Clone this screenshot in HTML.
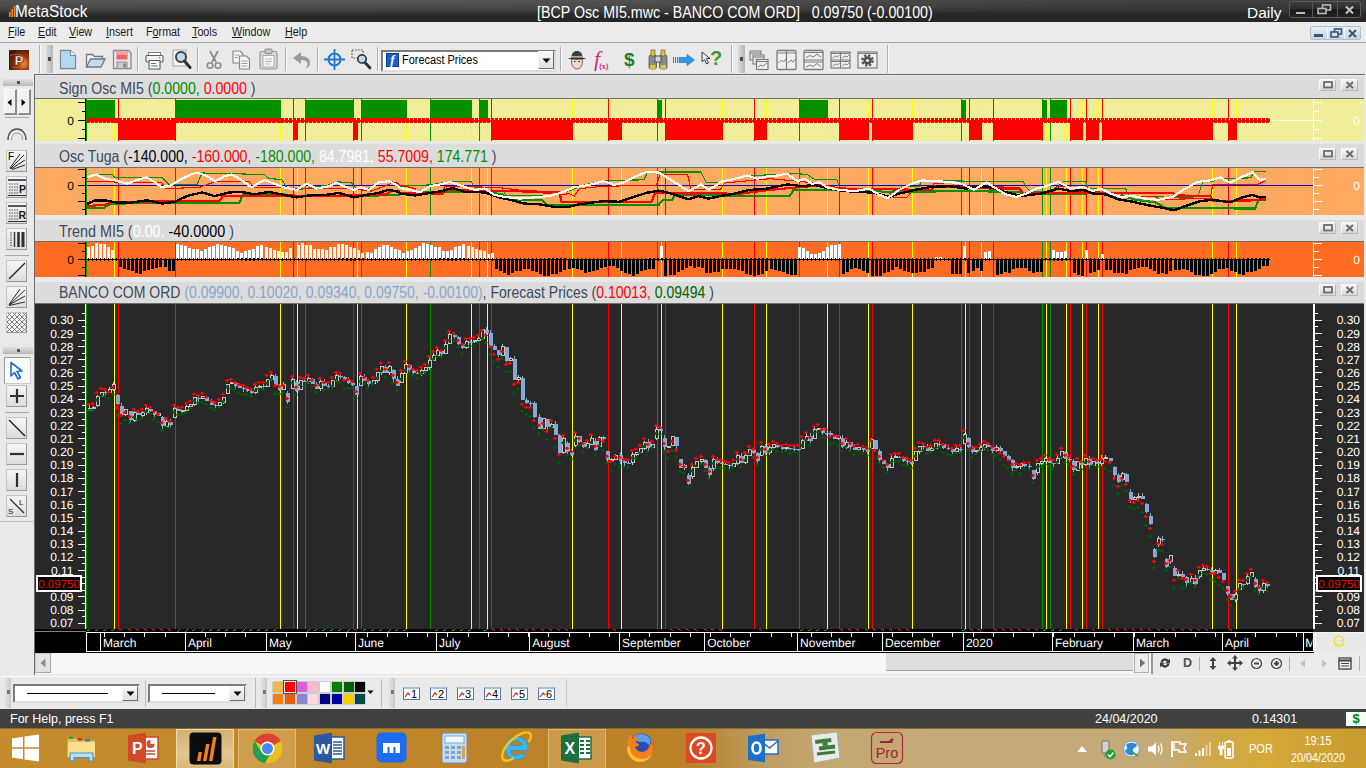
<!DOCTYPE html>
<html><head><meta charset="utf-8"><title>MetaStock</title>
<style>
*{box-sizing:border-box;margin:0;padding:0}
html,body{width:1366px;height:768px;overflow:hidden;background:#e9e9e9;font-family:"Liberation Sans",sans-serif;}
.abs{position:absolute}
#title{left:0;top:0;width:1366px;height:22px;background:radial-gradient(ellipse 900px 16px at 300px 0,#5a5a5a,rgba(90,90,90,0) 100%),linear-gradient(#404040 0%,#343434 50%,#2a2a2a 60%,#262626 100%);color:#fff;font-size:15.5px;line-height:24px;white-space:pre}
#menu{left:0;top:22px;width:1366px;height:21px;background:#ececec;font-size:12.5px;color:#1a1a1a;line-height:20px}
#menu span{transform:scaleX(.86);transform-origin:0 0}
#menu span{position:absolute;top:0}
#menu u{text-decoration:underline;text-underline-offset:1px}
#tb{left:0;top:43px;width:1366px;height:32px;background:#e9e9e9}
#left{left:0;top:75px;width:34px;height:601px;background:#e9e9e9}
.ptitle{font-size:16.5px;line-height:22px;color:#3c4a5e;white-space:pre;transform-origin:0 0}
.pbtn{width:17px;height:12px;background:linear-gradient(#f4f4f4,#d8d8d8);border:1px solid #b8b8b8;border-top-color:#fafafa;border-left-color:#fafafa}
#status{left:0;top:709px;width:1366px;height:19px;background:#404040;color:#fff;font-size:12.5px;line-height:21px}
#task{left:0;top:728px;width:1366px;height:40px;border-top:1px solid #86702c;background:linear-gradient(90deg,#c48c2c 0%,#be8428 30%,#bc8026 50%,#b98838 52%,#bf9c60 55.500%,#c3a670 60%,#c4aa78 68%,#c4aa78 85%,#cfa848 89%,#d4a838 93%,#c89a30 100%)}
.tbsep{width:1px;height:24px;background:#b4b4b4;top:4px}
.lbtn{left:6px;width:21px;height:21px;background:linear-gradient(#f6f6f6,#dcdcdc);border:1px solid #c4c4c4;border-bottom-color:#9a9a9a;border-right-color:#9a9a9a}
</style></head><body>
<!-- TITLE BAR -->
<div id="title" class="abs">
<svg class="abs" style="left:9px;top:5px" width="8" height="12"><rect x="0" y="7" width="1.6" height="5" fill="#f08a20"/><rect x="2.4" y="4" width="1.6" height="8" fill="#f08a20"/><rect x="4.8" y="1" width="1.6" height="11" fill="#f08a20"/></svg>
<span class="abs" style="left:15px;top:0px;font-size:17px;transform:scaleX(.9);transform-origin:0 0">MetaStock</span>
<span class="abs" style="left:537px;top:1px;font-size:16px;transform:scaleX(.889);transform-origin:0 0">[BCP Osc MI5.mwc - BANCO COM ORD]   0.09750 (-0.00100)</span>
<span class="abs" style="left:1247px;top:1px;font-size:15.5px">Daily</span>
<div class="abs" style="left:1289px;top:1px;width:72px;height:17px;border:1px solid #5c5c5c;border-radius:3px;background:linear-gradient(#3c3c3c,#2c2c2c 50%,#1a1a1a 50%,#222)"></div>
<div class="abs" style="left:1312px;top:2px;width:1px;height:15px;background:#555"></div>
<div class="abs" style="left:1337px;top:2px;width:1px;height:15px;background:#555"></div>
<div class="abs" style="left:1296px;top:12px;width:9px;height:2px;background:#bcbcbc"></div>
<svg class="abs" style="left:1317px;top:4px" width="15" height="11"><rect x="5.5" y="1" width="8" height="5" fill="none" stroke="#b8b8b8" stroke-width="1.6"/><rect x="1" y="4.5" width="8" height="5" fill="#2a2a2a" stroke="#b8b8b8" stroke-width="1.6"/></svg>
<svg class="abs" style="left:1344px;top:5px" width="11" height="10"><path d="M2 1.5L9 8.5M9 1.5L2 8.5" stroke="#c4c4c4" stroke-width="2"/></svg>
</div>
<!-- MENU -->
<div id="menu" class="abs">
<span style="left:8px"><u>F</u>ile</span><span style="left:38px"><u>E</u>dit</span><span style="left:69px"><u>V</u>iew</span><span style="left:106px"><u>I</u>nsert</span><span style="left:146px">F<u>o</u>rmat</span><span style="left:192px"><u>T</u>ools</span><span style="left:232px"><u>W</u>indow</span><span style="left:285px"><u>H</u>elp</span>
<div class="abs" style="left:1310px;top:4px;width:51px;height:14px;border:1px solid #a8c0d8;border-radius:2px;background:linear-gradient(#e4eef8,#c4d6e8)"></div>
<div class="abs" style="left:1327px;top:5px;width:1px;height:12px;background:#f4f8fc"></div>
<div class="abs" style="left:1344px;top:5px;width:1px;height:12px;background:#f4f8fc"></div>
<div class="abs" style="left:1314px;top:12px;width:9px;height:3px;background:#3c5870"></div>
<svg class="abs" style="left:1330px;top:6px" width="13" height="10"><rect x="4.5" y="1" width="7" height="5" fill="none" stroke="#3c5870" stroke-width="1.6"/><rect x="1" y="4" width="7" height="5" fill="#d4e0f0" stroke="#3c5870" stroke-width="1.6"/></svg>
<svg class="abs" style="left:1347px;top:7px" width="11" height="9"><path d="M2 1L9 8M9 1L2 8" stroke="#3c5870" stroke-width="2"/></svg>
</div>
<div class="abs" style="left:0;top:42px;width:1366px;height:1px;background:#a8a8a8"></div><div class="abs" style="left:0;top:43px;width:1366px;height:1px;background:#fafafa"></div>
<!-- TOOLBAR -->
<div id="tb" class="abs">
<svg class="abs" style="left:9px;top:7px" width="20" height="20" viewBox="0 0 20 20"><defs><radialGradient id="pg" cx="75%" cy="70%" r="80%"><stop offset="0" stop-color="#e88a28"/><stop offset=".35" stop-color="#a84010"/><stop offset="1" stop-color="#4a1808"/></radialGradient></defs><rect width="20" height="20" fill="url(#pg)"/><path d="M1 6c5-3 12-2 15 3s0 9-5 9" fill="none" stroke="#e8a060" stroke-width=".7" opacity=".7"/><path d="M3 17c6 2 13-2 14-8" fill="none" stroke="#f0b070" stroke-width=".6" opacity=".6"/><text x="10" y="15" font-size="13" font-weight="bold" text-anchor="middle" fill="#fff" stroke="#3a1a10" stroke-width=".4" font-family="Liberation Sans">P</text></svg>
<div class="abs" style="left:39px;top:2px;width:1px;height:28px;background:#b0b0b0"></div><div class="abs" style="left:40px;top:2px;width:1px;height:28px;background:#fbfbfb"></div>
<div class="abs" style="left:46px;top:2px;width:7px;height:28px;background:linear-gradient(90deg,#dcdcdc,#b4b4b4);border-radius:1px"></div><div class="abs" style="left:48px;top:14px;width:3px;height:4px;background:#4a4a4a"></div>
<svg class="abs" style="left:59px;top:6px" width="18" height="21" viewBox="0 0 18 21"><path d="M1.5 1.5h10l5 5v13h-15z" fill="#bfe0f4" stroke="#808890" stroke-width="1.3"/><path d="M11.5 1.5v5h5" fill="#fff" stroke="#808890" stroke-width="1.2"/><path d="M3 3h8v4h4v11H3z" fill="#a8d4f0" opacity=".7"/></svg>
<svg class="abs" style="left:85px;top:8px" width="21" height="18" viewBox="0 0 21 18"><path d="M1.5 16V3.5h6l2 2h8v3" fill="#f4f4f4" stroke="#707880" stroke-width="1.3"/><path d="M1.5 16l4-8h14.5l-4 8z" fill="#c4dcf0" stroke="#707880" stroke-width="1.3"/></svg>
<svg class="abs" style="left:112px;top:6px" width="20" height="21" viewBox="0 0 20 21"><path d="M1.5 1.5h15l2.5 2.5v15.5h-17.5z" fill="#e8e8ec" stroke="#8a8a94" stroke-width="1.3"/><rect x="4.5" y="2" width="11" height="8.5" fill="#f06068"/><rect x="4.5" y="2" width="11" height="4" fill="#f8a0a4"/><rect x="5" y="13" width="10" height="6.5" fill="#c8c8d0" stroke="#8a8a94"/><rect x="11.5" y="14.5" width="2" height="4" fill="#70707a"/></svg>
<div class="abs" style="left:137px;top:4px;width:1px;height:24px;background:#b0b0b0"></div><div class="abs" style="left:138px;top:4px;width:1px;height:24px;background:#fbfbfb"></div>
<svg class="abs" style="left:145px;top:8px" width="19" height="19" viewBox="0 0 19 19"><rect x="3.5" y="1.5" width="12" height="4" fill="#fff" stroke="#808080" stroke-width="1"/><rect x="1" y="4.500" width="17" height="6.500" rx="1" fill="#f4f4f4" stroke="#606060" stroke-width="1.1"/><rect x="14" y="6" width="1.500" height="1.500" fill="#50b050"/><rect x="4" y="9.500" width="11" height="8.500" fill="#f8fff8" stroke="#606060" stroke-width="1.100"/><path d="M6 12.500h5M6 15h7" stroke="#508050" stroke-width="1"/></svg>
<svg class="abs" style="left:172px;top:6px" width="20" height="21" viewBox="0 0 20 21"><rect x="1" y="1" width="13" height="16" fill="#f4f4f4" stroke="#a8a8a8"/><circle cx="9" cy="8" r="5" fill="#b8daf4" stroke="#404040" stroke-width="2"/><path d="M12.5 12l5.5 6.5" stroke="#303030" stroke-width="3" stroke-linecap="round"/></svg>
<div class="abs" style="left:197px;top:4px;width:1px;height:24px;background:#b0b0b0"></div><div class="abs" style="left:198px;top:4px;width:1px;height:24px;background:#fbfbfb"></div>
<svg class="abs" style="left:206px;top:7px" width="16" height="20" viewBox="0 0 16 20"><path d="M4 1l6 11M12 1L6 12" stroke="#8c8c8c" stroke-width="1.8"/><circle cx="4" cy="15.5" r="2.8" fill="none" stroke="#8c8c8c" stroke-width="1.6"/><circle cx="12" cy="15.5" r="2.8" fill="none" stroke="#8c8c8c" stroke-width="1.6"/></svg>
<svg class="abs" style="left:232px;top:7px" width="19" height="20" viewBox="0 0 19 20"><path d="M1 1h7l3 3v9H1z" fill="#f2f2f2" stroke="#8a8a8a" stroke-width="1.2"/><path d="M7.5 6h7l3 3v10h-10z" fill="#f6f6f6" stroke="#8a8a8a" stroke-width="1.2"/><path d="M9.5 11h6M9.5 13.500h6M9.500 16h6M3 5h4M3 7.500h3" stroke="#a0a0a0"/></svg>
<svg class="abs" style="left:259px;top:5px" width="19" height="22" viewBox="0 0 19 22"><rect x="1" y="3.500" width="17" height="17.500" rx="1.500" fill="#dadada" stroke="#9a9a9a" stroke-width="1.2"/><rect x="6" y="1" width="7" height="4.500" rx="1" fill="#c8c8c8" stroke="#8a8a8a"/><rect x="4" y="7.500" width="11" height="11.500" fill="#f8f8f8" stroke="#aaa"/><path d="M6 11h7M6 13.500h7M6 16h5" stroke="#b4b4b4"/></svg>
<div class="abs" style="left:285px;top:4px;width:1px;height:24px;background:#b0b0b0"></div><div class="abs" style="left:286px;top:4px;width:1px;height:24px;background:#fbfbfb"></div>
<svg class="abs" style="left:292px;top:8px" width="19" height="18" viewBox="0 0 19 18"><path d="M1 7l8-6v4c6 0 9 3 9 7 0 3-2 5-5 5.500 2-1.500 2.500-3 2.500-4.500 0-2.500-2.500-4-6.500-4v4z" fill="#9c9c9c"/></svg>
<div class="abs" style="left:317px;top:4px;width:1px;height:24px;background:#b0b0b0"></div><div class="abs" style="left:318px;top:4px;width:1px;height:24px;background:#fbfbfb"></div>
<svg class="abs" style="left:324px;top:6px" width="21" height="21" viewBox="0 0 21 21"><circle cx="10.500" cy="10.500" r="6" fill="none" stroke="#1c78d0" stroke-width="2"/><path d="M10.500 0v21M0 10.500h21" stroke="#1c78d0" stroke-width="1.800"/></svg>
<svg class="abs" style="left:351px;top:6px" width="21" height="21" viewBox="0 0 21 21"><rect x="1" y="1" width="11" height="8" fill="none" stroke="#505050" stroke-width="1.2" stroke-dasharray="1.500 1.500"/><circle cx="11" cy="10" r="4.200" fill="#b8daf4" stroke="#404040" stroke-width="1.800"/><path d="M14 13.500l5 5.500" stroke="#303030" stroke-width="2.800" stroke-linecap="round"/></svg>
<div class="abs" style="left:377px;top:4px;width:1px;height:24px;background:#b0b0b0"></div><div class="abs" style="left:378px;top:4px;width:1px;height:24px;background:#fbfbfb"></div>
<div class="abs" style="left:381px;top:6.5px;width:175px;height:22px;background:#fff;border:2px solid #7c7c7c;border-right-color:#dcdcdc;border-bottom-color:#dcdcdc"></div>
<div class="abs" style="left:386px;top:10px;width:13px;height:14px;background:#1860c8;border:1px solid #0c3c90;color:#fff;font-family:'Liberation Serif',serif;font-style:italic;font-weight:bold;font-size:13px;line-height:12px;text-align:center">f</div>
<div class="abs" style="left:402px;top:10px;font-size:12px;color:#000;transform:scaleX(.91);transform-origin:0 0;white-space:pre">Forecast Prices</div>
<div class="abs" style="left:538px;top:8px;width:16px;height:18px;background:linear-gradient(#f8f8f8,#e0e0e0);border:1px solid #f8f8f8;border-right-color:#707070;border-bottom-color:#707070"></div>
<svg class="abs" style="left:542px;top:15px" width="9" height="6" viewBox="0 0 9 6"><path d="M0.500 0.500h8l-4 4.500z" fill="#000"/></svg>
<div class="abs" style="left:560px;top:4px;width:1px;height:24px;background:#b0b0b0"></div><div class="abs" style="left:561px;top:4px;width:1px;height:24px;background:#fbfbfb"></div>
<svg class="abs" style="left:567px;top:6px" width="20" height="22" viewBox="0 0 20 22"><ellipse cx="10" cy="13" rx="5.500" ry="7" fill="#f0d8c8" stroke="#806860"/><path d="M1 9.500c3-1.500 15-1.500 18 0-2 1.500-16 1.500-18 0z" fill="#303030"/><path d="M4.500 9c0-5 2-7 5.500-7s5.500 2 5.500 7z" fill="#404040"/><rect x="4.500" y="7" width="11" height="1.600" fill="#b0b0b0"/><circle cx="7.800" cy="12.500" r=".8" fill="#202020"/><circle cx="12.200" cy="12.500" r=".8" fill="#202020"/></svg>
<div class="abs" style="left:594px;top:0px;width:22px;height:30px;color:#d02878;font-family:'Liberation Serif',serif;font-style:italic;font-size:22px;line-height:32px">f<span style="font-size:8px;font-style:normal;position:relative;top:3px;left:-1px;font-weight:bold">(x)</span></div>
<div class="abs" style="left:624px;top:3px;color:#1c8030;font-size:19px;line-height:28px;font-weight:bold">$</div>
<svg class="abs" style="left:648px;top:6px" width="20" height="21" viewBox="0 0 20 21"><rect x="1" y="6" width="7.500" height="14" rx="2" fill="#8c8c8c" stroke="#505050" stroke-width=".8"/><rect x="11.500" y="6" width="7.500" height="14" rx="2" fill="#8c8c8c" stroke="#505050" stroke-width=".8"/><rect x="3" y="1" width="4" height="6" fill="#e0c040" stroke="#605020" stroke-width=".6"/><rect x="13" y="1" width="4" height="6" fill="#e0c040" stroke="#605020" stroke-width=".6"/><rect x="7" y="7" width="6" height="6" fill="#d4d4d4" stroke="#505050"/><rect x="2" y="16" width="5.500" height="4" fill="#e0c040"/><rect x="12.500" y="16" width="5.500" height="4" fill="#e0c040"/></svg>
<svg class="abs" style="left:673px;top:11px" width="22" height="12" viewBox="0 0 22 12"><path d="M0.500 3v6M2.500 3v6M4.500 3v6" stroke="#1c88e0" stroke-width="1"/><path d="M6 3.500h8V0.500l7.500 5.500-7.500 5.500V8.500h-8z" fill="#2c98f0" stroke="#1070c8" stroke-width=".6"/></svg>
<svg class="abs" style="left:701px;top:8px" width="11" height="15" viewBox="0 0 11 15"><path d="M1 1v10l2.500-2.500 2 4.500 2-1-2-4.500h3.500z" fill="#e8e8e8" stroke="#404040" stroke-width="1"/></svg>
<div class="abs" style="left:710px;top:2px;color:#3c9c2c;font-weight:bold;font-size:20px;line-height:26px">?</div>
<div class="abs" style="left:731px;top:2px;width:1px;height:28px;background:#b0b0b0"></div><div class="abs" style="left:732px;top:2px;width:1px;height:28px;background:#fbfbfb"></div>
<div class="abs" style="left:738px;top:2px;width:7px;height:28px;background:linear-gradient(90deg,#dcdcdc,#b4b4b4);border-radius:1px"></div><div class="abs" style="left:740px;top:14px;width:3px;height:4px;background:#4a4a4a"></div>
<svg class="abs" style="left:749px;top:7px" width="20" height="21" viewBox="0 0 20 21"><rect x="1" y="1" width="11" height="9" fill="#e4e4e4" stroke="#7c7c7c"/><rect x="4" y="5" width="11" height="9" fill="#e4e4e4" stroke="#7c7c7c"/><rect x="7.500" y="9.500" width="11.500" height="10" fill="#efefef" stroke="#7c7c7c" stroke-width="1.200"/><path d="M9 17l3-2 2 1 4-3" stroke="#7c7c7c" fill="none"/><path d="M1 3h11M4 7h11M7.500 11.500h11.500" stroke="#7c7c7c"/></svg>
<svg class="abs" style="left:776px;top:6px" width="21" height="22" viewBox="0 0 21 22"><rect x="1" y="1.500" width="19" height="19" rx="1" fill="#efefef" stroke="#7c7c7c" stroke-width="1.300"/><path d="M10.500 1.500v19M1 4h19" stroke="#7c7c7c" stroke-width="1.200"/><path d="M2.500 14l3-3 2 2 2.500-3M12 14l3-3 2 2 2.500-3" stroke="#7c7c7c" fill="none"/></svg>
<svg class="abs" style="left:803px;top:6px" width="21" height="22" viewBox="0 0 21 22"><rect x="1" y="1.500" width="19" height="19" rx="1" fill="#efefef" stroke="#7c7c7c" stroke-width="1.300"/><path d="M1 11h19M1 3.500h19M1 13h19" stroke="#7c7c7c" stroke-width="1.100"/><path d="M3 8.500l4-2 3 1.500 4-3 4 3M3 18l4-2 3 1.500 4-3 4 3" stroke="#7c7c7c" fill="none"/></svg>
<svg class="abs" style="left:830px;top:8px" width="21" height="18" viewBox="0 0 21 18"><rect x="1" y="1" width="19" height="16" fill="#efefef" stroke="#7c7c7c" stroke-width="1.200"/><path d="M10.500 1v16M1 9h19M1 2.500h19M1 10.500h19" stroke="#7c7c7c" stroke-width="1.100"/><path d="M2.500 7l3-2 2 1 2-2M12 7l3-2 2 1 2-2M2.500 15l3-2 2 1 2-2M12 15l3-2 2 1 2-2" stroke="#7c7c7c" fill="none" stroke-width=".9"/></svg>
<svg class="abs" style="left:857px;top:8px" width="21" height="18" viewBox="0 0 21 18"><rect x="1" y="1" width="19" height="16" fill="#efefef" stroke="#7c7c7c" stroke-width="1.200"/><path d="M1 2.500h19" stroke="#7c7c7c"/><circle cx="10.500" cy="9.500" r="5" fill="none" stroke="#505050" stroke-width="2.600" stroke-dasharray="2.200 1.727"/><circle cx="10.500" cy="9.500" r="4" fill="#505050"/><circle cx="10.500" cy="9.500" r="1.600" fill="#efefef"/></svg>
<div class="abs" style="left:887px;top:2px;width:1px;height:28px;background:#b0b0b0"></div><div class="abs" style="left:888px;top:2px;width:1px;height:28px;background:#fbfbfb"></div>
</div>
<!-- LEFT TOOLBAR -->
<div id="left" class="abs">
<div class="abs" style="left:3px;top:4px;width:30px;height:7px;background:linear-gradient(#e0e0e0,#b8b8b8)"></div><div class="abs" style="left:17px;top:6px;width:3px;height:3px;background:#555"></div>
<div class="abs" style="left:4px;top:14px;width:13px;height:26px;background:#f2f2f2;border:1px solid #fdfdfd;border-right:2px solid #8c8c8c;border-bottom:2px solid #8c8c8c"></div>
<div class="abs" style="left:18px;top:14px;width:13px;height:26px;background:#f2f2f2;border:1px solid #fdfdfd;border-right:2px solid #8c8c8c;border-bottom:2px solid #8c8c8c"></div>
<svg class="abs" style="left:7px;top:24px" width="5" height="7" viewBox="0 0 5 7"><path d="M4.500 0L0.500 3.500L4.500 7z" fill="#000"/></svg>
<svg class="abs" style="left:21px;top:24px" width="5" height="7" viewBox="0 0 5 7"><path d="M0.500 0L4.500 3.500L0.500 7z" fill="#000"/></svg>
<div class="abs" style="left:5px;top:42px;width:24px;height:1px;background:#a8a8a8"></div>
<svg class="abs" style="left:6px;top:50px" width="22" height="16" viewBox="0 0 22 16"><path d="M2 15c0-7 4-11 9-11s9 4 9 11" fill="none" stroke="#505050" stroke-width="1.400"/><path d="M5.500 15c0-4.500 2.500-7 5.500-7s5.500 2.500 5.500 7" fill="none" stroke="#a0a0a0" stroke-width="1.200"/></svg>
<div class="abs lbtn" style="top:75px;height:22px;"></div><svg class="abs" style="left:7px;top:76px" width="20" height="20" viewBox="0 0 20 20"><text x="1" y="9" font-size="10" font-family="Liberation Sans" fill="#000">F</text><path d="M3 18L17 4M4 18l14-9M5 18.500l13-4.500M3 17L13 3" stroke="#303030" stroke-width="1"/></svg>
<div class="abs lbtn" style="top:101px;height:22px;"></div><svg class="abs" style="left:7px;top:102px" width="20" height="20" viewBox="0 0 20 20"><path d="M1 3h18" stroke="#303030" stroke-width="1.600"/><path d="M2 7h9M2 10h9M2 13h9M2 16h9" stroke="#505050" stroke-width="1.200" stroke-dasharray="1.500 1"/><text x="12" y="16" font-size="10.500" font-weight="bold" font-family="Liberation Sans" fill="#202020">P</text><path d="M1 18.500h18" stroke="#303030"/></svg>
<div class="abs lbtn" style="top:127px;height:22px;"></div><svg class="abs" style="left:7px;top:128px" width="20" height="20" viewBox="0 0 20 20"><path d="M1 3h18" stroke="#303030" stroke-width="1.600"/><path d="M2 7h9M2 10h9M2 13h9M2 16h9" stroke="#505050" stroke-width="1.200" stroke-dasharray="1.500 1"/><text x="11.500" y="16" font-size="10.500" font-weight="bold" font-family="Liberation Sans" fill="#202020">R</text><path d="M1 18.500h18" stroke="#303030"/></svg>
<div class="abs lbtn" style="top:153px;height:22px;"></div><svg class="abs" style="left:7px;top:154px" width="20" height="20" viewBox="0 0 20 20"><path d="M4 3v15" stroke="#404040" stroke-width="1" stroke-dasharray="1.500 1"/><path d="M7.500 3v15" stroke="#404040" stroke-width="1.500"/><path d="M11.500 3v15" stroke="#303030" stroke-width="2.500"/><path d="M16 3v15" stroke="#303030" stroke-width="3"/></svg>
<div class="abs" style="left:5px;top:180px;width:24px;height:1px;background:#a8a8a8"></div>
<div class="abs lbtn" style="top:185px;height:22px;"></div><svg class="abs" style="left:7px;top:186px" width="20" height="20" viewBox="0 0 20 20"><path d="M2 18L18 2" stroke="#202020" stroke-width="1.300"/></svg>
<div class="abs lbtn" style="top:211px;height:22px;"></div><svg class="abs" style="left:7px;top:212px" width="20" height="20" viewBox="0 0 20 20"><path d="M2 18L18 3M2 18l16-9M2 18.500l16-3.500M2 17.500L13 2" stroke="#303030" stroke-width="1"/></svg>
<div class="abs lbtn" style="top:237px;height:21px;background:#f4f4f4"></div>
<svg class="abs" style="left:7px;top:238px" width="20" height="19" viewBox="0 0 20 19"><path d="M0 4L4 0M0 9L9 0M0 14L14 0M0 19L19 0M5 19L20 4M10 19L20 9M15 19L20 14M16 0L20 4M11 0L20 9M6 0L20 14M1 0L20 19M0 4L15 19M0 9L10 19M0 14L5 19" stroke="#606060" stroke-width=".8" fill="none"/></svg>
<div class="abs" style="left:3px;top:272px;width:30px;height:7px;background:linear-gradient(#e0e0e0,#b8b8b8)"></div><div class="abs" style="left:17px;top:274px;width:3px;height:3px;background:#555"></div>
<div class="abs" style="left:4px;top:282px;width:27px;height:27px;background:#fafafa;border:1px solid #c8c8c8;border-top-color:#9a9a9a;border-left-color:#9a9a9a"></div>
<svg class="abs" style="left:9px;top:286px" width="16" height="19" viewBox="0 0 16 19"><path d="M2 1.500l11 8.500-5 .5 3.500 6-2.500 1.500-3.500-6.500-3.500 3.500z" fill="#fff" stroke="#1c70d8" stroke-width="1.600" stroke-linejoin="round"/></svg>
<div class="abs lbtn" style="top:310px;height:22px;"></div><svg class="abs" style="left:7px;top:311px" width="20" height="20" viewBox="0 0 20 20"><path d="M10 3v14M3 10h14" stroke="#303030" stroke-width="2.200"/></svg>
<div class="abs" style="left:5px;top:337px;width:24px;height:1px;background:#a8a8a8"></div>
<div class="abs lbtn" style="top:342px;height:22px;"></div><svg class="abs" style="left:7px;top:343px" width="20" height="20" viewBox="0 0 20 20"><path d="M2 2l16 16" stroke="#202020" stroke-width="1.500"/></svg>
<div class="abs lbtn" style="top:368px;height:22px;"></div><svg class="abs" style="left:7px;top:369px" width="20" height="20" viewBox="0 0 20 20"><path d="M3 10h14" stroke="#303030" stroke-width="2.200"/></svg>
<div class="abs lbtn" style="top:394px;height:22px;"></div><svg class="abs" style="left:7px;top:395px" width="20" height="20" viewBox="0 0 20 20"><path d="M10 3v14" stroke="#303030" stroke-width="2.200"/></svg>
<div class="abs lbtn" style="top:420px;height:22px;"></div><svg class="abs" style="left:7px;top:421px" width="20" height="20" viewBox="0 0 20 20"><path d="M3 3l14 14" stroke="#303030" stroke-width="1.300"/><text x="1" y="18" font-size="8" font-family="Liberation Sans" fill="#202020">S</text><text x="12" y="9" font-size="8" font-family="Liberation Sans" fill="#202020">L</text></svg>
<div class="abs" style="left:0px;top:446px;width:34px;height:1px;background:#c0c0c0"></div>
</div>
<svg width="1366" height="768" viewBox="0 0 1366 768" style="position:absolute;left:0;top:0" font-family="Liberation Sans, sans-serif" shape-rendering="crispEdges" text-rendering="geometricPrecision"><defs><clipPath id="cpm"><rect x="1300" y="632" width="12.5" height="22"/></clipPath></defs><rect x="34" y="75" width="1331" height="600" fill="#e9e9e9"/>
<rect x="34" y="74" width="1331" height="1.2" fill="#6a6a6a"/>
<rect x="34" y="74" width="1.2" height="601" fill="#6a6a6a"/>
<rect x="35" y="76" width="1329" height="22" fill="#dcdcdc"/>
<rect x="35" y="97.8" width="1329" height="1.2" fill="#6e6e6e"/>
<rect x="35" y="99" width="1329" height="42" fill="#f0ee98"/>
<rect x="35" y="144" width="1329" height="23" fill="#dcdcdc"/>
<rect x="35" y="166.8" width="1329" height="1.2" fill="#6e6e6e"/>
<rect x="35" y="168" width="1329" height="47" fill="#ffaa60"/>
<rect x="35" y="220" width="1329" height="21" fill="#dcdcdc"/>
<rect x="35" y="240.8" width="1329" height="1.2" fill="#6e6e6e"/>
<rect x="35" y="242" width="1329" height="35" fill="#ff6c22"/>
<rect x="35" y="282" width="1329" height="21" fill="#dcdcdc"/>
<rect x="35" y="302.8" width="1329" height="1.2" fill="#6e6e6e"/>
<rect x="35" y="304" width="1329" height="325" fill="#282828"/>
<rect x="114" y="99" width="1" height="42" fill="#ffff00"/>
<rect x="280" y="99" width="1" height="42" fill="#ffff00"/>
<rect x="297" y="99" width="1" height="42" fill="#ffff00"/>
<rect x="357" y="99" width="1" height="42" fill="#ffff00"/>
<rect x="406" y="99" width="1" height="42" fill="#ffff00"/>
<rect x="471" y="99" width="1" height="42" fill="#ffff00"/>
<rect x="487" y="99" width="1" height="42" fill="#ffff00"/>
<rect x="572" y="99" width="1" height="42" fill="#ffff00"/>
<rect x="621" y="99" width="1" height="42" fill="#ffff00"/>
<rect x="661" y="99" width="1" height="42" fill="#ffff00"/>
<rect x="722" y="99" width="1" height="42" fill="#ffff00"/>
<rect x="766" y="99" width="1" height="42" fill="#ffff00"/>
<rect x="827" y="99" width="1" height="42" fill="#ffff00"/>
<rect x="868" y="99" width="1" height="42" fill="#ffff00"/>
<rect x="912" y="99" width="1" height="42" fill="#ffff00"/>
<rect x="965" y="99" width="1" height="42" fill="#ffff00"/>
<rect x="981" y="99" width="1" height="42" fill="#ffff00"/>
<rect x="1046" y="99" width="1" height="42" fill="#ffff00"/>
<rect x="1066" y="99" width="1" height="42" fill="#ffff00"/>
<rect x="1082" y="99" width="1" height="42" fill="#ffff00"/>
<rect x="1098" y="99" width="1" height="42" fill="#ffff00"/>
<rect x="1212" y="99" width="1" height="42" fill="#ffff00"/>
<rect x="1236" y="99" width="1" height="42" fill="#ffff00"/>
<rect x="175" y="99" width="1" height="42" fill="#009000"/>
<rect x="305" y="99" width="1" height="42" fill="#009000"/>
<rect x="361" y="99" width="1" height="42" fill="#009000"/>
<rect x="430" y="99" width="1" height="42" fill="#009000"/>
<rect x="479" y="99" width="1" height="42" fill="#009000"/>
<rect x="657" y="99" width="1" height="42" fill="#009000"/>
<rect x="799" y="99" width="1" height="42" fill="#009000"/>
<rect x="961" y="99" width="1" height="42" fill="#009000"/>
<rect x="1042" y="99" width="1" height="42" fill="#009000"/>
<rect x="1050" y="99" width="1" height="42" fill="#009000"/>
<rect x="118" y="99" width="1" height="42" fill="#ff0000"/>
<rect x="293" y="99" width="1" height="42" fill="#ff0000"/>
<rect x="353" y="99" width="1" height="42" fill="#ff0000"/>
<rect x="491" y="99" width="1" height="42" fill="#ff0000"/>
<rect x="608" y="99" width="1" height="42" fill="#ff0000"/>
<rect x="665" y="99" width="1" height="42" fill="#ff0000"/>
<rect x="754" y="99" width="1" height="42" fill="#ff0000"/>
<rect x="839" y="99" width="1" height="42" fill="#ff0000"/>
<rect x="872" y="99" width="1" height="42" fill="#ff0000"/>
<rect x="969" y="99" width="1" height="42" fill="#ff0000"/>
<rect x="993" y="99" width="1" height="42" fill="#ff0000"/>
<rect x="1070" y="99" width="1" height="42" fill="#ff0000"/>
<rect x="1086" y="99" width="1" height="42" fill="#ff0000"/>
<rect x="1102" y="99" width="1" height="42" fill="#ff0000"/>
<rect x="1228" y="99" width="1" height="42" fill="#ff0000"/>
<rect x="86" y="100" width="29" height="18" fill="#009000"/>
<rect x="118" y="122" width="58" height="17.7" fill="#ff0000"/>
<rect x="175" y="100" width="106" height="18" fill="#009000"/>
<rect x="293" y="122" width="5" height="17.7" fill="#ff0000"/>
<rect x="305" y="100" width="49" height="18" fill="#009000"/>
<rect x="353" y="122" width="5" height="17.7" fill="#ff0000"/>
<rect x="361" y="100" width="46" height="18" fill="#009000"/>
<rect x="430" y="100" width="42" height="18" fill="#009000"/>
<rect x="479" y="100" width="9" height="18" fill="#009000"/>
<rect x="491" y="122" width="82" height="17.7" fill="#ff0000"/>
<rect x="608" y="122" width="14" height="17.7" fill="#ff0000"/>
<rect x="657" y="100" width="5" height="18" fill="#009000"/>
<rect x="665" y="122" width="58" height="17.7" fill="#ff0000"/>
<rect x="754" y="122" width="13" height="17.7" fill="#ff0000"/>
<rect x="799" y="100" width="29" height="18" fill="#009000"/>
<rect x="839" y="122" width="30" height="17.7" fill="#ff0000"/>
<rect x="872" y="122" width="41" height="17.7" fill="#ff0000"/>
<rect x="961" y="100" width="5" height="18" fill="#009000"/>
<rect x="969" y="122" width="13" height="17.7" fill="#ff0000"/>
<rect x="993" y="122" width="50" height="17.7" fill="#ff0000"/>
<rect x="1042" y="100" width="5" height="18" fill="#009000"/>
<rect x="1050" y="100" width="17" height="18" fill="#009000"/>
<rect x="1070" y="122" width="13" height="17.7" fill="#ff0000"/>
<rect x="1086" y="122" width="13" height="17.7" fill="#ff0000"/>
<rect x="1102" y="122" width="111" height="17.7" fill="#ff0000"/>
<rect x="1228" y="122" width="9" height="17.7" fill="#ff0000"/>
<rect x="86" y="118" width="1183" height="5" fill="#ff0000"/>
<path d="M90 122h1v1.5h-1zM94 122h1v1.5h-1zM98 122h1v1.5h-1zM102 122h1v1.5h-1zM106 122h1v1.5h-1zM110 122h1v1.5h-1zM122 118h1v1.5h-1zM126 118h1v1.5h-1zM130 118h1v1.5h-1zM134 118h1v1.5h-1zM138 118h1v1.5h-1zM142 118h1v1.5h-1zM146 118h1v1.5h-1zM150 118h1v1.5h-1zM154 118h1v1.5h-1zM158 118h1v1.5h-1zM162 118h1v1.5h-1zM166 118h1v1.5h-1zM170 118h1v1.5h-1zM179 122h1v1.5h-1zM183 122h1v1.5h-1zM187 122h1v1.5h-1zM191 122h1v1.5h-1zM195 122h1v1.5h-1zM199 122h1v1.5h-1zM203 122h1v1.5h-1zM207 122h1v1.5h-1zM211 122h1v1.5h-1zM215 122h1v1.5h-1zM219 122h1v1.5h-1zM223 122h1v1.5h-1zM227 122h1v1.5h-1zM231 122h1v1.5h-1zM235 122h1v1.5h-1zM239 122h1v1.5h-1zM243 122h1v1.5h-1zM247 122h1v1.5h-1zM251 122h1v1.5h-1zM255 122h1v1.5h-1zM259 122h1v1.5h-1zM263 122h1v1.5h-1zM267 122h1v1.5h-1zM271 122h1v1.5h-1zM276 122h1v1.5h-1zM284 118h1v1.5h-1zM284 122h1v1.5h-1zM288 118h1v1.5h-1zM288 122h1v1.5h-1zM292 118h1v1.5h-1zM292 122h1v1.5h-1zM296 118h1v1.5h-1zM300 118h1v1.5h-1zM300 122h1v1.5h-1zM304 118h1v1.5h-1zM304 122h1v1.5h-1zM308 122h1v1.5h-1zM312 122h1v1.5h-1zM316 122h1v1.5h-1zM320 122h1v1.5h-1zM324 122h1v1.5h-1zM328 122h1v1.5h-1zM332 122h1v1.5h-1zM336 122h1v1.5h-1zM340 122h1v1.5h-1zM344 122h1v1.5h-1zM348 122h1v1.5h-1zM352 122h1v1.5h-1zM356 118h1v1.5h-1zM360 118h1v1.5h-1zM360 122h1v1.5h-1zM364 122h1v1.5h-1zM368 122h1v1.5h-1zM373 122h1v1.5h-1zM377 122h1v1.5h-1zM381 122h1v1.5h-1zM385 122h1v1.5h-1zM389 122h1v1.5h-1zM393 122h1v1.5h-1zM397 122h1v1.5h-1zM401 122h1v1.5h-1zM405 122h1v1.5h-1zM409 118h1v1.5h-1zM409 122h1v1.5h-1zM413 118h1v1.5h-1zM413 122h1v1.5h-1zM417 118h1v1.5h-1zM417 122h1v1.5h-1zM421 118h1v1.5h-1zM421 122h1v1.5h-1zM425 118h1v1.5h-1zM425 122h1v1.5h-1zM429 118h1v1.5h-1zM429 122h1v1.5h-1zM433 122h1v1.5h-1zM437 122h1v1.5h-1zM441 122h1v1.5h-1zM445 122h1v1.5h-1zM449 122h1v1.5h-1zM453 122h1v1.5h-1zM457 122h1v1.5h-1zM461 122h1v1.5h-1zM465 122h1v1.5h-1zM469 122h1v1.5h-1zM474 118h1v1.5h-1zM474 122h1v1.5h-1zM478 118h1v1.5h-1zM478 122h1v1.5h-1zM482 122h1v1.5h-1zM486 122h1v1.5h-1zM490 118h1v1.5h-1zM490 122h1v1.5h-1zM494 118h1v1.5h-1zM498 118h1v1.5h-1zM502 118h1v1.5h-1zM506 118h1v1.5h-1zM510 118h1v1.5h-1zM514 118h1v1.5h-1zM518 118h1v1.5h-1zM522 118h1v1.5h-1zM526 118h1v1.5h-1zM530 118h1v1.5h-1zM534 118h1v1.5h-1zM538 118h1v1.5h-1zM542 118h1v1.5h-1zM546 118h1v1.5h-1zM550 118h1v1.5h-1zM554 118h1v1.5h-1zM558 118h1v1.5h-1zM562 118h1v1.5h-1zM566 118h1v1.5h-1zM570 118h1v1.5h-1zM575 118h1v1.5h-1zM575 122h1v1.5h-1zM579 118h1v1.5h-1zM579 122h1v1.5h-1zM583 118h1v1.5h-1zM583 122h1v1.5h-1zM587 118h1v1.5h-1zM587 122h1v1.5h-1zM591 118h1v1.5h-1zM591 122h1v1.5h-1zM595 118h1v1.5h-1zM595 122h1v1.5h-1zM599 118h1v1.5h-1zM599 122h1v1.5h-1zM603 118h1v1.5h-1zM603 122h1v1.5h-1zM607 118h1v1.5h-1zM607 122h1v1.5h-1zM611 118h1v1.5h-1zM615 118h1v1.5h-1zM619 118h1v1.5h-1zM623 118h1v1.5h-1zM623 122h1v1.5h-1zM627 118h1v1.5h-1zM627 122h1v1.5h-1zM631 118h1v1.5h-1zM631 122h1v1.5h-1zM635 118h1v1.5h-1zM635 122h1v1.5h-1zM639 118h1v1.5h-1zM639 122h1v1.5h-1zM643 118h1v1.5h-1zM643 122h1v1.5h-1zM647 118h1v1.5h-1zM647 122h1v1.5h-1zM651 118h1v1.5h-1zM651 122h1v1.5h-1zM655 118h1v1.5h-1zM655 122h1v1.5h-1zM659 122h1v1.5h-1zM663 118h1v1.5h-1zM663 122h1v1.5h-1zM667 118h1v1.5h-1zM671 118h1v1.5h-1zM675 118h1v1.5h-1zM680 118h1v1.5h-1zM684 118h1v1.5h-1zM688 118h1v1.5h-1zM692 118h1v1.5h-1zM696 118h1v1.5h-1zM700 118h1v1.5h-1zM704 118h1v1.5h-1zM708 118h1v1.5h-1zM712 118h1v1.5h-1zM716 118h1v1.5h-1zM720 118h1v1.5h-1zM724 118h1v1.5h-1zM724 122h1v1.5h-1zM728 118h1v1.5h-1zM728 122h1v1.5h-1zM732 118h1v1.5h-1zM732 122h1v1.5h-1zM736 118h1v1.5h-1zM736 122h1v1.5h-1zM740 118h1v1.5h-1zM740 122h1v1.5h-1zM744 118h1v1.5h-1zM744 122h1v1.5h-1zM748 118h1v1.5h-1zM748 122h1v1.5h-1zM752 118h1v1.5h-1zM752 122h1v1.5h-1zM756 118h1v1.5h-1zM760 118h1v1.5h-1zM764 118h1v1.5h-1zM768 118h1v1.5h-1zM768 122h1v1.5h-1zM772 118h1v1.5h-1zM772 122h1v1.5h-1zM776 118h1v1.5h-1zM776 122h1v1.5h-1zM781 118h1v1.5h-1zM781 122h1v1.5h-1zM785 118h1v1.5h-1zM785 122h1v1.5h-1zM789 118h1v1.5h-1zM789 122h1v1.5h-1zM793 118h1v1.5h-1zM793 122h1v1.5h-1zM797 118h1v1.5h-1zM797 122h1v1.5h-1zM801 122h1v1.5h-1zM805 122h1v1.5h-1zM809 122h1v1.5h-1zM813 122h1v1.5h-1zM817 122h1v1.5h-1zM821 122h1v1.5h-1zM825 122h1v1.5h-1zM829 118h1v1.5h-1zM829 122h1v1.5h-1zM833 118h1v1.5h-1zM833 122h1v1.5h-1zM837 118h1v1.5h-1zM837 122h1v1.5h-1zM841 118h1v1.5h-1zM845 118h1v1.5h-1zM849 118h1v1.5h-1zM853 118h1v1.5h-1zM857 118h1v1.5h-1zM861 118h1v1.5h-1zM865 118h1v1.5h-1zM869 118h1v1.5h-1zM869 122h1v1.5h-1zM873 118h1v1.5h-1zM877 118h1v1.5h-1zM882 118h1v1.5h-1zM886 118h1v1.5h-1zM890 118h1v1.5h-1zM894 118h1v1.5h-1zM898 118h1v1.5h-1zM902 118h1v1.5h-1zM906 118h1v1.5h-1zM910 118h1v1.5h-1zM914 118h1v1.5h-1zM914 122h1v1.5h-1zM918 118h1v1.5h-1zM918 122h1v1.5h-1zM922 118h1v1.5h-1zM922 122h1v1.5h-1zM926 118h1v1.5h-1zM926 122h1v1.5h-1zM930 118h1v1.5h-1zM930 122h1v1.5h-1zM934 118h1v1.5h-1zM934 122h1v1.5h-1zM938 118h1v1.5h-1zM938 122h1v1.5h-1zM942 118h1v1.5h-1zM942 122h1v1.5h-1zM946 118h1v1.5h-1zM946 122h1v1.5h-1zM950 118h1v1.5h-1zM950 122h1v1.5h-1zM954 118h1v1.5h-1zM954 122h1v1.5h-1zM958 118h1v1.5h-1zM958 122h1v1.5h-1zM962 122h1v1.5h-1zM966 118h1v1.5h-1zM966 122h1v1.5h-1zM970 118h1v1.5h-1zM974 118h1v1.5h-1zM978 118h1v1.5h-1zM983 118h1v1.5h-1zM983 122h1v1.5h-1zM987 118h1v1.5h-1zM987 122h1v1.5h-1zM991 118h1v1.5h-1zM991 122h1v1.5h-1zM995 118h1v1.5h-1zM999 118h1v1.5h-1zM1003 118h1v1.5h-1zM1007 118h1v1.5h-1zM1011 118h1v1.5h-1zM1015 118h1v1.5h-1zM1019 118h1v1.5h-1zM1023 118h1v1.5h-1zM1027 118h1v1.5h-1zM1031 118h1v1.5h-1zM1035 118h1v1.5h-1zM1039 118h1v1.5h-1zM1043 122h1v1.5h-1zM1047 118h1v1.5h-1zM1047 122h1v1.5h-1zM1051 122h1v1.5h-1zM1055 122h1v1.5h-1zM1059 122h1v1.5h-1zM1063 122h1v1.5h-1zM1067 118h1v1.5h-1zM1067 122h1v1.5h-1zM1071 118h1v1.5h-1zM1075 118h1v1.5h-1zM1079 118h1v1.5h-1zM1084 118h1v1.5h-1zM1084 122h1v1.5h-1zM1088 118h1v1.5h-1zM1092 118h1v1.5h-1zM1096 118h1v1.5h-1zM1100 118h1v1.5h-1zM1100 122h1v1.5h-1zM1104 118h1v1.5h-1zM1108 118h1v1.5h-1zM1112 118h1v1.5h-1zM1116 118h1v1.5h-1zM1120 118h1v1.5h-1zM1124 118h1v1.5h-1zM1128 118h1v1.5h-1zM1132 118h1v1.5h-1zM1136 118h1v1.5h-1zM1140 118h1v1.5h-1zM1144 118h1v1.5h-1zM1148 118h1v1.5h-1zM1152 118h1v1.5h-1zM1156 118h1v1.5h-1zM1160 118h1v1.5h-1zM1164 118h1v1.5h-1zM1168 118h1v1.5h-1zM1172 118h1v1.5h-1zM1176 118h1v1.5h-1zM1180 118h1v1.5h-1zM1185 118h1v1.5h-1zM1189 118h1v1.5h-1zM1193 118h1v1.5h-1zM1197 118h1v1.5h-1zM1201 118h1v1.5h-1zM1205 118h1v1.5h-1zM1209 118h1v1.5h-1zM1213 118h1v1.5h-1zM1213 122h1v1.5h-1zM1217 118h1v1.5h-1zM1217 122h1v1.5h-1zM1221 118h1v1.5h-1zM1221 122h1v1.5h-1zM1225 118h1v1.5h-1zM1225 122h1v1.5h-1zM1229 118h1v1.5h-1zM1233 118h1v1.5h-1zM1237 118h1v1.5h-1zM1237 122h1v1.5h-1zM1241 118h1v1.5h-1zM1241 122h1v1.5h-1zM1245 118h1v1.5h-1zM1245 122h1v1.5h-1zM1249 118h1v1.5h-1zM1249 122h1v1.5h-1zM1253 118h1v1.5h-1zM1253 122h1v1.5h-1zM1257 118h1v1.5h-1zM1257 122h1v1.5h-1zM1261 118h1v1.5h-1zM1261 122h1v1.5h-1zM1265 118h1v1.5h-1zM1265 122h1v1.5h-1z" fill="#f0ee98"/>
<circle cx="1268" cy="120.7" r="2" fill="#ff0000"/>
<line x1="1270" y1="120.5" x2="1313" y2="120.5" stroke="#ffffff" stroke-width="1"/>
<rect x="84.5" y="99" width="1.5" height="42" fill="#000000"/>
<rect x="86" y="99" width="1" height="42" fill="#009000"/>
<rect x="78" y="102" width="7" height="1" fill="#000000"/>
<rect x="1314" y="102" width="8" height="1" fill="#ffffff"/>
<rect x="81.5" y="111" width="3.5" height="1" fill="#000000"/>
<rect x="1314" y="111" width="4.5" height="1" fill="#ffffff"/>
<rect x="78" y="120" width="7" height="1" fill="#000000"/>
<rect x="1314" y="120" width="8" height="1" fill="#ffffff"/>
<rect x="81.5" y="129" width="3.5" height="1" fill="#000000"/>
<rect x="1314" y="129" width="4.5" height="1" fill="#ffffff"/>
<rect x="78" y="138" width="7" height="1" fill="#000000"/>
<rect x="1314" y="138" width="8" height="1" fill="#ffffff"/>
<rect x="1313" y="99" width="1.3" height="42" fill="#ffffff"/>
<text x="74" y="125" fill="#000000" font-size="12" text-anchor="end">0</text>
<text x="1360" y="125" fill="#ffffff" font-size="12" text-anchor="end">0</text>
<rect x="114" y="168" width="1" height="47" fill="#ffff00"/>
<rect x="280" y="168" width="1" height="47" fill="#ffff00"/>
<rect x="297" y="168" width="1" height="47" fill="#ffff00"/>
<rect x="357" y="168" width="1" height="47" fill="#ffff00"/>
<rect x="406" y="168" width="1" height="47" fill="#ffff00"/>
<rect x="471" y="168" width="1" height="47" fill="#ffff00"/>
<rect x="487" y="168" width="1" height="47" fill="#ffff00"/>
<rect x="572" y="168" width="1" height="47" fill="#ffff00"/>
<rect x="621" y="168" width="1" height="47" fill="#ffff00"/>
<rect x="661" y="168" width="1" height="47" fill="#ffff00"/>
<rect x="722" y="168" width="1" height="47" fill="#ffff00"/>
<rect x="766" y="168" width="1" height="47" fill="#ffff00"/>
<rect x="827" y="168" width="1" height="47" fill="#ffff00"/>
<rect x="868" y="168" width="1" height="47" fill="#ffff00"/>
<rect x="912" y="168" width="1" height="47" fill="#ffff00"/>
<rect x="965" y="168" width="1" height="47" fill="#ffff00"/>
<rect x="981" y="168" width="1" height="47" fill="#ffff00"/>
<rect x="1046" y="168" width="1" height="47" fill="#ffff00"/>
<rect x="1066" y="168" width="1" height="47" fill="#ffff00"/>
<rect x="1082" y="168" width="1" height="47" fill="#ffff00"/>
<rect x="1098" y="168" width="1" height="47" fill="#ffff00"/>
<rect x="1212" y="168" width="1" height="47" fill="#ffff00"/>
<rect x="1236" y="168" width="1" height="47" fill="#ffff00"/>
<rect x="175" y="168" width="1" height="47" fill="#009000"/>
<rect x="305" y="168" width="1" height="47" fill="#009000"/>
<rect x="361" y="168" width="1" height="47" fill="#009000"/>
<rect x="430" y="168" width="1" height="47" fill="#009000"/>
<rect x="479" y="168" width="1" height="47" fill="#009000"/>
<rect x="657" y="168" width="1" height="47" fill="#009000"/>
<rect x="799" y="168" width="1" height="47" fill="#009000"/>
<rect x="961" y="168" width="1" height="47" fill="#009000"/>
<rect x="1042" y="168" width="1" height="47" fill="#009000"/>
<rect x="1050" y="168" width="1" height="47" fill="#009000"/>
<rect x="118" y="168" width="1" height="47" fill="#ff0000"/>
<rect x="293" y="168" width="1" height="47" fill="#ff0000"/>
<rect x="353" y="168" width="1" height="47" fill="#ff0000"/>
<rect x="491" y="168" width="1" height="47" fill="#ff0000"/>
<rect x="608" y="168" width="1" height="47" fill="#ff0000"/>
<rect x="665" y="168" width="1" height="47" fill="#ff0000"/>
<rect x="754" y="168" width="1" height="47" fill="#ff0000"/>
<rect x="839" y="168" width="1" height="47" fill="#ff0000"/>
<rect x="872" y="168" width="1" height="47" fill="#ff0000"/>
<rect x="969" y="168" width="1" height="47" fill="#ff0000"/>
<rect x="993" y="168" width="1" height="47" fill="#ff0000"/>
<rect x="1070" y="168" width="1" height="47" fill="#ff0000"/>
<rect x="1086" y="168" width="1" height="47" fill="#ff0000"/>
<rect x="1102" y="168" width="1" height="47" fill="#ff0000"/>
<rect x="1228" y="168" width="1" height="47" fill="#ff0000"/>
<line x1="86" y1="185.5" x2="1313" y2="185.5" stroke="#0000d0" stroke-width="1.2"/>
<polyline points="86.2,178.7 96.2,174.5 112.4,174.5 114.8,177.4 162.1,177.4 169.6,184.9 197,184.9 202,173 264.2,174.5 269.1,178.7 281.6,179.4 286.6,187.4 296.5,189.9 328.9,184.9 336.3,181.9 351.3,182.4 356.3,188.6 368.7,188.6 373.7,184.9 383.6,181.2 396.1,182.4 399.8,186.2 429.9,184.9 452.3,181.2 470.9,181.2 474.7,187.9 502,187.9 505.8,195.4 549.3,196.1 571.7,189.9 584.2,184.9 606.6,180.4 643.9,179.9 647.6,172 701.1,172 706.1,182.4 719.8,182.9 734.9,178.7 752.4,175.5 797.2,173.7 807.1,174.5 814.6,179.4 837,179.9 839.5,187.4 859.4,189.9 889.2,191.9 904.2,186.9 919.1,186.9 921.6,180.4 971.4,181.2 976.3,181.9 1023.6,181.9 1026,186.9 1031,191.9 1050.9,191.9 1063.3,181.9 1085.7,181.9 1088.2,188.6 1125.6,188.6 1129.3,196.9 1160.4,196.1 1165.4,197.4 1197.7,196.9 1202.7,181.9 1212.7,181.9 1216.4,178.7 1251.2,177.9 1253.7,171.2 1266.2,171.2" fill="none" stroke="#009000" stroke-width="1.1" stroke-linejoin="round"/>
<polyline points="86.2,181.2 112.4,181.2 117.3,182.9 162.1,182.9 165.9,188.6 199.5,187.4 214.4,181.9 249.2,181.9 254.2,187.4 284.1,187.4 291.5,188.6 351.3,188.6 371.2,191.1 391.1,183.7 396.1,181.9 399.8,184.9 414.9,188.6 418.7,193.6 442.3,192.9 444.8,186.2 497.1,187.4 559.3,194.9 569.2,193.6 574.2,196.1 579.2,188.6 604.1,186.2 656.3,185.4 660.1,174.5 687.5,174.5 691.2,189.9 719.8,189.9 725,182.9 769.8,178.7 797.2,181.2 814.6,182.9 837,187.4 869.3,189.9 889.2,192.9 894.2,197.4 906.7,197.4 911.6,191.9 931.5,191.9 934,183.7 951.5,182.4 956.4,187.9 1018.7,189.9 1024.9,193.6 1026,192.4 1053.4,191.9 1055.9,186.9 1065.8,186.9 1068.3,191.1 1098.2,191.1 1103.2,193.6 1120.6,193.6 1125.6,196.9 1155.4,196.9 1161.6,199.3 1210.2,198.6 1212.7,184.4 1257.5,184.4 1266.2,180.4" fill="none" stroke="#ff0000" stroke-width="1.1" stroke-linejoin="round"/>
<polyline points="86.2,207.8 103.6,207.8 111.1,203.6 174.6,202.8 239.3,202.8 243,194.4 284.1,194.4 291.5,196.1 353.8,196.1 398.6,194.9 400,194.4 429.9,191.9 487.1,191.9 502,194.4 507,197.4 517,199.8 541.9,199.8 546.8,204.8 658.8,204.8 662.6,200.3 672.5,199.8 675,194.4 719.8,195.4 789.7,196.1 793.4,189.9 869.3,189.9 884.3,191.9 968.9,191.1 1018.7,191.9 1026,194.4 1085.7,193.6 1088.2,191.9 1125.6,196.9 1135.5,199.8 1155.4,202.3 1165.4,207.8 1255,208.6 1258.7,199.8 1266.2,199.8" fill="none" stroke="#009000" stroke-width="2.2" stroke-linejoin="round"/>
<polyline points="86.2,206.1 104.9,204.8 112.4,201.8 219.4,201.1 223.1,196.1 291.5,195.4 304,196.1 353.8,195.4 386.1,194.4 391.1,191.1 398.6,191.1 400,192.9 442.3,193.6 446,189.9 499.6,191.1 559.3,191.9 561.8,202.3 651.4,202.3 655.1,192.9 671.3,192.9 688.7,193.6 719.8,192.9 734.9,194.4 769.8,189.9 819.6,185.4 829.5,188.6 931.5,189.9 934,186.2 1018.7,187.9 1023.6,193.6 1026,193.6 1054.6,192.9 1100.7,192.9 1172.8,192.9 1175.3,195.4 1210.2,196.1 1212.7,201.1 1257.5,200.3 1266.2,198.6" fill="none" stroke="#ff0000" stroke-width="2.2" stroke-linejoin="round"/>
<polyline points="86.2,204.3 94.9,200.3 104.9,200.3 114.8,202.3 129.8,202.8 147.2,200.3 162.1,203.6 174.6,201.8 187,196.1 202,192.4 214.4,196.1 229.3,192.4 241.8,191.9 254.2,194.4 269.1,191.9 281.6,194.4 296.5,197.4 309,195.4 326.4,194.9 338.8,192.9 353.8,197.4 366.2,194.9 378.7,192.9 388.6,189.9 398.6,191.9 400,193.6 414.9,195.4 429.9,192.9 442.3,191.1 452.3,187.9 464.7,191.9 484.6,192.4 499.6,197.4 512,200.3 524.4,203.6 539.4,204.3 556.8,207.3 569.2,206.8 579.2,204.3 594.1,202.3 604.1,201.1 619,201.8 633.9,196.9 646.4,192.9 658.8,190.6 668.8,192.9 678.7,196.1 688.7,199.3 698.7,196.1 708.6,198.6 719.8,196.1 734.9,193.6 749.9,189.9 767.3,188.6 787.2,184.4 802.1,186.2 814.6,184.9 827,187.9 844.4,191.1 861.9,191.9 874.3,192.9 889.2,196.9 899.2,193.6 914.1,189.9 931.5,186.9 949,186.2 966.4,188.6 981.3,186.2 993.8,187.9 1006.2,192.4 1018.7,195.4 1026,195.4 1040.9,193.6 1058.4,188.6 1070.8,191.1 1083.2,189.9 1093.2,193.6 1105.6,194.4 1118.1,199.3 1133,201.8 1148,205.3 1162.9,207.8 1174.1,210.3 1185.3,206.1 1200.2,201.1 1212.7,199.8 1230.1,202.3 1242.5,197.4 1252.5,194.9 1259.9,197.4 1266.2,196.9" fill="none" stroke="#000000" stroke-width="2.4" stroke-linejoin="round"/>
<polyline points="86.2,177.4 96.2,174.5 104.9,178.7 114.8,180.4 127.3,183.7 137.2,179.9 146,177.4 154.7,181.9 160.9,186.9 169.6,186.2 179.6,179.9 189.5,175 197,172.5 206.9,176.2 215.6,181.2 224.4,176.2 231.8,174.5 239.3,178.7 251.7,187.4 264.2,179.9 274.1,183.7 284.1,187.4 296.5,189.9 306.5,183.7 316.4,188.6 328.9,186.2 336.3,182.4 343.8,186.2 353.8,189.9 361.2,187.4 368.7,189.9 378.7,182.4 388.6,181.2 398.6,186.2 400,187.9 410,189.9 419.9,192.4 429.9,186.2 439.8,184.4 449.8,181.9 462.2,186.2 474.7,189.9 484.6,188.6 494.6,194.9 504.5,196.9 519.5,198.6 534.4,197.4 549.3,196.1 561.8,192.4 574.2,187.4 589.1,184.9 604.1,181.2 614,184.9 624,182.4 636.4,176.2 646.4,172 658.8,172.5 668.8,178.7 678.7,184.9 688.7,191.1 701.1,184.4 708.6,189.9 718.6,183.7 720,181.9 732.4,179.4 747.4,175.5 757.3,178.7 767.3,176.2 777.2,175.5 787.2,173.7 797.2,181.2 804.6,178.7 812.1,183.7 819.6,182.4 827,187.4 839.5,189.9 854.4,191.1 869.3,188.6 879.3,194.9 888,197.9 899.2,189.9 911.6,183.7 921.6,180.4 934,181.2 949,181.9 961.4,183.7 973.9,189.9 986.3,182.4 996.3,188.6 1006.2,194.4 1016.2,196.9 1026.1,193.6 1036,188.6 1045.9,186.2 1058.4,181.9 1070.8,188.6 1083.2,186.9 1093.2,191.1 1100.7,188.6 1110.6,193.6 1120.6,196.9 1133,196.1 1145.5,198.6 1157.9,199.8 1172.8,196.9 1185.3,188.6 1197.7,181.9 1210.2,180.4 1220.1,177.4 1230.1,182.9 1240,177.9 1252.5,172 1259.9,179.9 1266.2,178.7" fill="none" stroke="#ffffff" stroke-width="2.2" stroke-linejoin="round"/>
<rect x="84.5" y="168" width="1.5" height="47" fill="#000000"/>
<rect x="86" y="168" width="1" height="47" fill="#009000"/>
<rect x="78" y="169" width="7" height="1" fill="#000000"/>
<rect x="1314" y="169" width="8" height="1" fill="#ffffff"/>
<rect x="81.5" y="177" width="3.5" height="1" fill="#000000"/>
<rect x="1314" y="177" width="4.5" height="1" fill="#ffffff"/>
<rect x="78" y="185" width="7" height="1" fill="#000000"/>
<rect x="1314" y="185" width="8" height="1" fill="#ffffff"/>
<rect x="81.5" y="193" width="3.5" height="1" fill="#000000"/>
<rect x="1314" y="193" width="4.5" height="1" fill="#ffffff"/>
<rect x="78" y="201" width="7" height="1" fill="#000000"/>
<rect x="1314" y="201" width="8" height="1" fill="#ffffff"/>
<rect x="81.5" y="209" width="3.5" height="1" fill="#000000"/>
<rect x="1314" y="209" width="4.5" height="1" fill="#ffffff"/>
<rect x="1313" y="168" width="1.3" height="47" fill="#ffffff"/>
<text x="74" y="190" fill="#000000" font-size="12" text-anchor="end">0</text>
<text x="1360" y="190" fill="#ffffff" font-size="12" text-anchor="end">0</text>
<rect x="114" y="242" width="1" height="35" fill="#ffff00"/>
<rect x="280" y="242" width="1" height="35" fill="#ffff00"/>
<rect x="297" y="242" width="1" height="35" fill="#ffff00"/>
<rect x="357" y="242" width="1" height="35" fill="#ffff00"/>
<rect x="406" y="242" width="1" height="35" fill="#ffff00"/>
<rect x="471" y="242" width="1" height="35" fill="#ffff00"/>
<rect x="487" y="242" width="1" height="35" fill="#ffff00"/>
<rect x="572" y="242" width="1" height="35" fill="#ffff00"/>
<rect x="621" y="242" width="1" height="35" fill="#ffff00"/>
<rect x="661" y="242" width="1" height="35" fill="#ffff00"/>
<rect x="722" y="242" width="1" height="35" fill="#ffff00"/>
<rect x="766" y="242" width="1" height="35" fill="#ffff00"/>
<rect x="827" y="242" width="1" height="35" fill="#ffff00"/>
<rect x="868" y="242" width="1" height="35" fill="#ffff00"/>
<rect x="912" y="242" width="1" height="35" fill="#ffff00"/>
<rect x="965" y="242" width="1" height="35" fill="#ffff00"/>
<rect x="981" y="242" width="1" height="35" fill="#ffff00"/>
<rect x="1046" y="242" width="1" height="35" fill="#ffff00"/>
<rect x="1066" y="242" width="1" height="35" fill="#ffff00"/>
<rect x="1082" y="242" width="1" height="35" fill="#ffff00"/>
<rect x="1098" y="242" width="1" height="35" fill="#ffff00"/>
<rect x="1212" y="242" width="1" height="35" fill="#ffff00"/>
<rect x="1236" y="242" width="1" height="35" fill="#ffff00"/>
<rect x="175" y="242" width="1" height="35" fill="#009000"/>
<rect x="305" y="242" width="1" height="35" fill="#009000"/>
<rect x="361" y="242" width="1" height="35" fill="#009000"/>
<rect x="430" y="242" width="1" height="35" fill="#009000"/>
<rect x="479" y="242" width="1" height="35" fill="#009000"/>
<rect x="657" y="242" width="1" height="35" fill="#009000"/>
<rect x="799" y="242" width="1" height="35" fill="#009000"/>
<rect x="961" y="242" width="1" height="35" fill="#009000"/>
<rect x="1042" y="242" width="1" height="35" fill="#009000"/>
<rect x="1050" y="242" width="1" height="35" fill="#009000"/>
<rect x="118" y="242" width="1" height="35" fill="#ff0000"/>
<rect x="293" y="242" width="1" height="35" fill="#ff0000"/>
<rect x="353" y="242" width="1" height="35" fill="#ff0000"/>
<rect x="491" y="242" width="1" height="35" fill="#ff0000"/>
<rect x="608" y="242" width="1" height="35" fill="#ff0000"/>
<rect x="665" y="242" width="1" height="35" fill="#ff0000"/>
<rect x="754" y="242" width="1" height="35" fill="#ff0000"/>
<rect x="839" y="242" width="1" height="35" fill="#ff0000"/>
<rect x="872" y="242" width="1" height="35" fill="#ff0000"/>
<rect x="969" y="242" width="1" height="35" fill="#ff0000"/>
<rect x="993" y="242" width="1" height="35" fill="#ff0000"/>
<rect x="1070" y="242" width="1" height="35" fill="#ff0000"/>
<rect x="1086" y="242" width="1" height="35" fill="#ff0000"/>
<rect x="1102" y="242" width="1" height="35" fill="#ff0000"/>
<rect x="1228" y="242" width="1" height="35" fill="#ff0000"/>
<path d="M86.7 259.5v-12.2h3v12.2zM90.7 259.5v-13.9h3v13.9zM94.8 259.5v-16.5h3v16.5zM98.8 259.5v-15.1h3v15.1zM102.9 259.5v-15.2h3v15.2zM106.9 259.5v-12.5h3v12.5zM110.9 259.5v-9.3h3v9.3zM175.6 259.5v-15.3h3v15.3zM179.6 259.5v-14.4h3v14.4zM183.7 259.5v-13.4h3v13.4zM187.7 259.5v-11.8h3v11.8zM191.7 259.5v-10.5h3v10.5zM195.8 259.5v-10.6h3v10.6zM199.8 259.5v-8.4h3v8.4zM203.9 259.5v-10.5h3v10.5zM207.9 259.5v-12.6h3v12.6zM211.9 259.5v-13.8h3v13.8zM216 259.5v-15.9h3v15.9zM220 259.5v-14.8h3v14.8zM224.1 259.5v-13.8h3v13.8zM228.1 259.5v-12.2h3v12.2zM232.1 259.5v-11.1h3v11.1zM236.2 259.5v-8.3h3v8.3zM240.2 259.5v-7h3v7zM244.3 259.5v-8.1h3v8.1zM248.3 259.5v-9.2h3v9.2zM252.3 259.5v-10.6h3v10.6zM256.4 259.5v-13.7h3v13.7zM260.4 259.5v-14.1h3v14.1zM264.5 259.5v-12.2h3v12.2zM268.5 259.5v-11.6h3v11.6zM272.5 259.5v-9.5h3v9.5zM276.6 259.5v-8.9h3v8.9zM280.6 259.5v-7.9h3v7.9zM284.7 259.5v-7.4h3v7.4zM288.7 259.5v-11.4h3v11.4zM296.8 259.5v-14.4h3v14.4zM300.8 259.5v-16.5h3v16.5zM304.9 259.5v-14.7h3v14.7zM308.9 259.5v-14.3h3v14.3zM312.9 259.5v-11h3v11zM317 259.5v-11h3v11zM321 259.5v-10.3h3v10.3zM325.1 259.5v-9.9h3v9.9zM329.1 259.5v-12.1h3v12.1zM333.1 259.5v-12.3h3v12.3zM337.2 259.5v-15.1h3v15.1zM341.2 259.5v-15.5h3v15.5zM345.3 259.5v-14.9h3v14.9zM349.3 259.5v-12.8h3v12.8zM353.3 259.5v-11.6h3v11.6zM357.4 259.5v-9.6h3v9.6zM361.4 259.5v-6.8h3v6.8zM365.5 259.5v-7.4h3v7.4zM369.5 259.5v-6.8h3v6.8zM373.5 259.5v-10.7h3v10.7zM377.6 259.5v-12.6h3v12.6zM381.6 259.5v-15h3v15zM385.7 259.5v-14.7h3v14.7zM389.7 259.5v-12.1h3v12.1zM393.7 259.5v-10.6h3v10.6zM397.8 259.5v-9.8h3v9.8zM401.8 259.5v-6.9h3v6.9zM405.9 259.5v-8.5h3v8.5zM409.9 259.5v-9.1h3v9.1zM413.9 259.5v-11.2h3v11.2zM418 259.5v-13.3h3v13.3zM422 259.5v-16.5h3v16.5zM426.1 259.5v-15.3h3v15.3zM430.1 259.5v-14.5h3v14.5zM434.1 259.5v-12.9h3v12.9zM438.2 259.5v-12.1h3v12.1zM442.2 259.5v-8.1h3v8.1zM446.3 259.5v-8.7h3v8.7zM450.3 259.5v-9.7h3v9.7zM454.3 259.5v-12.3h3v12.3zM458.4 259.5v-13.9h3v13.9zM462.4 259.5v-15.1h3v15.1zM466.5 259.5v-13.4h3v13.4zM470.5 259.5v-12.6h3v12.6zM474.5 259.5v-10.3h3v10.3zM478.6 259.5v-9.7h3v9.7zM482.6 259.5v-8.3h3v8.3zM486.7 259.5v-6h3v6zM490.7 259.5v-6.6h3v6.6zM660.4 259.5v-14h3v14zM797.7 259.5v-12.4h3v12.4zM801.8 259.5v-11.2h3v11.2zM805.8 259.5v-8.4h3v8.4zM809.9 259.5v-6h3v6zM813.9 259.5v-6h3v6zM817.9 259.5v-6.7h3v6.7zM822 259.5v-8.5h3v8.5zM826 259.5v-12.2h3v12.2zM830.1 259.5v-14.9h3v14.9zM834.1 259.5v-14.2h3v14.2zM838.1 259.5v-15.3h3v15.3zM935.1 259.5v-2.5h3v2.5zM939.1 259.5v-2.1h3v2.1zM963.4 259.5v-13.2h3v13.2zM983.6 259.5v-7.5h3v7.5zM987.6 259.5v-8.1h3v8.1zM1052.3 259.5v-9.2h3v9.2zM1056.3 259.5v-7.1h3v7.1zM1060.3 259.5v-7.6h3v7.6zM1064.4 259.5v-8.2h3v8.2zM1084.6 259.5v-9.9h3v9.9zM1100.7 259.5v-5.6h3v5.6z" fill="#ffffff"/>
<path d="M119 259.5v7.6h3v-7.6zM123.1 259.5v9.5h3v-9.5zM127.1 259.5v10h3v-10zM131.1 259.5v11.7h3v-11.7zM135.2 259.5v13.7h3v-13.7zM139.2 259.5v14.8h3v-14.8zM143.3 259.5v11.7h3v-11.7zM147.3 259.5v10h3v-10zM151.3 259.5v9.1h3v-9.1zM155.4 259.5v8.6h3v-8.6zM159.4 259.5v7.4h3v-7.4zM163.5 259.5v7.9h3v-7.9zM167.5 259.5v11.6h3v-11.6zM171.5 259.5v11.3h3v-11.3zM494.7 259.5v9.1h3v-9.1zM498.8 259.5v11.4h3v-11.4zM502.8 259.5v13.9h3v-13.9zM506.9 259.5v15h3v-15zM510.9 259.5v13.6h3v-13.6zM514.9 259.5v11.5h3v-11.5zM519 259.5v11h3v-11zM523 259.5v9.5h3v-9.5zM527.1 259.5v9.7h3v-9.7zM531.1 259.5v11.7h3v-11.7zM535.1 259.5v12.7h3v-12.7zM539.2 259.5v14.3h3v-14.3zM543.2 259.5v16.1h3v-16.1zM547.3 259.5v16.5h3v-16.5zM551.3 259.5v14.2h3v-14.2zM555.3 259.5v14.8h3v-14.8zM559.4 259.5v12.1h3v-12.1zM563.4 259.5v10.4h3v-10.4zM567.5 259.5v9.1h3v-9.1zM571.5 259.5v8.2h3v-8.2zM575.5 259.5v9.5h3v-9.5zM579.6 259.5v10.4h3v-10.4zM583.6 259.5v13.4h3v-13.4zM587.7 259.5v12.4h3v-12.4zM591.7 259.5v11.9h3v-11.9zM595.7 259.5v10.8h3v-10.8zM599.8 259.5v8.8h3v-8.8zM603.8 259.5v7.7h3v-7.7zM607.9 259.5v6.5h3v-6.5zM611.9 259.5v6.7h3v-6.7zM615.9 259.5v8.8h3v-8.8zM620 259.5v11h3v-11zM624 259.5v13.9h3v-13.9zM628.1 259.5v14.2h3v-14.2zM632.1 259.5v16.5h3v-16.5zM636.1 259.5v14.7h3v-14.7zM640.2 259.5v11.6h3v-11.6zM644.2 259.5v10.2h3v-10.2zM648.3 259.5v9.5h3v-9.5zM652.3 259.5v9.7h3v-9.7zM664.4 259.5v16.1h3v-16.1zM668.5 259.5v15.4h3v-15.4zM672.5 259.5v15.1h3v-15.1zM676.5 259.5v12.4h3v-12.4zM680.6 259.5v10.1h3v-10.1zM684.6 259.5v8.6h3v-8.6zM688.7 259.5v6.9h3v-6.9zM692.7 259.5v8.4h3v-8.4zM696.7 259.5v7.5h3v-7.5zM700.8 259.5v8.9h3v-8.9zM704.8 259.5v13.5h3v-13.5zM708.9 259.5v13.6h3v-13.6zM712.9 259.5v12.7h3v-12.7zM716.9 259.5v12.9h3v-12.9zM721 259.5v9.7h3v-9.7zM725 259.5v9.5h3v-9.5zM729.1 259.5v9.8h3v-9.8zM733.1 259.5v9.7h3v-9.7zM737.1 259.5v10.6h3v-10.6zM741.2 259.5v11.5h3v-11.5zM745.2 259.5v14h3v-14zM749.3 259.5v15h3v-15zM753.3 259.5v16.5h3v-16.5zM757.3 259.5v15.5h3v-15.5zM761.4 259.5v14.4h3v-14.4zM765.4 259.5v11h3v-11zM769.5 259.5v9.1h3v-9.1zM773.5 259.5v10.3h3v-10.3zM777.5 259.5v11.4h3v-11.4zM781.6 259.5v12.5h3v-12.5zM785.6 259.5v14.1h3v-14.1zM789.7 259.5v15.3h3v-15.3zM793.7 259.5v15.1h3v-15.1zM842.2 259.5v14.1h3v-14.1zM846.2 259.5v12.3h3v-12.3zM850.3 259.5v9.3h3v-9.3zM854.3 259.5v8.5h3v-8.5zM858.3 259.5v9.4h3v-9.4zM862.4 259.5v11.1h3v-11.1zM866.4 259.5v13.2h3v-13.2zM870.5 259.5v16.1h3v-16.1zM874.5 259.5v16.5h3v-16.5zM878.5 259.5v16.5h3v-16.5zM882.6 259.5v13.9h3v-13.9zM886.6 259.5v12.2h3v-12.2zM890.7 259.5v10.6h3v-10.6zM894.7 259.5v7.4h3v-7.4zM898.7 259.5v9.2h3v-9.2zM902.8 259.5v11.1h3v-11.1zM906.8 259.5v12.4h3v-12.4zM910.9 259.5v13.8h3v-13.8zM914.9 259.5v13.7h3v-13.7zM918.9 259.5v12.4h3v-12.4zM923 259.5v12.6h3v-12.6zM927 259.5v9.3h3v-9.3zM931.1 259.5v8.9h3v-8.9zM951.3 259.5v14.5h3v-14.5zM955.3 259.5v14.3h3v-14.3zM959.3 259.5v14.3h3v-14.3zM967.4 259.5v13.7h3v-13.7zM971.5 259.5v11.8h3v-11.8zM975.5 259.5v8.9h3v-8.9zM979.5 259.5v11h3v-11zM995.7 259.5v15.9h3v-15.9zM999.7 259.5v14.4h3v-14.4zM1003.8 259.5v12.6h3v-12.6zM1007.8 259.5v13.1h3v-13.1zM1011.9 259.5v9.9h3v-9.9zM1015.9 259.5v8h3v-8zM1019.9 259.5v8.8h3v-8.8zM1024 259.5v8.3h3v-8.3zM1028 259.5v11.3h3v-11.3zM1032.1 259.5v13h3v-13zM1036.1 259.5v12.6h3v-12.6zM1040.1 259.5v12.9h3v-12.9zM1072.5 259.5v13.6h3v-13.6zM1076.5 259.5v15.6h3v-15.6zM1080.5 259.5v16.5h3v-16.5zM1088.6 259.5v13.5h3v-13.5zM1092.7 259.5v12.9h3v-12.9zM1096.7 259.5v10.1h3v-10.1zM1104.8 259.5v10.3h3v-10.3zM1108.8 259.5v10.3h3v-10.3zM1112.9 259.5v13.2h3v-13.2zM1116.9 259.5v13.7h3v-13.7zM1120.9 259.5v13.4h3v-13.4zM1125 259.5v14.6h3v-14.6zM1129 259.5v10.8h3v-10.8zM1133.1 259.5v9.4h3v-9.4zM1137.1 259.5v8.3h3v-8.3zM1141.1 259.5v7.2h3v-7.2zM1145.2 259.5v7.2h3v-7.2zM1149.2 259.5v9.4h3v-9.4zM1153.3 259.5v11.6h3v-11.6zM1157.3 259.5v14.1h3v-14.1zM1161.3 259.5v13.1h3v-13.1zM1165.4 259.5v14h3v-14zM1169.4 259.5v11.9h3v-11.9zM1173.5 259.5v10.2h3v-10.2zM1177.5 259.5v10.3h3v-10.3zM1181.5 259.5v9.1h3v-9.1zM1185.6 259.5v10h3v-10zM1189.6 259.5v12.4h3v-12.4zM1193.7 259.5v15h3v-15zM1197.7 259.5v15.5h3v-15.5zM1201.7 259.5v16.5h3v-16.5zM1205.8 259.5v16h3v-16zM1209.8 259.5v14.4h3v-14.4zM1213.9 259.5v12.7h3v-12.7zM1217.9 259.5v9.9h3v-9.9zM1221.9 259.5v9h3v-9zM1226 259.5v8.9h3v-8.9zM1230 259.5v11.3h3v-11.3zM1234.1 259.5v12.3h3v-12.3zM1238.1 259.5v14.3h3v-14.3zM1242.1 259.5v15.2h3v-15.2zM1246.2 259.5v12.8h3v-12.8zM1250.2 259.5v12.2h3v-12.2zM1254.3 259.5v11.2h3v-11.2zM1258.3 259.5v9.1h3v-9.1zM1262.3 259.5v6.5h3v-6.5zM1266.4 259.5v6.5h3v-6.5z" fill="#000000"/>
<path d="M86.8 259.5l1.6 -1.6l1.6 1.6l-1.6 1.6zM90.8 259.5l1.6 -1.6l1.6 1.6l-1.6 1.6zM94.9 259.5l1.6 -1.6l1.6 1.6l-1.6 1.6zM98.9 259.5l1.6 -1.6l1.6 1.6l-1.6 1.6zM103 259.5l1.6 -1.6l1.6 1.6l-1.6 1.6zM107 259.5l1.6 -1.6l1.6 1.6l-1.6 1.6zM111 259.5l1.6 -1.6l1.6 1.6l-1.6 1.6zM115.1 259.5l1.6 -1.6l1.6 1.6l-1.6 1.6zM119.1 259.5l1.6 -1.6l1.6 1.6l-1.6 1.6zM123.2 259.5l1.6 -1.6l1.6 1.6l-1.6 1.6zM127.2 259.5l1.6 -1.6l1.6 1.6l-1.6 1.6zM131.2 259.5l1.6 -1.6l1.6 1.6l-1.6 1.6zM135.3 259.5l1.6 -1.6l1.6 1.6l-1.6 1.6zM139.3 259.5l1.6 -1.6l1.6 1.6l-1.6 1.6zM143.4 259.5l1.6 -1.6l1.6 1.6l-1.6 1.6zM147.4 259.5l1.6 -1.6l1.6 1.6l-1.6 1.6zM151.4 259.5l1.6 -1.6l1.6 1.6l-1.6 1.6zM155.5 259.5l1.6 -1.6l1.6 1.6l-1.6 1.6zM159.5 259.5l1.6 -1.6l1.6 1.6l-1.6 1.6zM163.6 259.5l1.6 -1.6l1.6 1.6l-1.6 1.6zM167.6 259.5l1.6 -1.6l1.6 1.6l-1.6 1.6zM171.6 259.5l1.6 -1.6l1.6 1.6l-1.6 1.6zM175.7 259.5l1.6 -1.6l1.6 1.6l-1.6 1.6zM179.7 259.5l1.6 -1.6l1.6 1.6l-1.6 1.6zM183.8 259.5l1.6 -1.6l1.6 1.6l-1.6 1.6zM187.8 259.5l1.6 -1.6l1.6 1.6l-1.6 1.6zM191.8 259.5l1.6 -1.6l1.6 1.6l-1.6 1.6zM195.9 259.5l1.6 -1.6l1.6 1.6l-1.6 1.6zM199.9 259.5l1.6 -1.6l1.6 1.6l-1.6 1.6zM204 259.5l1.6 -1.6l1.6 1.6l-1.6 1.6zM208 259.5l1.6 -1.6l1.6 1.6l-1.6 1.6zM212 259.5l1.6 -1.6l1.6 1.6l-1.6 1.6zM216.1 259.5l1.6 -1.6l1.6 1.6l-1.6 1.6zM220.1 259.5l1.6 -1.6l1.6 1.6l-1.6 1.6zM224.2 259.5l1.6 -1.6l1.6 1.6l-1.6 1.6zM228.2 259.5l1.6 -1.6l1.6 1.6l-1.6 1.6zM232.2 259.5l1.6 -1.6l1.6 1.6l-1.6 1.6zM236.3 259.5l1.6 -1.6l1.6 1.6l-1.6 1.6zM240.3 259.5l1.6 -1.6l1.6 1.6l-1.6 1.6zM244.4 259.5l1.6 -1.6l1.6 1.6l-1.6 1.6zM248.4 259.5l1.6 -1.6l1.6 1.6l-1.6 1.6zM252.4 259.5l1.6 -1.6l1.6 1.6l-1.6 1.6zM256.5 259.5l1.6 -1.6l1.6 1.6l-1.6 1.6zM260.5 259.5l1.6 -1.6l1.6 1.6l-1.6 1.6zM264.6 259.5l1.6 -1.6l1.6 1.6l-1.6 1.6zM268.6 259.5l1.6 -1.6l1.6 1.6l-1.6 1.6zM272.6 259.5l1.6 -1.6l1.6 1.6l-1.6 1.6zM276.7 259.5l1.6 -1.6l1.6 1.6l-1.6 1.6zM280.7 259.5l1.6 -1.6l1.6 1.6l-1.6 1.6zM284.8 259.5l1.6 -1.6l1.6 1.6l-1.6 1.6zM288.8 259.5l1.6 -1.6l1.6 1.6l-1.6 1.6zM292.8 259.5l1.6 -1.6l1.6 1.6l-1.6 1.6zM296.9 259.5l1.6 -1.6l1.6 1.6l-1.6 1.6zM300.9 259.5l1.6 -1.6l1.6 1.6l-1.6 1.6zM305 259.5l1.6 -1.6l1.6 1.6l-1.6 1.6zM309 259.5l1.6 -1.6l1.6 1.6l-1.6 1.6zM313 259.5l1.6 -1.6l1.6 1.6l-1.6 1.6zM317.1 259.5l1.6 -1.6l1.6 1.6l-1.6 1.6zM321.1 259.5l1.6 -1.6l1.6 1.6l-1.6 1.6zM325.2 259.5l1.6 -1.6l1.6 1.6l-1.6 1.6zM329.2 259.5l1.6 -1.6l1.6 1.6l-1.6 1.6zM333.2 259.5l1.6 -1.6l1.6 1.6l-1.6 1.6zM337.3 259.5l1.6 -1.6l1.6 1.6l-1.6 1.6zM341.3 259.5l1.6 -1.6l1.6 1.6l-1.6 1.6zM345.4 259.5l1.6 -1.6l1.6 1.6l-1.6 1.6zM349.4 259.5l1.6 -1.6l1.6 1.6l-1.6 1.6zM353.4 259.5l1.6 -1.6l1.6 1.6l-1.6 1.6zM357.5 259.5l1.6 -1.6l1.6 1.6l-1.6 1.6zM361.5 259.5l1.6 -1.6l1.6 1.6l-1.6 1.6zM365.6 259.5l1.6 -1.6l1.6 1.6l-1.6 1.6zM369.6 259.5l1.6 -1.6l1.6 1.6l-1.6 1.6zM373.6 259.5l1.6 -1.6l1.6 1.6l-1.6 1.6zM377.7 259.5l1.6 -1.6l1.6 1.6l-1.6 1.6zM381.7 259.5l1.6 -1.6l1.6 1.6l-1.6 1.6zM385.8 259.5l1.6 -1.6l1.6 1.6l-1.6 1.6zM389.8 259.5l1.6 -1.6l1.6 1.6l-1.6 1.6zM393.8 259.5l1.6 -1.6l1.6 1.6l-1.6 1.6zM397.9 259.5l1.6 -1.6l1.6 1.6l-1.6 1.6zM401.9 259.5l1.6 -1.6l1.6 1.6l-1.6 1.6zM406 259.5l1.6 -1.6l1.6 1.6l-1.6 1.6zM410 259.5l1.6 -1.6l1.6 1.6l-1.6 1.6zM414 259.5l1.6 -1.6l1.6 1.6l-1.6 1.6zM418.1 259.5l1.6 -1.6l1.6 1.6l-1.6 1.6zM422.1 259.5l1.6 -1.6l1.6 1.6l-1.6 1.6zM426.2 259.5l1.6 -1.6l1.6 1.6l-1.6 1.6zM430.2 259.5l1.6 -1.6l1.6 1.6l-1.6 1.6zM434.2 259.5l1.6 -1.6l1.6 1.6l-1.6 1.6zM438.3 259.5l1.6 -1.6l1.6 1.6l-1.6 1.6zM442.3 259.5l1.6 -1.6l1.6 1.6l-1.6 1.6zM446.4 259.5l1.6 -1.6l1.6 1.6l-1.6 1.6zM450.4 259.5l1.6 -1.6l1.6 1.6l-1.6 1.6zM454.4 259.5l1.6 -1.6l1.6 1.6l-1.6 1.6zM458.5 259.5l1.6 -1.6l1.6 1.6l-1.6 1.6zM462.5 259.5l1.6 -1.6l1.6 1.6l-1.6 1.6zM466.6 259.5l1.6 -1.6l1.6 1.6l-1.6 1.6zM470.6 259.5l1.6 -1.6l1.6 1.6l-1.6 1.6zM474.6 259.5l1.6 -1.6l1.6 1.6l-1.6 1.6zM478.7 259.5l1.6 -1.6l1.6 1.6l-1.6 1.6zM482.7 259.5l1.6 -1.6l1.6 1.6l-1.6 1.6zM486.8 259.5l1.6 -1.6l1.6 1.6l-1.6 1.6zM490.8 259.5l1.6 -1.6l1.6 1.6l-1.6 1.6zM494.8 259.5l1.6 -1.6l1.6 1.6l-1.6 1.6zM498.9 259.5l1.6 -1.6l1.6 1.6l-1.6 1.6zM502.9 259.5l1.6 -1.6l1.6 1.6l-1.6 1.6zM507 259.5l1.6 -1.6l1.6 1.6l-1.6 1.6zM511 259.5l1.6 -1.6l1.6 1.6l-1.6 1.6zM515 259.5l1.6 -1.6l1.6 1.6l-1.6 1.6zM519.1 259.5l1.6 -1.6l1.6 1.6l-1.6 1.6zM523.1 259.5l1.6 -1.6l1.6 1.6l-1.6 1.6zM527.2 259.5l1.6 -1.6l1.6 1.6l-1.6 1.6zM531.2 259.5l1.6 -1.6l1.6 1.6l-1.6 1.6zM535.2 259.5l1.6 -1.6l1.6 1.6l-1.6 1.6zM539.3 259.5l1.6 -1.6l1.6 1.6l-1.6 1.6zM543.3 259.5l1.6 -1.6l1.6 1.6l-1.6 1.6zM547.4 259.5l1.6 -1.6l1.6 1.6l-1.6 1.6zM551.4 259.5l1.6 -1.6l1.6 1.6l-1.6 1.6zM555.4 259.5l1.6 -1.6l1.6 1.6l-1.6 1.6zM559.5 259.5l1.6 -1.6l1.6 1.6l-1.6 1.6zM563.5 259.5l1.6 -1.6l1.6 1.6l-1.6 1.6zM567.6 259.5l1.6 -1.6l1.6 1.6l-1.6 1.6zM571.6 259.5l1.6 -1.6l1.6 1.6l-1.6 1.6zM575.6 259.5l1.6 -1.6l1.6 1.6l-1.6 1.6zM579.7 259.5l1.6 -1.6l1.6 1.6l-1.6 1.6zM583.7 259.5l1.6 -1.6l1.6 1.6l-1.6 1.6zM587.8 259.5l1.6 -1.6l1.6 1.6l-1.6 1.6zM591.8 259.5l1.6 -1.6l1.6 1.6l-1.6 1.6zM595.8 259.5l1.6 -1.6l1.6 1.6l-1.6 1.6zM599.9 259.5l1.6 -1.6l1.6 1.6l-1.6 1.6zM603.9 259.5l1.6 -1.6l1.6 1.6l-1.6 1.6zM608 259.5l1.6 -1.6l1.6 1.6l-1.6 1.6zM612 259.5l1.6 -1.6l1.6 1.6l-1.6 1.6zM616 259.5l1.6 -1.6l1.6 1.6l-1.6 1.6zM620.1 259.5l1.6 -1.6l1.6 1.6l-1.6 1.6zM624.1 259.5l1.6 -1.6l1.6 1.6l-1.6 1.6zM628.2 259.5l1.6 -1.6l1.6 1.6l-1.6 1.6zM632.2 259.5l1.6 -1.6l1.6 1.6l-1.6 1.6zM636.2 259.5l1.6 -1.6l1.6 1.6l-1.6 1.6zM640.3 259.5l1.6 -1.6l1.6 1.6l-1.6 1.6zM644.3 259.5l1.6 -1.6l1.6 1.6l-1.6 1.6zM648.4 259.5l1.6 -1.6l1.6 1.6l-1.6 1.6zM652.4 259.5l1.6 -1.6l1.6 1.6l-1.6 1.6zM656.4 259.5l1.6 -1.6l1.6 1.6l-1.6 1.6zM660.5 259.5l1.6 -1.6l1.6 1.6l-1.6 1.6zM664.5 259.5l1.6 -1.6l1.6 1.6l-1.6 1.6zM668.6 259.5l1.6 -1.6l1.6 1.6l-1.6 1.6zM672.6 259.5l1.6 -1.6l1.6 1.6l-1.6 1.6zM676.6 259.5l1.6 -1.6l1.6 1.6l-1.6 1.6zM680.7 259.5l1.6 -1.6l1.6 1.6l-1.6 1.6zM684.7 259.5l1.6 -1.6l1.6 1.6l-1.6 1.6zM688.8 259.5l1.6 -1.6l1.6 1.6l-1.6 1.6zM692.8 259.5l1.6 -1.6l1.6 1.6l-1.6 1.6zM696.8 259.5l1.6 -1.6l1.6 1.6l-1.6 1.6zM700.9 259.5l1.6 -1.6l1.6 1.6l-1.6 1.6zM704.9 259.5l1.6 -1.6l1.6 1.6l-1.6 1.6zM709 259.5l1.6 -1.6l1.6 1.6l-1.6 1.6zM713 259.5l1.6 -1.6l1.6 1.6l-1.6 1.6zM717 259.5l1.6 -1.6l1.6 1.6l-1.6 1.6zM721.1 259.5l1.6 -1.6l1.6 1.6l-1.6 1.6zM725.1 259.5l1.6 -1.6l1.6 1.6l-1.6 1.6zM729.2 259.5l1.6 -1.6l1.6 1.6l-1.6 1.6zM733.2 259.5l1.6 -1.6l1.6 1.6l-1.6 1.6zM737.2 259.5l1.6 -1.6l1.6 1.6l-1.6 1.6zM741.3 259.5l1.6 -1.6l1.6 1.6l-1.6 1.6zM745.3 259.5l1.6 -1.6l1.6 1.6l-1.6 1.6zM749.4 259.5l1.6 -1.6l1.6 1.6l-1.6 1.6zM753.4 259.5l1.6 -1.6l1.6 1.6l-1.6 1.6zM757.4 259.5l1.6 -1.6l1.6 1.6l-1.6 1.6zM761.5 259.5l1.6 -1.6l1.6 1.6l-1.6 1.6zM765.5 259.5l1.6 -1.6l1.6 1.6l-1.6 1.6zM769.6 259.5l1.6 -1.6l1.6 1.6l-1.6 1.6zM773.6 259.5l1.6 -1.6l1.6 1.6l-1.6 1.6zM777.6 259.5l1.6 -1.6l1.6 1.6l-1.6 1.6zM781.7 259.5l1.6 -1.6l1.6 1.6l-1.6 1.6zM785.7 259.5l1.6 -1.6l1.6 1.6l-1.6 1.6zM789.8 259.5l1.6 -1.6l1.6 1.6l-1.6 1.6zM793.8 259.5l1.6 -1.6l1.6 1.6l-1.6 1.6zM797.8 259.5l1.6 -1.6l1.6 1.6l-1.6 1.6zM801.9 259.5l1.6 -1.6l1.6 1.6l-1.6 1.6zM805.9 259.5l1.6 -1.6l1.6 1.6l-1.6 1.6zM810 259.5l1.6 -1.6l1.6 1.6l-1.6 1.6zM814 259.5l1.6 -1.6l1.6 1.6l-1.6 1.6zM818 259.5l1.6 -1.6l1.6 1.6l-1.6 1.6zM822.1 259.5l1.6 -1.6l1.6 1.6l-1.6 1.6zM826.1 259.5l1.6 -1.6l1.6 1.6l-1.6 1.6zM830.2 259.5l1.6 -1.6l1.6 1.6l-1.6 1.6zM834.2 259.5l1.6 -1.6l1.6 1.6l-1.6 1.6zM838.2 259.5l1.6 -1.6l1.6 1.6l-1.6 1.6zM842.3 259.5l1.6 -1.6l1.6 1.6l-1.6 1.6zM846.3 259.5l1.6 -1.6l1.6 1.6l-1.6 1.6zM850.4 259.5l1.6 -1.6l1.6 1.6l-1.6 1.6zM854.4 259.5l1.6 -1.6l1.6 1.6l-1.6 1.6zM858.4 259.5l1.6 -1.6l1.6 1.6l-1.6 1.6zM862.5 259.5l1.6 -1.6l1.6 1.6l-1.6 1.6zM866.5 259.5l1.6 -1.6l1.6 1.6l-1.6 1.6zM870.6 259.5l1.6 -1.6l1.6 1.6l-1.6 1.6zM874.6 259.5l1.6 -1.6l1.6 1.6l-1.6 1.6zM878.6 259.5l1.6 -1.6l1.6 1.6l-1.6 1.6zM882.7 259.5l1.6 -1.6l1.6 1.6l-1.6 1.6zM886.7 259.5l1.6 -1.6l1.6 1.6l-1.6 1.6zM890.8 259.5l1.6 -1.6l1.6 1.6l-1.6 1.6zM894.8 259.5l1.6 -1.6l1.6 1.6l-1.6 1.6zM898.8 259.5l1.6 -1.6l1.6 1.6l-1.6 1.6zM902.9 259.5l1.6 -1.6l1.6 1.6l-1.6 1.6zM906.9 259.5l1.6 -1.6l1.6 1.6l-1.6 1.6zM911 259.5l1.6 -1.6l1.6 1.6l-1.6 1.6zM915 259.5l1.6 -1.6l1.6 1.6l-1.6 1.6zM919 259.5l1.6 -1.6l1.6 1.6l-1.6 1.6zM923.1 259.5l1.6 -1.6l1.6 1.6l-1.6 1.6zM927.1 259.5l1.6 -1.6l1.6 1.6l-1.6 1.6zM931.2 259.5l1.6 -1.6l1.6 1.6l-1.6 1.6zM935.2 259.5l1.6 -1.6l1.6 1.6l-1.6 1.6zM939.2 259.5l1.6 -1.6l1.6 1.6l-1.6 1.6zM943.3 259.5l1.6 -1.6l1.6 1.6l-1.6 1.6zM947.3 259.5l1.6 -1.6l1.6 1.6l-1.6 1.6zM951.4 259.5l1.6 -1.6l1.6 1.6l-1.6 1.6zM955.4 259.5l1.6 -1.6l1.6 1.6l-1.6 1.6zM959.4 259.5l1.6 -1.6l1.6 1.6l-1.6 1.6zM963.5 259.5l1.6 -1.6l1.6 1.6l-1.6 1.6zM967.5 259.5l1.6 -1.6l1.6 1.6l-1.6 1.6zM971.6 259.5l1.6 -1.6l1.6 1.6l-1.6 1.6zM975.6 259.5l1.6 -1.6l1.6 1.6l-1.6 1.6zM979.6 259.5l1.6 -1.6l1.6 1.6l-1.6 1.6zM983.7 259.5l1.6 -1.6l1.6 1.6l-1.6 1.6zM987.7 259.5l1.6 -1.6l1.6 1.6l-1.6 1.6zM991.8 259.5l1.6 -1.6l1.6 1.6l-1.6 1.6zM995.8 259.5l1.6 -1.6l1.6 1.6l-1.6 1.6zM999.8 259.5l1.6 -1.6l1.6 1.6l-1.6 1.6zM1003.9 259.5l1.6 -1.6l1.6 1.6l-1.6 1.6zM1007.9 259.5l1.6 -1.6l1.6 1.6l-1.6 1.6zM1012 259.5l1.6 -1.6l1.6 1.6l-1.6 1.6zM1016 259.5l1.6 -1.6l1.6 1.6l-1.6 1.6zM1020 259.5l1.6 -1.6l1.6 1.6l-1.6 1.6zM1024.1 259.5l1.6 -1.6l1.6 1.6l-1.6 1.6zM1028.1 259.5l1.6 -1.6l1.6 1.6l-1.6 1.6zM1032.2 259.5l1.6 -1.6l1.6 1.6l-1.6 1.6zM1036.2 259.5l1.6 -1.6l1.6 1.6l-1.6 1.6zM1040.2 259.5l1.6 -1.6l1.6 1.6l-1.6 1.6zM1044.3 259.5l1.6 -1.6l1.6 1.6l-1.6 1.6zM1048.3 259.5l1.6 -1.6l1.6 1.6l-1.6 1.6zM1052.4 259.5l1.6 -1.6l1.6 1.6l-1.6 1.6zM1056.4 259.5l1.6 -1.6l1.6 1.6l-1.6 1.6zM1060.4 259.5l1.6 -1.6l1.6 1.6l-1.6 1.6zM1064.5 259.5l1.6 -1.6l1.6 1.6l-1.6 1.6zM1068.5 259.5l1.6 -1.6l1.6 1.6l-1.6 1.6zM1072.6 259.5l1.6 -1.6l1.6 1.6l-1.6 1.6zM1076.6 259.5l1.6 -1.6l1.6 1.6l-1.6 1.6zM1080.6 259.5l1.6 -1.6l1.6 1.6l-1.6 1.6zM1084.7 259.5l1.6 -1.6l1.6 1.6l-1.6 1.6zM1088.7 259.5l1.6 -1.6l1.6 1.6l-1.6 1.6zM1092.8 259.5l1.6 -1.6l1.6 1.6l-1.6 1.6zM1096.8 259.5l1.6 -1.6l1.6 1.6l-1.6 1.6zM1100.8 259.5l1.6 -1.6l1.6 1.6l-1.6 1.6zM1104.9 259.5l1.6 -1.6l1.6 1.6l-1.6 1.6zM1108.9 259.5l1.6 -1.6l1.6 1.6l-1.6 1.6zM1113 259.5l1.6 -1.6l1.6 1.6l-1.6 1.6zM1117 259.5l1.6 -1.6l1.6 1.6l-1.6 1.6zM1121 259.5l1.6 -1.6l1.6 1.6l-1.6 1.6zM1125.1 259.5l1.6 -1.6l1.6 1.6l-1.6 1.6zM1129.1 259.5l1.6 -1.6l1.6 1.6l-1.6 1.6zM1133.2 259.5l1.6 -1.6l1.6 1.6l-1.6 1.6zM1137.2 259.5l1.6 -1.6l1.6 1.6l-1.6 1.6zM1141.2 259.5l1.6 -1.6l1.6 1.6l-1.6 1.6zM1145.3 259.5l1.6 -1.6l1.6 1.6l-1.6 1.6zM1149.3 259.5l1.6 -1.6l1.6 1.6l-1.6 1.6zM1153.4 259.5l1.6 -1.6l1.6 1.6l-1.6 1.6zM1157.4 259.5l1.6 -1.6l1.6 1.6l-1.6 1.6zM1161.4 259.5l1.6 -1.6l1.6 1.6l-1.6 1.6zM1165.5 259.5l1.6 -1.6l1.6 1.6l-1.6 1.6zM1169.5 259.5l1.6 -1.6l1.6 1.6l-1.6 1.6zM1173.6 259.5l1.6 -1.6l1.6 1.6l-1.6 1.6zM1177.6 259.5l1.6 -1.6l1.6 1.6l-1.6 1.6zM1181.6 259.5l1.6 -1.6l1.6 1.6l-1.6 1.6zM1185.7 259.5l1.6 -1.6l1.6 1.6l-1.6 1.6zM1189.7 259.5l1.6 -1.6l1.6 1.6l-1.6 1.6zM1193.8 259.5l1.6 -1.6l1.6 1.6l-1.6 1.6zM1197.8 259.5l1.6 -1.6l1.6 1.6l-1.6 1.6zM1201.8 259.5l1.6 -1.6l1.6 1.6l-1.6 1.6zM1205.9 259.5l1.6 -1.6l1.6 1.6l-1.6 1.6zM1209.9 259.5l1.6 -1.6l1.6 1.6l-1.6 1.6zM1214 259.5l1.6 -1.6l1.6 1.6l-1.6 1.6zM1218 259.5l1.6 -1.6l1.6 1.6l-1.6 1.6zM1222 259.5l1.6 -1.6l1.6 1.6l-1.6 1.6zM1226.1 259.5l1.6 -1.6l1.6 1.6l-1.6 1.6zM1230.1 259.5l1.6 -1.6l1.6 1.6l-1.6 1.6zM1234.2 259.5l1.6 -1.6l1.6 1.6l-1.6 1.6zM1238.2 259.5l1.6 -1.6l1.6 1.6l-1.6 1.6zM1242.2 259.5l1.6 -1.6l1.6 1.6l-1.6 1.6zM1246.3 259.5l1.6 -1.6l1.6 1.6l-1.6 1.6zM1250.3 259.5l1.6 -1.6l1.6 1.6l-1.6 1.6zM1254.4 259.5l1.6 -1.6l1.6 1.6l-1.6 1.6zM1258.4 259.5l1.6 -1.6l1.6 1.6l-1.6 1.6zM1262.4 259.5l1.6 -1.6l1.6 1.6l-1.6 1.6zM1266.5 259.5l1.6 -1.6l1.6 1.6l-1.6 1.6z" fill="#000000"/>
<rect x="86" y="259.1" width="1183" height="0.8" fill="#000000"/>
<rect x="84.5" y="242" width="1.5" height="35" fill="#000000"/>
<rect x="86" y="242" width="1" height="35" fill="#009000"/>
<rect x="78" y="243" width="7" height="1" fill="#000000"/>
<rect x="1314" y="243" width="8" height="1" fill="#ffffff"/>
<rect x="81.5" y="251" width="3.5" height="1" fill="#000000"/>
<rect x="1314" y="251" width="4.5" height="1" fill="#ffffff"/>
<rect x="78" y="259" width="7" height="1" fill="#000000"/>
<rect x="1314" y="259" width="8" height="1" fill="#ffffff"/>
<rect x="81.5" y="267" width="3.5" height="1" fill="#000000"/>
<rect x="1314" y="267" width="4.5" height="1" fill="#ffffff"/>
<rect x="78" y="275" width="7" height="1" fill="#000000"/>
<rect x="1314" y="275" width="8" height="1" fill="#ffffff"/>
<rect x="1313" y="242" width="1.3" height="35" fill="#ffffff"/>
<text x="74" y="264" fill="#000000" font-size="12" text-anchor="end">0</text>
<text x="1360" y="264" fill="#ffffff" font-size="12" text-anchor="end">0</text>
<rect x="114" y="304" width="1" height="325" fill="#ffff00"/>
<rect x="280" y="304" width="1" height="325" fill="#ffff00"/>
<rect x="297" y="304" width="1" height="325" fill="#ffff00"/>
<rect x="357" y="304" width="1" height="325" fill="#ffff00"/>
<rect x="406" y="304" width="1" height="325" fill="#ffff00"/>
<rect x="471" y="304" width="1" height="325" fill="#ffff00"/>
<rect x="487" y="304" width="1" height="325" fill="#ffff00"/>
<rect x="572" y="304" width="1" height="325" fill="#ffff00"/>
<rect x="621" y="304" width="1" height="325" fill="#ffff00"/>
<rect x="661" y="304" width="1" height="325" fill="#ffff00"/>
<rect x="722" y="304" width="1" height="325" fill="#ffff00"/>
<rect x="766" y="304" width="1" height="325" fill="#ffff00"/>
<rect x="827" y="304" width="1" height="325" fill="#ffff00"/>
<rect x="868" y="304" width="1" height="325" fill="#ffff00"/>
<rect x="912" y="304" width="1" height="325" fill="#ffff00"/>
<rect x="965" y="304" width="1" height="325" fill="#ffff00"/>
<rect x="981" y="304" width="1" height="325" fill="#ffff00"/>
<rect x="1046" y="304" width="1" height="325" fill="#ffff00"/>
<rect x="1066" y="304" width="1" height="325" fill="#ffff00"/>
<rect x="1082" y="304" width="1" height="325" fill="#ffff00"/>
<rect x="1098" y="304" width="1" height="325" fill="#ffff00"/>
<rect x="1212" y="304" width="1" height="325" fill="#ffff00"/>
<rect x="1236" y="304" width="1" height="325" fill="#ffff00"/>
<rect x="175" y="304" width="1" height="325" fill="#009000"/>
<rect x="305" y="304" width="1" height="325" fill="#009000"/>
<rect x="361" y="304" width="1" height="325" fill="#009000"/>
<rect x="430" y="304" width="1" height="325" fill="#009000"/>
<rect x="479" y="304" width="1" height="325" fill="#009000"/>
<rect x="657" y="304" width="1" height="325" fill="#009000"/>
<rect x="799" y="304" width="1" height="325" fill="#009000"/>
<rect x="961" y="304" width="1" height="325" fill="#009000"/>
<rect x="1042" y="304" width="1" height="325" fill="#009000"/>
<rect x="1050" y="304" width="1" height="325" fill="#009000"/>
<rect x="118" y="304" width="1" height="325" fill="#ff0000"/>
<rect x="293" y="304" width="1" height="325" fill="#ff0000"/>
<rect x="353" y="304" width="1" height="325" fill="#ff0000"/>
<rect x="491" y="304" width="1" height="325" fill="#ff0000"/>
<rect x="608" y="304" width="1" height="325" fill="#ff0000"/>
<rect x="665" y="304" width="1" height="325" fill="#ff0000"/>
<rect x="754" y="304" width="1" height="325" fill="#ff0000"/>
<rect x="839" y="304" width="1" height="325" fill="#ff0000"/>
<rect x="872" y="304" width="1" height="325" fill="#ff0000"/>
<rect x="969" y="304" width="1" height="325" fill="#ff0000"/>
<rect x="993" y="304" width="1" height="325" fill="#ff0000"/>
<rect x="1070" y="304" width="1" height="325" fill="#ff0000"/>
<rect x="1086" y="304" width="1" height="325" fill="#ff0000"/>
<rect x="1102" y="304" width="1" height="325" fill="#ff0000"/>
<rect x="1228" y="304" width="1" height="325" fill="#ff0000"/>
<rect x="84.5" y="304" width="1.5" height="325" fill="#ffffff"/>
<rect x="86" y="304" width="1" height="325" fill="#009000"/>
<rect x="1313" y="304" width="1.5" height="325" fill="#ffffff"/>
<rect x="78" y="319.5" width="7" height="1" fill="#ffffff"/>
<rect x="1314" y="319.5" width="8" height="1" fill="#ffffff"/>
<text x="73.5" y="324.3" fill="#ffffff" font-size="12" text-anchor="end">0.30</text>
<text x="1360" y="324.3" fill="#ffffff" font-size="12" text-anchor="end">0.30</text>
<rect x="81.5" y="312.5" width="3.5" height="1" fill="#ffffff"/>
<rect x="1314" y="312.5" width="4" height="1" fill="#ffffff"/>
<rect x="78" y="332.5" width="7" height="1" fill="#ffffff"/>
<rect x="1314" y="332.5" width="8" height="1" fill="#ffffff"/>
<text x="73.5" y="337.5" fill="#ffffff" font-size="12" text-anchor="end">0.29</text>
<text x="1360" y="337.5" fill="#ffffff" font-size="12" text-anchor="end">0.29</text>
<rect x="81.5" y="325.5" width="3.5" height="1" fill="#ffffff"/>
<rect x="1314" y="325.5" width="4" height="1" fill="#ffffff"/>
<rect x="78" y="345.5" width="7" height="1" fill="#ffffff"/>
<rect x="1314" y="345.5" width="8" height="1" fill="#ffffff"/>
<text x="73.5" y="350.6" fill="#ffffff" font-size="12" text-anchor="end">0.28</text>
<text x="1360" y="350.6" fill="#ffffff" font-size="12" text-anchor="end">0.28</text>
<rect x="81.5" y="339.5" width="3.5" height="1" fill="#ffffff"/>
<rect x="1314" y="339.5" width="4" height="1" fill="#ffffff"/>
<rect x="78" y="358.5" width="7" height="1" fill="#ffffff"/>
<rect x="1314" y="358.5" width="8" height="1" fill="#ffffff"/>
<text x="73.5" y="363.8" fill="#ffffff" font-size="12" text-anchor="end">0.27</text>
<text x="1360" y="363.8" fill="#ffffff" font-size="12" text-anchor="end">0.27</text>
<rect x="81.5" y="352.5" width="3.5" height="1" fill="#ffffff"/>
<rect x="1314" y="352.5" width="4" height="1" fill="#ffffff"/>
<rect x="78" y="371.5" width="7" height="1" fill="#ffffff"/>
<rect x="1314" y="371.5" width="8" height="1" fill="#ffffff"/>
<text x="73.5" y="377" fill="#ffffff" font-size="12" text-anchor="end">0.26</text>
<text x="1360" y="377" fill="#ffffff" font-size="12" text-anchor="end">0.26</text>
<rect x="81.5" y="365.5" width="3.5" height="1" fill="#ffffff"/>
<rect x="1314" y="365.5" width="4" height="1" fill="#ffffff"/>
<rect x="78" y="385.5" width="7" height="1" fill="#ffffff"/>
<rect x="1314" y="385.5" width="8" height="1" fill="#ffffff"/>
<text x="73.5" y="390.1" fill="#ffffff" font-size="12" text-anchor="end">0.25</text>
<text x="1360" y="390.1" fill="#ffffff" font-size="12" text-anchor="end">0.25</text>
<rect x="81.5" y="378.5" width="3.5" height="1" fill="#ffffff"/>
<rect x="1314" y="378.5" width="4" height="1" fill="#ffffff"/>
<rect x="78" y="398.5" width="7" height="1" fill="#ffffff"/>
<rect x="1314" y="398.5" width="8" height="1" fill="#ffffff"/>
<text x="73.5" y="403.3" fill="#ffffff" font-size="12" text-anchor="end">0.24</text>
<text x="1360" y="403.3" fill="#ffffff" font-size="12" text-anchor="end">0.24</text>
<rect x="81.5" y="391.5" width="3.5" height="1" fill="#ffffff"/>
<rect x="1314" y="391.5" width="4" height="1" fill="#ffffff"/>
<rect x="78" y="411.5" width="7" height="1" fill="#ffffff"/>
<rect x="1314" y="411.5" width="8" height="1" fill="#ffffff"/>
<text x="73.5" y="416.5" fill="#ffffff" font-size="12" text-anchor="end">0.23</text>
<text x="1360" y="416.5" fill="#ffffff" font-size="12" text-anchor="end">0.23</text>
<rect x="81.5" y="404.5" width="3.5" height="1" fill="#ffffff"/>
<rect x="1314" y="404.5" width="4" height="1" fill="#ffffff"/>
<rect x="78" y="424.5" width="7" height="1" fill="#ffffff"/>
<rect x="1314" y="424.5" width="8" height="1" fill="#ffffff"/>
<text x="73.5" y="429.7" fill="#ffffff" font-size="12" text-anchor="end">0.22</text>
<text x="1360" y="429.7" fill="#ffffff" font-size="12" text-anchor="end">0.22</text>
<rect x="81.5" y="418.5" width="3.5" height="1" fill="#ffffff"/>
<rect x="1314" y="418.5" width="4" height="1" fill="#ffffff"/>
<rect x="78" y="437.5" width="7" height="1" fill="#ffffff"/>
<rect x="1314" y="437.5" width="8" height="1" fill="#ffffff"/>
<text x="73.5" y="442.8" fill="#ffffff" font-size="12" text-anchor="end">0.21</text>
<text x="1360" y="442.8" fill="#ffffff" font-size="12" text-anchor="end">0.21</text>
<rect x="81.5" y="431.5" width="3.5" height="1" fill="#ffffff"/>
<rect x="1314" y="431.5" width="4" height="1" fill="#ffffff"/>
<rect x="78" y="451.5" width="7" height="1" fill="#ffffff"/>
<rect x="1314" y="451.5" width="8" height="1" fill="#ffffff"/>
<text x="73.5" y="456" fill="#ffffff" font-size="12" text-anchor="end">0.20</text>
<text x="1360" y="456" fill="#ffffff" font-size="12" text-anchor="end">0.20</text>
<rect x="81.5" y="444.5" width="3.5" height="1" fill="#ffffff"/>
<rect x="1314" y="444.5" width="4" height="1" fill="#ffffff"/>
<rect x="78" y="464.5" width="7" height="1" fill="#ffffff"/>
<rect x="1314" y="464.5" width="8" height="1" fill="#ffffff"/>
<text x="73.5" y="469.2" fill="#ffffff" font-size="12" text-anchor="end">0.19</text>
<text x="1360" y="469.2" fill="#ffffff" font-size="12" text-anchor="end">0.19</text>
<rect x="81.5" y="457.5" width="3.5" height="1" fill="#ffffff"/>
<rect x="1314" y="457.5" width="4" height="1" fill="#ffffff"/>
<rect x="78" y="477.5" width="7" height="1" fill="#ffffff"/>
<rect x="1314" y="477.5" width="8" height="1" fill="#ffffff"/>
<text x="73.5" y="482.3" fill="#ffffff" font-size="12" text-anchor="end">0.18</text>
<text x="1360" y="482.3" fill="#ffffff" font-size="12" text-anchor="end">0.18</text>
<rect x="81.5" y="470.5" width="3.5" height="1" fill="#ffffff"/>
<rect x="1314" y="470.5" width="4" height="1" fill="#ffffff"/>
<rect x="78" y="490.5" width="7" height="1" fill="#ffffff"/>
<rect x="1314" y="490.5" width="8" height="1" fill="#ffffff"/>
<text x="73.5" y="495.5" fill="#ffffff" font-size="12" text-anchor="end">0.17</text>
<text x="1360" y="495.5" fill="#ffffff" font-size="12" text-anchor="end">0.17</text>
<rect x="81.5" y="483.5" width="3.5" height="1" fill="#ffffff"/>
<rect x="1314" y="483.5" width="4" height="1" fill="#ffffff"/>
<rect x="78" y="503.5" width="7" height="1" fill="#ffffff"/>
<rect x="1314" y="503.5" width="8" height="1" fill="#ffffff"/>
<text x="73.5" y="508.7" fill="#ffffff" font-size="12" text-anchor="end">0.16</text>
<text x="1360" y="508.7" fill="#ffffff" font-size="12" text-anchor="end">0.16</text>
<rect x="81.5" y="497.5" width="3.5" height="1" fill="#ffffff"/>
<rect x="1314" y="497.5" width="4" height="1" fill="#ffffff"/>
<rect x="78" y="516.5" width="7" height="1" fill="#ffffff"/>
<rect x="1314" y="516.5" width="8" height="1" fill="#ffffff"/>
<text x="73.5" y="521.9" fill="#ffffff" font-size="12" text-anchor="end">0.15</text>
<text x="1360" y="521.9" fill="#ffffff" font-size="12" text-anchor="end">0.15</text>
<rect x="81.5" y="510.5" width="3.5" height="1" fill="#ffffff"/>
<rect x="1314" y="510.5" width="4" height="1" fill="#ffffff"/>
<rect x="78" y="530.5" width="7" height="1" fill="#ffffff"/>
<rect x="1314" y="530.5" width="8" height="1" fill="#ffffff"/>
<text x="73.5" y="535" fill="#ffffff" font-size="12" text-anchor="end">0.14</text>
<text x="1360" y="535" fill="#ffffff" font-size="12" text-anchor="end">0.14</text>
<rect x="81.5" y="523.5" width="3.5" height="1" fill="#ffffff"/>
<rect x="1314" y="523.5" width="4" height="1" fill="#ffffff"/>
<rect x="78" y="543.5" width="7" height="1" fill="#ffffff"/>
<rect x="1314" y="543.5" width="8" height="1" fill="#ffffff"/>
<text x="73.5" y="548.2" fill="#ffffff" font-size="12" text-anchor="end">0.13</text>
<text x="1360" y="548.2" fill="#ffffff" font-size="12" text-anchor="end">0.13</text>
<rect x="81.5" y="536.5" width="3.5" height="1" fill="#ffffff"/>
<rect x="1314" y="536.5" width="4" height="1" fill="#ffffff"/>
<rect x="78" y="556.5" width="7" height="1" fill="#ffffff"/>
<rect x="1314" y="556.5" width="8" height="1" fill="#ffffff"/>
<text x="73.5" y="561.4" fill="#ffffff" font-size="12" text-anchor="end">0.12</text>
<text x="1360" y="561.4" fill="#ffffff" font-size="12" text-anchor="end">0.12</text>
<rect x="81.5" y="549.5" width="3.5" height="1" fill="#ffffff"/>
<rect x="1314" y="549.5" width="4" height="1" fill="#ffffff"/>
<rect x="78" y="569.5" width="7" height="1" fill="#ffffff"/>
<rect x="1314" y="569.5" width="8" height="1" fill="#ffffff"/>
<text x="73.5" y="574.5" fill="#ffffff" font-size="12" text-anchor="end">0.11</text>
<text x="1360" y="574.5" fill="#ffffff" font-size="12" text-anchor="end">0.11</text>
<rect x="81.5" y="562.5" width="3.5" height="1" fill="#ffffff"/>
<rect x="1314" y="562.5" width="4" height="1" fill="#ffffff"/>
<rect x="78" y="582.5" width="7" height="1" fill="#ffffff"/>
<rect x="1314" y="582.5" width="8" height="1" fill="#ffffff"/>
<text x="73.5" y="587.7" fill="#ffffff" font-size="12" text-anchor="end">0.10</text>
<text x="1360" y="587.7" fill="#ffffff" font-size="12" text-anchor="end">0.10</text>
<rect x="81.5" y="576.5" width="3.5" height="1" fill="#ffffff"/>
<rect x="1314" y="576.5" width="4" height="1" fill="#ffffff"/>
<rect x="78" y="595.5" width="7" height="1" fill="#ffffff"/>
<rect x="1314" y="595.5" width="8" height="1" fill="#ffffff"/>
<text x="73.5" y="600.9" fill="#ffffff" font-size="12" text-anchor="end">0.09</text>
<text x="1360" y="600.9" fill="#ffffff" font-size="12" text-anchor="end">0.09</text>
<rect x="81.5" y="589.5" width="3.5" height="1" fill="#ffffff"/>
<rect x="1314" y="589.5" width="4" height="1" fill="#ffffff"/>
<rect x="78" y="609.5" width="7" height="1" fill="#ffffff"/>
<rect x="1314" y="609.5" width="8" height="1" fill="#ffffff"/>
<text x="73.5" y="614" fill="#ffffff" font-size="12" text-anchor="end">0.08</text>
<text x="1360" y="614" fill="#ffffff" font-size="12" text-anchor="end">0.08</text>
<rect x="81.5" y="602.5" width="3.5" height="1" fill="#ffffff"/>
<rect x="1314" y="602.5" width="4" height="1" fill="#ffffff"/>
<rect x="78" y="622.5" width="7" height="1" fill="#ffffff"/>
<rect x="1314" y="622.5" width="8" height="1" fill="#ffffff"/>
<text x="73.5" y="627.2" fill="#ffffff" font-size="12" text-anchor="end">0.07</text>
<text x="1360" y="627.2" fill="#ffffff" font-size="12" text-anchor="end">0.07</text>
<rect x="81.5" y="615.5" width="3.5" height="1" fill="#ffffff"/>
<rect x="1314" y="615.5" width="4" height="1" fill="#ffffff"/>
<path d="M105.5 391V395M117.5 393.6V404.6M121.5 402.5V416.5M130.5 411.1V422.1M138.5 409.8V415M150.5 408.8V411.9M154.5 410.9V417M162.5 416V429M170.5 418.9V426.9M178.5 405.8V410.9M198.5 395.7V401.9M206.5 395.7V400.8M211.5 398.8V404.7M215.5 403.7V407.9M235.5 381.9V389M239.5 383V387.9M243.5 384.9V391.9M247.5 386.9V392M251.5 389V393.9M263.5 384V390M275.5 373.9V384.7M279.5 383.7V391M287.5 391V404M296.5 379.8V391.8M304.5 377.9V381.9M312.5 377.8V383.8M316.5 381.8V388.9M324.5 378.9V386M328.5 384V388M340.5 374.9V378.9M344.5 375.9V380.1M348.5 377.1V383.9M352.5 382.9V386M356.5 385.9V394.9M364.5 373.9V380.9M368.5 379.9V386.8M385.5 364.8V372.8M393.5 368.8V381.8M397.5 375.8V386M409.5 363.9V371.9M413.5 367.9V373.8M417.5 369.8V373.9M441.5 349.9V356M454.5 331.9V339M458.5 336V345M462.5 344V349M470.5 339.9V342.9M486.5 326.6V335M490.5 330V347.8M494.5 343.8V349.9M498.5 349.9V357.4M506.5 346.9V362.4M514.5 355.9V379.9M522.5 375.9V399.9M526.5 397.9V403.9M530.5 400.9V406.9M534.5 400.9V417.7M539.5 413.7V428.9M547.5 418.9V429.9M555.5 421V435.4M559.5 434.4V453.6M567.5 440.8V453.8M571.5 448.8V456M579.5 436V443M583.5 442V448M595.5 437.9V450.9M603.5 436.4V441.1M607.5 450.9V461.9M620.5 452.1V463.9M624.5 459.9V465.9M628.5 460.9V463.9M648.5 439V450.9M660.5 426V430.9M664.5 435V450M676.5 437V449M680.5 458.9V467.9M688.5 472.9V484.9M705.5 458.9V467.9M709.5 465.9V477.9M717.5 456.9V463.9M721.5 461.9V463.9M725.5 461.8V465M729.5 464V469M741.5 452.9V462.9M753.5 449.9V453.8M757.5 451.8V462.9M765.5 444V454.8M777.5 444.9V448M782.5 447V449.9M790.5 447.9V449.9M794.5 445.9V451.9M798.5 448.9V450.9M810.5 433V443M822.5 428V434.9M826.5 432.9V434.9M830.5 430.9V436.9M834.5 434.9V438.9M842.5 435V448M850.5 442V450M854.5 444V449.9M863.5 447.9V451.9M867.5 449.9V453.8M875.5 440.2V451.2M879.5 448.9V461.9M883.5 459.9V463.8M887.5 463.8V470.9M899.5 455.9V457.9M903.5 455.9V461.9M907.5 458.9V464.9M911.5 461.9V464.8M923.5 443V449M927.5 444V450.8M939.5 440.9V447.9M943.5 442.9V448.9M948.5 444.9V449.9M952.5 448.9V453.8M960.5 446.9V451.9M968.5 437V448M972.5 446V453.8M988.5 441.9V447M992.5 447V453.8M1000.5 445.8V452.4M1004.5 451.4V456.6M1008.5 454.6V459.8M1012.5 458.8V470.9M1024.5 461.9V467M1029.5 464V469M1033.5 469.9V479.9M1049.5 456.8V462.9M1053.5 462.9V466.9M1065.5 450.8V458.8M1069.5 455.8V461.9M1073.5 459V472M1081.5 459.9V468M1089.5 455.8V468M1097.5 458.9V463.8M1110.5 457.5V461.1M1114.5 466.2V478.2M1118.5 473.2V483M1126.5 473V482M1130.5 488.5V502.5M1142.5 493V498.9M1146.5 503V513M1150.5 513V525M1154.5 547.9V557.9M1162.5 535.9V542M1166.5 558V568M1174.5 565.8V575.8M1182.5 571V578.6M1186.5 575.6V585.9M1195.5 575V584.8M1207.5 565.9V570.9M1211.5 566.9V573.2M1219.5 568.3V572.9M1223.5 572.9V580.2M1227.5 585.9V595.9M1231.5 593.9V599.9M1243.5 583.8V585.8M1255.5 576.9V587.9M1259.5 584.9V593.8M1267.5 582.8V588" stroke="#88a8d4" stroke-width="1" fill="none"/>
<path d="M103.5 392h4v1h-4zM115.5 394.6h4v9h-4zM119.5 405.5h4v9h-4zM128.5 411.1h4v9h-4zM136.5 412.8h4v2.2h-4zM148.5 408.8h4v2h-4zM152.5 410.9h4v4.1h-4zM160.5 417h4v9h-4zM168.5 421.9h4v3.1h-4zM176.5 408.8h4v2h-4zM196.5 397.7h4v1.2h-4zM204.5 396.7h4v4.1h-4zM209.5 400.8h4v4h-4zM213.5 404.7h4v1.2h-4zM233.5 382.9h4v3.1h-4zM237.5 386h4v1.9h-4zM241.5 387.9h4v1h-4zM245.5 388.9h4v2h-4zM249.5 391h4v1.9h-4zM261.5 386h4v1h-4zM273.5 375.9h4v8.8h-4zM277.5 384.7h4v5.3h-4zM285.5 393h4v9h-4zM294.5 381.8h4v9h-4zM302.5 380.9h4v1h-4zM310.5 378.8h4v5h-4zM314.5 383.8h4v5.1h-4zM322.5 381.9h4v4.1h-4zM326.5 386h4v1h-4zM338.5 375.9h4v1h-4zM342.5 376.9h4v3.1h-4zM346.5 380.1h4v2.9h-4zM350.5 382.9h4v2h-4zM354.5 385.9h4v9h-4zM362.5 376.9h4v4h-4zM366.5 380.9h4v2.9h-4zM383.5 366.8h4v6h-4zM391.5 369.8h4v9h-4zM395.5 378.8h4v7.2h-4zM407.5 364.9h4v5h-4zM411.5 369.9h4v2.9h-4zM415.5 372.8h4v1h-4zM439.5 350.9h4v3.1h-4zM452.5 334.9h4v2h-4zM456.5 337h4v7h-4zM460.5 344h4v4h-4zM468.5 341.9h4v1h-4zM484.5 329.6h4v3.4h-4zM488.5 333h4v12.7h-4zM492.5 345.8h4v4.2h-4zM496.5 349.9h4v5.5h-4zM504.5 346.9h4v13.6h-4zM512.5 358.9h4v21.1h-4zM520.5 377.9h4v22h-4zM524.5 399.9h4v3.1h-4zM528.5 402.9h4v1h-4zM532.5 402.9h4v13.8h-4zM537.5 416.7h4v12.2h-4zM545.5 418.9h4v8.1h-4zM553.5 424h4v11.4h-4zM557.5 435.4h4v17.2h-4zM565.5 442.8h4v9h-4zM569.5 451.8h4v3.2h-4zM577.5 436h4v6h-4zM581.5 442h4v5h-4zM593.5 440.9h4v9h-4zM601.5 437.4h4v1.7h-4zM605.5 450.9h4v9h-4zM618.5 455.1h4v5.8h-4zM622.5 460.9h4v2h-4zM626.5 462.9h4v1h-4zM646.5 442h4v5.9h-4zM658.5 429h4v1.9h-4zM662.5 438h4v9h-4zM674.5 437h4v9h-4zM678.5 458.9h4v9h-4zM686.5 474.9h4v9h-4zM703.5 459.9h4v8.1h-4zM707.5 467.9h4v7h-4zM715.5 459.9h4v3.1h-4zM719.5 462.9h4v1h-4zM723.5 463.8h4v1.2h-4zM727.5 465h4v1h-4zM739.5 455.9h4v7h-4zM751.5 449.9h4v2.9h-4zM755.5 452.8h4v8.1h-4zM763.5 446h4v6.9h-4zM775.5 444.9h4v2h-4zM780.5 447h4v1.9h-4zM788.5 447.9h4v1h-4zM792.5 448.9h4v1h-4zM796.5 448.9h4v1h-4zM808.5 436h4v5h-4zM820.5 428h4v5h-4zM824.5 432.9h4v1h-4zM828.5 432.9h4v2h-4zM832.5 434.9h4v4.1h-4zM840.5 438h4v9h-4zM848.5 442h4v5h-4zM852.5 447h4v2.9h-4zM861.5 447.9h4v2h-4zM865.5 449.9h4v1.9h-4zM873.5 440.2h4v9h-4zM877.5 450.9h4v9h-4zM881.5 459.9h4v4h-4zM885.5 463.8h4v4.1h-4zM897.5 456.9h4v1h-4zM901.5 456.9h4v4h-4zM905.5 460.9h4v1h-4zM909.5 461.9h4v1.9h-4zM921.5 446h4v1h-4zM925.5 447h4v3.8h-4zM937.5 443.9h4v1h-4zM941.5 443.9h4v4h-4zM946.5 447.9h4v1h-4zM950.5 448.9h4v2.9h-4zM958.5 448.9h4v1h-4zM966.5 438h4v9h-4zM970.5 447h4v4.8h-4zM986.5 444.9h4v2h-4zM990.5 447h4v3.8h-4zM998.5 447.8h4v3.6h-4zM1002.5 451.4h4v4.2h-4zM1006.5 455.6h4v4.2h-4zM1010.5 459.8h4v8.1h-4zM1022.5 463.9h4v2.1h-4zM1027.5 466h4v1h-4zM1031.5 469.9h4v9h-4zM1047.5 458.8h4v4.1h-4zM1051.5 462.9h4v1h-4zM1063.5 451.8h4v7h-4zM1067.5 458.8h4v1h-4zM1071.5 461h4v9h-4zM1079.5 461.9h4v3.1h-4zM1087.5 458.8h4v6.1h-4zM1095.5 461.9h4v1.9h-4zM1108.5 457.5h4v3.6h-4zM1112.5 467.2h4v8h-4zM1116.5 475.2h4v6.7h-4zM1124.5 474h4v8h-4zM1128.5 491.5h4v8h-4zM1140.5 496h4v2.9h-4zM1144.5 504h4v8h-4zM1148.5 516h4v8h-4zM1152.5 548.9h4v8h-4zM1160.5 538.9h4v1h-4zM1164.5 559h4v8h-4zM1172.5 567.8h4v8h-4zM1180.5 574h4v2.6h-4zM1184.5 576.6h4v6.3h-4zM1193.5 578h4v5.9h-4zM1205.5 568.9h4v1h-4zM1209.5 569.9h4v3.2h-4zM1217.5 570.3h4v2.6h-4zM1221.5 572.9h4v7.3h-4zM1225.5 585.9h4v8h-4zM1229.5 593.9h4v6h-4zM1241.5 583.8h4v1h-4zM1253.5 578.9h4v8h-4zM1257.5 586.9h4v4h-4zM1265.5 583.8h4v2.2h-4z" fill="#88a8d4"/>
<path d="M89.5 405V408M89.5 410V411M93.5 406.1V407.1M93.5 408.1V409.1M97.5 395V396M97.5 405V407M101.5 392V392M101.5 396V396M109.5 386.8V389.8M109.5 392.9V392.9M113.5 381.6V384.6M113.5 389.8V390.8M125.5 408.6V409.6M125.5 414.5V415.5M134.5 410.8V412.8M134.5 420.1V422.1M142.5 410.8V412.8M142.5 415V417M146.5 406.8V408.8M146.5 412.8V414.8M158.5 413.6V413.6M158.5 415V415M166.5 418.9V421.9M166.5 426V426M174.5 406.8V408.8M174.5 417.8V417.8M182.5 410.6V410.6M182.5 411.6V413.6M186.5 404.9V406.9M186.5 410.6V410.6M190.5 403.7V404.7M190.5 406.9V406.9M194.5 397.7V397.7M194.5 404.7V405.7M202.5 395.7V396.7M202.5 398.9V398.9M219.5 401.8V402.8M219.5 405.9V406.9M223.5 396.7V397.7M223.5 402.8V403.8M227.5 384V384M227.5 393V394M231.5 382.9V382.9M231.5 384V384M255.5 384.9V387.9M255.5 392.9V393.9M259.5 385V386M259.5 387.9V387.9M267.5 379V379M267.5 386V386M271.5 373.9V375.9M271.5 379V381M283.5 381.9V384.9M283.5 390V390M292.5 377.9V379.9M292.5 388.9V388.9M300.5 379.9V380.9M300.5 389.9V389.9M308.5 376.8V378.8M308.5 381.9V383.9M320.5 378.9V381.9M320.5 388.9V390.9M332.5 379.9V380.9M332.5 386V388M336.5 372.9V375.9M336.5 380.9V381.9M360.5 374.9V376.9M360.5 385.9V385.9M373.5 380.9V380.9M373.5 383.8V384.8M377.5 372.8V372.8M377.5 380.9V382.9M381.5 366.8V366.8M381.5 372.8V374.8M389.5 365V366M389.5 372.8V374.8M401.5 371.9V373.9M401.5 382.9V382.9M405.5 363.9V364.9M405.5 373.9V373.9M421.5 368.8V370.8M421.5 373.9V375.9M425.5 366.9V367.9M425.5 370.8V372.8M429.5 358V360M429.5 367.9V369.9M433.5 353V355M433.5 360V361M437.5 347.9V350.9M437.5 355V355M445.5 341V344M445.5 353V353M449.5 331.9V334.9M449.5 343.9V343.9M466.5 339.9V341.9M466.5 348V349M474.5 339.9V340.9M474.5 341.9V342.9M478.5 335.9V338.9M478.5 340.9V340.9M482.5 329.6V329.6M482.5 338.6V339.6M502.5 343.9V346.9M502.5 355.4V355.4M510.5 356.9V358.9M510.5 360.4V360.4M518.5 374.9V377.9M518.5 379.9V380.9M543.5 417.9V418.9M543.5 428.9V430.9M551.5 423V424M551.5 426.9V428.9M563.5 435.9V438.9M563.5 452.6V453.6M575.5 433V436M575.5 445V447M587.5 440.9V443.9M587.5 447V449M591.5 435.1V438.1M591.5 443.9V444.9M599.5 436.4V437.4M599.5 446.4V446.4M611.5 457.7V459.7M611.5 460.7V461.7M615.5 454.1V455.1M615.5 459.7V459.7M632.5 452V454M632.5 462.9V464.9M636.5 451.8V452.8M636.5 454V456M640.5 447.9V448.9M640.5 452.8V452.8M644.5 441V442M644.5 448.9V449.9M652.5 444.9V444.9M652.5 447.9V447.9M656.5 426V429M656.5 438V440M668.5 445.9V446.9M668.5 447.9V447.9M672.5 435.9V436.9M672.5 445.9V445.9M684.5 464.4V465.4M684.5 467.9V469.9M692.5 464.9V467.9M692.5 476.9V478.9M696.5 461.9V461.9M696.5 467.9V467.9M701.5 458.9V459.9M701.5 461.9V462.9M713.5 457.9V459.9M713.5 468.9V470.9M733.5 463.8V463.8M733.5 466V467M737.5 452.9V455.9M737.5 463.8V464.8M745.5 452.9V455.9M745.5 462.9V463.9M749.5 448.9V449.9M749.5 455.9V455.9M761.5 445V446M761.5 455V456M769.5 444.9V447.9M769.5 452.8V454.8M773.5 443.9V444.9M773.5 447.9V448.9M786.5 446.9V447.9M786.5 448.9V449.9M802.5 439V440M802.5 448.9V448.9M806.5 433V436M806.5 440V440M814.5 426.9V429.9M814.5 438.9V438.9M818.5 428V428M818.5 429.9V429.9M838.5 435.2V436.2M838.5 438.9V439.9M846.5 440V442M846.5 447V449M858.5 447.9V447.9M858.5 449.9V450.9M871.5 437.7V439.7M871.5 448.7V449.7M891.5 455V458M891.5 467V468M895.5 453.9V456.9M895.5 458V458M915.5 450.8V451.8M915.5 460.8V460.8M919.5 446V446M919.5 451.8V453.8M931.5 446.9V448.9M931.5 450.8V452.8M935.5 442.9V443.9M935.5 448.9V448.9M956.5 446.9V448.9M956.5 451.8V453.8M964.5 433V434M964.5 443V444M976.5 449.8V450.8M976.5 451.8V452.8M980.5 444.9V447.9M980.5 450.8V451.8M984.5 443.9V444.9M984.5 447.9V449.9M996.5 444.8V447.8M996.5 450.8V451.8M1016.5 464.9V466.9M1016.5 467.9V469.9M1020.5 463.9V463.9M1020.5 466.9V468.9M1037.5 463.8V463.8M1037.5 472.8V474.8M1041.5 461.9V461.9M1041.5 463.8V464.8M1045.5 456.8V458.8M1045.5 461.9V461.9M1057.5 455V458M1057.5 463.8V463.8M1061.5 451.8V451.8M1061.5 458V459M1077.5 461.9V461.9M1077.5 470V471M1085.5 458.8V458.8M1085.5 465V466M1093.5 461.9V461.9M1093.5 465V466M1101.5 455.4V458.4M1101.5 463.8V465.8M1105.5 454.5V457.5M1105.5 458.5V458.5M1122.5 471.9V473.9M1122.5 479.9V480.9M1134.5 495.9V497.9M1134.5 499.5V499.5M1138.5 493V496M1138.5 497.9V498.9M1158.5 535.9V538.9M1158.5 544.9V546.9M1170.5 555.9V555.9M1170.5 561.9V563.9M1178.5 571V574M1178.5 575.8V577.8M1191.5 576V578M1191.5 582.9V583.9M1199.5 570.8V570.8M1199.5 576.8V578.8M1203.5 565.9V568.9M1203.5 570.8V570.8M1215.5 569.3V570.3M1215.5 573.2V574.2M1235.5 591.9V594.9M1235.5 599.9V601.9M1239.5 583.8V583.8M1239.5 589.8V589.8M1247.5 573.9V576.9M1247.5 583.8V584.8M1251.5 571.8V572.8M1251.5 576.9V576.9M1263.5 581.8V583.8M1263.5 590.8V592.8" stroke="#c4c4c4" stroke-width="1" fill="none"/>
<path d="M88 408h3v2h-3zM92 407.1h3v1h-3zM96 396h3v9h-3zM100 392h3v4h-3zM108 389.8h3v3.1h-3zM112 384.6h3v5.3h-3zM124 409.6h3v4.8h-3zM133 412.8h3v7.3h-3zM141 412.8h3v2.2h-3zM145 408.8h3v4h-3zM157 413.6h3v1.4h-3zM165 421.9h3v4.1h-3zM173 408.8h3v9h-3zM181 410.6h3v1h-3zM185 406.9h3v3.7h-3zM189 404.7h3v2.2h-3zM193 397.7h3v7h-3zM201 396.7h3v2.2h-3zM218 402.8h3v3.1h-3zM222 397.7h3v5.1h-3zM226 384h3v9h-3zM230 382.9h3v1h-3zM254 387.9h3v5h-3zM258 386h3v1.9h-3zM266 379h3v7h-3zM270 375.9h3v3.1h-3zM282 384.9h3v5h-3zM291 379.9h3v9h-3zM299 380.9h3v9h-3zM307 378.8h3v3.1h-3zM319 381.9h3v7h-3zM331 380.9h3v5.1h-3zM335 375.9h3v5h-3zM359 376.9h3v9h-3zM372 380.9h3v2.9h-3zM376 372.8h3v8.1h-3zM380 366.8h3v6h-3zM388 366h3v6.9h-3zM400 373.9h3v9h-3zM404 364.9h3v8.9h-3zM420 370.8h3v3.1h-3zM424 367.9h3v2.9h-3zM428 360h3v7.9h-3zM432 355h3v5h-3zM436 350.9h3v4.1h-3zM444 344h3v9h-3zM448 334.9h3v9h-3zM465 341.9h3v6h-3zM473 340.9h3v1h-3zM477 338.9h3v2h-3zM481 329.6h3v9h-3zM501 346.9h3v8.6h-3zM509 358.9h3v1.6h-3zM517 377.9h3v2h-3zM542 418.9h3v10h-3zM550 424h3v3h-3zM562 438.9h3v13.7h-3zM574 436h3v9h-3zM586 443.9h3v3.1h-3zM590 438.1h3v5.9h-3zM598 437.4h3v9h-3zM610 459.7h3v1h-3zM614 455.1h3v4.6h-3zM631 454h3v8.9h-3zM635 452.8h3v1.2h-3zM639 448.9h3v4h-3zM643 442h3v6.9h-3zM651 444.9h3v2.9h-3zM655 429h3v9h-3zM667 446.9h3v1h-3zM671 436.9h3v9h-3zM683 465.4h3v2.5h-3zM691 467.9h3v9h-3zM695 461.9h3v6h-3zM700 459.9h3v2h-3zM712 459.9h3v9h-3zM732 463.8h3v2.2h-3zM736 455.9h3v7.9h-3zM744 455.9h3v7h-3zM748 449.9h3v6h-3zM760 446h3v9h-3zM768 447.9h3v5h-3zM772 444.9h3v2.9h-3zM785 447.9h3v1h-3zM801 440h3v8.9h-3zM805 436h3v4h-3zM813 429.9h3v9h-3zM817 428h3v1.9h-3zM837 436.2h3v2.7h-3zM845 442h3v5h-3zM857 447.9h3v2h-3zM870 439.7h3v9h-3zM890 458h3v9h-3zM894 456.9h3v1h-3zM914 451.8h3v9h-3zM918 446h3v5.9h-3zM930 448.9h3v1.9h-3zM934 443.9h3v5h-3zM955 448.9h3v2.9h-3zM963 434h3v9h-3zM975 450.8h3v1h-3zM979 447.9h3v2.9h-3zM983 444.9h3v2.9h-3zM995 447.8h3v3h-3zM1015 466.9h3v1h-3zM1019 463.9h3v3h-3zM1036 463.8h3v9h-3zM1040 461.9h3v1.9h-3zM1044 458.8h3v3.1h-3zM1056 458h3v5.9h-3zM1060 451.8h3v6.1h-3zM1076 461.9h3v8.1h-3zM1084 458.8h3v6.1h-3zM1092 461.9h3v3.1h-3zM1100 458.4h3v5.4h-3zM1104 457.5h3v1h-3zM1121 473.9h3v6h-3zM1133 497.9h3v1.6h-3zM1137 496h3v1.9h-3zM1157 538.9h3v6h-3zM1169 555.9h3v6h-3zM1177 574h3v1.8h-3zM1190 578h3v5h-3zM1198 570.8h3v6h-3zM1202 568.9h3v1.9h-3zM1214 570.3h3v2.9h-3zM1234 594.9h3v5h-3zM1238 583.8h3v6h-3zM1246 576.9h3v6.9h-3zM1250 572.8h3v4.1h-3zM1262 583.8h3v7h-3z" fill="#282828" stroke="#c4c4c4" stroke-width="1"/>
<path d="M86.5 411l2.2 -1.7l2.2 1.7l-2.2 1.7zM90.4 410.1l2.2 -1.7l2.2 1.7l-2.2 1.7zM94.5 400l2.2 -1.7l2.2 1.7l-2.2 1.7zM98.6 396l2.2 -1.7l2.2 1.7l-2.2 1.7zM102.6 396.4l2.2 -1.7l2.2 1.7l-2.2 1.7zM106.7 399l2.2 -1.7l2.2 1.7l-2.2 1.7zM110.6 394.5l2.2 -1.7l2.2 1.7l-2.2 1.7zM114.6 415.4l2.2 -1.7l2.2 1.7l-2.2 1.7zM118.7 423.4l2.2 -1.7l2.2 1.7l-2.2 1.7zM122.6 420l2.2 -1.7l2.2 1.7l-2.2 1.7zM127.5 423.1l2.2 -1.7l2.2 1.7l-2.2 1.7zM131.6 417.3l2.2 -1.7l2.2 1.7l-2.2 1.7zM135.5 419.5l2.2 -1.7l2.2 1.7l-2.2 1.7zM139.6 418.3l2.2 -1.7l2.2 1.7l-2.2 1.7zM143.6 411.8l2.2 -1.7l2.2 1.7l-2.2 1.7zM147.7 413.9l2.2 -1.7l2.2 1.7l-2.2 1.7zM151.6 419l2.2 -1.7l2.2 1.7l-2.2 1.7zM155.6 421.9l2.2 -1.7l2.2 1.7l-2.2 1.7zM159.7 430l2.2 -1.7l2.2 1.7l-2.2 1.7zM163.6 427.4l2.2 -1.7l2.2 1.7l-2.2 1.7zM167.7 427.9l2.2 -1.7l2.2 1.7l-2.2 1.7zM171.7 412.3l2.2 -1.7l2.2 1.7l-2.2 1.7zM175.8 414.9l2.2 -1.7l2.2 1.7l-2.2 1.7zM179.7 413.6l2.2 -1.7l2.2 1.7l-2.2 1.7zM183.8 412.4l2.2 -1.7l2.2 1.7l-2.2 1.7zM187.8 408.7l2.2 -1.7l2.2 1.7l-2.2 1.7zM191.7 400.7l2.2 -1.7l2.2 1.7l-2.2 1.7zM195.8 402.9l2.2 -1.7l2.2 1.7l-2.2 1.7zM199.8 402.2l2.2 -1.7l2.2 1.7l-2.2 1.7zM203.7 404.3l2.2 -1.7l2.2 1.7l-2.2 1.7zM208.7 408.2l2.2 -1.7l2.2 1.7l-2.2 1.7zM212.7 409.9l2.2 -1.7l2.2 1.7l-2.2 1.7zM216.6 407.3l2.2 -1.7l2.2 1.7l-2.2 1.7zM220.7 401.7l2.2 -1.7l2.2 1.7l-2.2 1.7zM224.7 387l2.2 -1.7l2.2 1.7l-2.2 1.7zM228.8 388.4l2.2 -1.7l2.2 1.7l-2.2 1.7zM232.7 389.5l2.2 -1.7l2.2 1.7l-2.2 1.7zM236.7 392.4l2.2 -1.7l2.2 1.7l-2.2 1.7zM240.8 394.4l2.2 -1.7l2.2 1.7l-2.2 1.7zM244.7 394.5l2.2 -1.7l2.2 1.7l-2.2 1.7zM248.7 396.4l2.2 -1.7l2.2 1.7l-2.2 1.7zM252.6 390.9l2.2 -1.7l2.2 1.7l-2.2 1.7zM256.7 389l2.2 -1.7l2.2 1.7l-2.2 1.7zM260.7 389.5l2.2 -1.7l2.2 1.7l-2.2 1.7zM264.6 383.5l2.2 -1.7l2.2 1.7l-2.2 1.7zM268.7 379.4l2.2 -1.7l2.2 1.7l-2.2 1.7zM272.7 393.4l2.2 -1.7l2.2 1.7l-2.2 1.7zM276.8 394l2.2 -1.7l2.2 1.7l-2.2 1.7zM280.8 392.9l2.2 -1.7l2.2 1.7l-2.2 1.7zM284.8 407.5l2.2 -1.7l2.2 1.7l-2.2 1.7zM289.7 382.9l2.2 -1.7l2.2 1.7l-2.2 1.7zM293.8 394.8l2.2 -1.7l2.2 1.7l-2.2 1.7zM297.7 384.9l2.2 -1.7l2.2 1.7l-2.2 1.7zM301.8 386.4l2.2 -1.7l2.2 1.7l-2.2 1.7zM305.8 382.3l2.2 -1.7l2.2 1.7l-2.2 1.7zM309.7 386.8l2.2 -1.7l2.2 1.7l-2.2 1.7zM313.7 392.4l2.2 -1.7l2.2 1.7l-2.2 1.7zM317.6 384.9l2.2 -1.7l2.2 1.7l-2.2 1.7zM321.7 390l2.2 -1.7l2.2 1.7l-2.2 1.7zM325.7 389l2.2 -1.7l2.2 1.7l-2.2 1.7zM329.7 386.4l2.2 -1.7l2.2 1.7l-2.2 1.7zM333.8 380.4l2.2 -1.7l2.2 1.7l-2.2 1.7zM337.7 382.4l2.2 -1.7l2.2 1.7l-2.2 1.7zM341.7 389.3l2.2 -1.7l2.2 1.7l-2.2 1.7zM345.8 388.4l2.2 -1.7l2.2 1.7l-2.2 1.7zM349.7 388l2.2 -1.7l2.2 1.7l-2.2 1.7zM353.7 398.4l2.2 -1.7l2.2 1.7l-2.2 1.7zM357.8 381.4l2.2 -1.7l2.2 1.7l-2.2 1.7zM361.9 383.9l2.2 -1.7l2.2 1.7l-2.2 1.7zM365.8 387.8l2.2 -1.7l2.2 1.7l-2.2 1.7zM370.6 383.9l2.2 -1.7l2.2 1.7l-2.2 1.7zM374.6 378.3l2.2 -1.7l2.2 1.7l-2.2 1.7zM378.7 371.3l2.2 -1.7l2.2 1.7l-2.2 1.7zM382.7 376.8l2.2 -1.7l2.2 1.7l-2.2 1.7zM386.8 369.5l2.2 -1.7l2.2 1.7l-2.2 1.7zM390.7 383.3l2.2 -1.7l2.2 1.7l-2.2 1.7zM394.7 390.5l2.2 -1.7l2.2 1.7l-2.2 1.7zM398.6 379.4l2.2 -1.7l2.2 1.7l-2.2 1.7zM402.7 370.4l2.2 -1.7l2.2 1.7l-2.2 1.7zM406.7 373.9l2.2 -1.7l2.2 1.7l-2.2 1.7zM410.6 375.8l2.2 -1.7l2.2 1.7l-2.2 1.7zM414.7 378.4l2.2 -1.7l2.2 1.7l-2.2 1.7zM418.7 373.8l2.2 -1.7l2.2 1.7l-2.2 1.7zM422.6 372.4l2.2 -1.7l2.2 1.7l-2.2 1.7zM426.6 365.5l2.2 -1.7l2.2 1.7l-2.2 1.7zM430.7 359.5l2.2 -1.7l2.2 1.7l-2.2 1.7zM434.6 356.4l2.2 -1.7l2.2 1.7l-2.2 1.7zM438.7 357l2.2 -1.7l2.2 1.7l-2.2 1.7zM442.7 348l2.2 -1.7l2.2 1.7l-2.2 1.7zM446.8 340.4l2.2 -1.7l2.2 1.7l-2.2 1.7zM451.6 341.5l2.2 -1.7l2.2 1.7l-2.2 1.7zM455.6 347l2.2 -1.7l2.2 1.7l-2.2 1.7zM459.7 353.5l2.2 -1.7l2.2 1.7l-2.2 1.7zM463.6 345.4l2.2 -1.7l2.2 1.7l-2.2 1.7zM467.7 345.9l2.2 -1.7l2.2 1.7l-2.2 1.7zM471.7 345.4l2.2 -1.7l2.2 1.7l-2.2 1.7zM475.8 342.4l2.2 -1.7l2.2 1.7l-2.2 1.7zM479.7 338.4l2.2 -1.7l2.2 1.7l-2.2 1.7zM483.5 342.4l2.2 -1.7l2.2 1.7l-2.2 1.7zM487.6 354.5l2.2 -1.7l2.2 1.7l-2.2 1.7zM491.6 361.9l2.2 -1.7l2.2 1.7l-2.2 1.7zM495.7 366.9l2.2 -1.7l2.2 1.7l-2.2 1.7zM499.6 358.4l2.2 -1.7l2.2 1.7l-2.2 1.7zM503.7 371.9l2.2 -1.7l2.2 1.7l-2.2 1.7zM507.7 371.4l2.2 -1.7l2.2 1.7l-2.2 1.7zM511.8 391.9l2.2 -1.7l2.2 1.7l-2.2 1.7zM515.7 388.9l2.2 -1.7l2.2 1.7l-2.2 1.7zM519.7 410.9l2.2 -1.7l2.2 1.7l-2.2 1.7zM523.8 414.4l2.2 -1.7l2.2 1.7l-2.2 1.7zM527.7 416.4l2.2 -1.7l2.2 1.7l-2.2 1.7zM531.7 428l2.2 -1.7l2.2 1.7l-2.2 1.7zM536.5 433.4l2.2 -1.7l2.2 1.7l-2.2 1.7zM540.6 429.9l2.2 -1.7l2.2 1.7l-2.2 1.7zM544.6 439.4l2.2 -1.7l2.2 1.7l-2.2 1.7zM548.7 428l2.2 -1.7l2.2 1.7l-2.2 1.7zM552.7 447.5l2.2 -1.7l2.2 1.7l-2.2 1.7zM556.6 462.5l2.2 -1.7l2.2 1.7l-2.2 1.7zM560.7 442.9l2.2 -1.7l2.2 1.7l-2.2 1.7zM564.7 455.8l2.2 -1.7l2.2 1.7l-2.2 1.7zM568.8 459l2.2 -1.7l2.2 1.7l-2.2 1.7zM572.7 440.5l2.2 -1.7l2.2 1.7l-2.2 1.7zM576.7 445.5l2.2 -1.7l2.2 1.7l-2.2 1.7zM580.8 452.5l2.2 -1.7l2.2 1.7l-2.2 1.7zM584.8 447.4l2.2 -1.7l2.2 1.7l-2.2 1.7zM588.7 442.6l2.2 -1.7l2.2 1.7l-2.2 1.7zM592.7 455.4l2.2 -1.7l2.2 1.7l-2.2 1.7zM596.6 446l2.2 -1.7l2.2 1.7l-2.2 1.7zM600.7 450.4l2.2 -1.7l2.2 1.7l-2.2 1.7zM604.7 463.4l2.2 -1.7l2.2 1.7l-2.2 1.7zM608.8 470.5l2.2 -1.7l2.2 1.7l-2.2 1.7zM612.7 464.4l2.2 -1.7l2.2 1.7l-2.2 1.7zM617.4 466.4l2.2 -1.7l2.2 1.7l-2.2 1.7zM621.5 466.9l2.2 -1.7l2.2 1.7l-2.2 1.7zM625.5 467.4l2.2 -1.7l2.2 1.7l-2.2 1.7zM629.6 458l2.2 -1.7l2.2 1.7l-2.2 1.7zM633.5 458.3l2.2 -1.7l2.2 1.7l-2.2 1.7zM637.6 452.9l2.2 -1.7l2.2 1.7l-2.2 1.7zM641.6 446.5l2.2 -1.7l2.2 1.7l-2.2 1.7zM645.5 451.9l2.2 -1.7l2.2 1.7l-2.2 1.7zM649.6 447.9l2.2 -1.7l2.2 1.7l-2.2 1.7zM653.6 433.5l2.2 -1.7l2.2 1.7l-2.2 1.7zM657.7 433.9l2.2 -1.7l2.2 1.7l-2.2 1.7zM661.6 451.5l2.2 -1.7l2.2 1.7l-2.2 1.7zM665.7 458.4l2.2 -1.7l2.2 1.7l-2.2 1.7zM669.7 450.4l2.2 -1.7l2.2 1.7l-2.2 1.7zM673.8 457l2.2 -1.7l2.2 1.7l-2.2 1.7zM677.7 471.4l2.2 -1.7l2.2 1.7l-2.2 1.7zM681.7 473l2.2 -1.7l2.2 1.7l-2.2 1.7zM685.6 487.9l2.2 -1.7l2.2 1.7l-2.2 1.7zM689.7 470.9l2.2 -1.7l2.2 1.7l-2.2 1.7zM693.7 465.9l2.2 -1.7l2.2 1.7l-2.2 1.7zM698.7 463.9l2.2 -1.7l2.2 1.7l-2.2 1.7zM702.8 470.9l2.2 -1.7l2.2 1.7l-2.2 1.7zM706.7 478.9l2.2 -1.7l2.2 1.7l-2.2 1.7zM710.7 463.4l2.2 -1.7l2.2 1.7l-2.2 1.7zM714.8 468.4l2.2 -1.7l2.2 1.7l-2.2 1.7zM718.7 468.3l2.2 -1.7l2.2 1.7l-2.2 1.7zM722.7 468l2.2 -1.7l2.2 1.7l-2.2 1.7zM726.6 470.5l2.2 -1.7l2.2 1.7l-2.2 1.7zM730.7 467.3l2.2 -1.7l2.2 1.7l-2.2 1.7zM734.7 459.4l2.2 -1.7l2.2 1.7l-2.2 1.7zM738.8 466.9l2.2 -1.7l2.2 1.7l-2.2 1.7zM742.7 460.4l2.2 -1.7l2.2 1.7l-2.2 1.7zM746.8 453.9l2.2 -1.7l2.2 1.7l-2.2 1.7zM750.8 457.3l2.2 -1.7l2.2 1.7l-2.2 1.7zM754.7 464.4l2.2 -1.7l2.2 1.7l-2.2 1.7zM758.7 449.5l2.2 -1.7l2.2 1.7l-2.2 1.7zM762.6 455.8l2.2 -1.7l2.2 1.7l-2.2 1.7zM766.7 451.4l2.2 -1.7l2.2 1.7l-2.2 1.7zM770.7 449.4l2.2 -1.7l2.2 1.7l-2.2 1.7zM774.7 451.5l2.2 -1.7l2.2 1.7l-2.2 1.7zM779.5 451.9l2.2 -1.7l2.2 1.7l-2.2 1.7zM783.6 450.9l2.2 -1.7l2.2 1.7l-2.2 1.7zM787.5 453.4l2.2 -1.7l2.2 1.7l-2.2 1.7zM791.6 451.9l2.2 -1.7l2.2 1.7l-2.2 1.7zM795.6 452.9l2.2 -1.7l2.2 1.7l-2.2 1.7zM799.5 445.5l2.2 -1.7l2.2 1.7l-2.2 1.7zM803.6 440l2.2 -1.7l2.2 1.7l-2.2 1.7zM807.6 445l2.2 -1.7l2.2 1.7l-2.2 1.7zM811.5 432.9l2.2 -1.7l2.2 1.7l-2.2 1.7zM815.6 432l2.2 -1.7l2.2 1.7l-2.2 1.7zM819.6 437.4l2.2 -1.7l2.2 1.7l-2.2 1.7zM823.7 437.4l2.2 -1.7l2.2 1.7l-2.2 1.7zM827.7 444.5l2.2 -1.7l2.2 1.7l-2.2 1.7zM831.8 443.4l2.2 -1.7l2.2 1.7l-2.2 1.7zM835.7 445.5l2.2 -1.7l2.2 1.7l-2.2 1.7zM839.7 451l2.2 -1.7l2.2 1.7l-2.2 1.7zM843.6 446.5l2.2 -1.7l2.2 1.7l-2.2 1.7zM847.7 450.5l2.2 -1.7l2.2 1.7l-2.2 1.7zM851.7 454.4l2.2 -1.7l2.2 1.7l-2.2 1.7zM855.6 450.9l2.2 -1.7l2.2 1.7l-2.2 1.7zM860.6 453.4l2.2 -1.7l2.2 1.7l-2.2 1.7zM864.7 455.8l2.2 -1.7l2.2 1.7l-2.2 1.7zM868.6 449.4l2.2 -1.7l2.2 1.7l-2.2 1.7zM872.7 458l2.2 -1.7l2.2 1.7l-2.2 1.7zM876.7 462.9l2.2 -1.7l2.2 1.7l-2.2 1.7zM880.7 467.3l2.2 -1.7l2.2 1.7l-2.2 1.7zM884.8 472.4l2.2 -1.7l2.2 1.7l-2.2 1.7zM888.7 462.5l2.2 -1.7l2.2 1.7l-2.2 1.7zM892.8 461.4l2.2 -1.7l2.2 1.7l-2.2 1.7zM896.8 460.9l2.2 -1.7l2.2 1.7l-2.2 1.7zM900.7 464.9l2.2 -1.7l2.2 1.7l-2.2 1.7zM904.8 465.9l2.2 -1.7l2.2 1.7l-2.2 1.7zM908.8 468.3l2.2 -1.7l2.2 1.7l-2.2 1.7zM912.7 456.3l2.2 -1.7l2.2 1.7l-2.2 1.7zM916.7 449l2.2 -1.7l2.2 1.7l-2.2 1.7zM920.8 450.5l2.2 -1.7l2.2 1.7l-2.2 1.7zM924.7 453.8l2.2 -1.7l2.2 1.7l-2.2 1.7zM928.5 451.9l2.2 -1.7l2.2 1.7l-2.2 1.7zM932.6 448.4l2.2 -1.7l2.2 1.7l-2.2 1.7zM936.6 447.4l2.2 -1.7l2.2 1.7l-2.2 1.7zM940.7 452.4l2.2 -1.7l2.2 1.7l-2.2 1.7zM945.7 454.4l2.2 -1.7l2.2 1.7l-2.2 1.7zM949.6 455.8l2.2 -1.7l2.2 1.7l-2.2 1.7zM953.6 452.9l2.2 -1.7l2.2 1.7l-2.2 1.7zM957.7 452.9l2.2 -1.7l2.2 1.7l-2.2 1.7zM961.6 437.5l2.2 -1.7l2.2 1.7l-2.2 1.7zM965.6 450.5l2.2 -1.7l2.2 1.7l-2.2 1.7zM969.7 457.3l2.2 -1.7l2.2 1.7l-2.2 1.7zM973.6 453.8l2.2 -1.7l2.2 1.7l-2.2 1.7zM977.7 451.4l2.2 -1.7l2.2 1.7l-2.2 1.7zM981.7 447.9l2.2 -1.7l2.2 1.7l-2.2 1.7zM985.6 450l2.2 -1.7l2.2 1.7l-2.2 1.7zM989.7 454.3l2.2 -1.7l2.2 1.7l-2.2 1.7zM993.7 455.8l2.2 -1.7l2.2 1.7l-2.2 1.7zM997.6 459.9l2.2 -1.7l2.2 1.7l-2.2 1.7zM1001.7 465.4l2.2 -1.7l2.2 1.7l-2.2 1.7zM1005.7 467.8l2.2 -1.7l2.2 1.7l-2.2 1.7zM1009.6 473.4l2.2 -1.7l2.2 1.7l-2.2 1.7zM1013.7 469.9l2.2 -1.7l2.2 1.7l-2.2 1.7zM1017.7 473.4l2.2 -1.7l2.2 1.7l-2.2 1.7zM1021.7 469l2.2 -1.7l2.2 1.7l-2.2 1.7zM1026.6 469.5l2.2 -1.7l2.2 1.7l-2.2 1.7zM1030.7 482.9l2.2 -1.7l2.2 1.7l-2.2 1.7zM1034.7 467.3l2.2 -1.7l2.2 1.7l-2.2 1.7zM1038.6 466.4l2.2 -1.7l2.2 1.7l-2.2 1.7zM1042.6 464.3l2.2 -1.7l2.2 1.7l-2.2 1.7zM1046.7 466.4l2.2 -1.7l2.2 1.7l-2.2 1.7zM1050.6 469.3l2.2 -1.7l2.2 1.7l-2.2 1.7zM1054.6 462.5l2.2 -1.7l2.2 1.7l-2.2 1.7zM1058.7 457.3l2.2 -1.7l2.2 1.7l-2.2 1.7zM1062.6 462.3l2.2 -1.7l2.2 1.7l-2.2 1.7zM1066.7 464.4l2.2 -1.7l2.2 1.7l-2.2 1.7zM1070.7 474.5l2.2 -1.7l2.2 1.7l-2.2 1.7zM1074.7 467.4l2.2 -1.7l2.2 1.7l-2.2 1.7zM1078.8 469.5l2.2 -1.7l2.2 1.7l-2.2 1.7zM1082.7 462.3l2.2 -1.7l2.2 1.7l-2.2 1.7zM1086.7 468.5l2.2 -1.7l2.2 1.7l-2.2 1.7zM1090.8 465.4l2.2 -1.7l2.2 1.7l-2.2 1.7zM1094.7 466.8l2.2 -1.7l2.2 1.7l-2.2 1.7zM1098.7 466.9l2.2 -1.7l2.2 1.7l-2.2 1.7zM1102.8 468.5l2.2 -1.7l2.2 1.7l-2.2 1.7zM1107.6 471.4l2.2 -1.7l2.2 1.7l-2.2 1.7zM1111.7 484.9l2.2 -1.7l2.2 1.7l-2.2 1.7zM1115.7 493.5l2.2 -1.7l2.2 1.7l-2.2 1.7zM1119.6 485.4l2.2 -1.7l2.2 1.7l-2.2 1.7zM1123.7 490.9l2.2 -1.7l2.2 1.7l-2.2 1.7zM1127.7 507.5l2.2 -1.7l2.2 1.7l-2.2 1.7zM1131.6 508.9l2.2 -1.7l2.2 1.7l-2.2 1.7zM1135.7 507l2.2 -1.7l2.2 1.7l-2.2 1.7zM1139.7 512.4l2.2 -1.7l2.2 1.7l-2.2 1.7zM1143.6 525.5l2.2 -1.7l2.2 1.7l-2.2 1.7zM1147.7 536.5l2.2 -1.7l2.2 1.7l-2.2 1.7zM1151.8 567.9l2.2 -1.7l2.2 1.7l-2.2 1.7zM1155.8 550.4l2.2 -1.7l2.2 1.7l-2.2 1.7zM1159.7 551l2.2 -1.7l2.2 1.7l-2.2 1.7zM1163.8 570.5l2.2 -1.7l2.2 1.7l-2.2 1.7zM1167.8 566.9l2.2 -1.7l2.2 1.7l-2.2 1.7zM1171.7 588.3l2.2 -1.7l2.2 1.7l-2.2 1.7zM1175.7 578l2.2 -1.7l2.2 1.7l-2.2 1.7zM1179.8 587.4l2.2 -1.7l2.2 1.7l-2.2 1.7zM1183.7 587.4l2.2 -1.7l2.2 1.7l-2.2 1.7zM1188.7 583.5l2.2 -1.7l2.2 1.7l-2.2 1.7zM1192.7 586.8l2.2 -1.7l2.2 1.7l-2.2 1.7zM1196.6 575.3l2.2 -1.7l2.2 1.7l-2.2 1.7zM1200.7 573.4l2.2 -1.7l2.2 1.7l-2.2 1.7zM1204.7 574.4l2.2 -1.7l2.2 1.7l-2.2 1.7zM1208.8 579.9l2.2 -1.7l2.2 1.7l-2.2 1.7zM1212.7 581.4l2.2 -1.7l2.2 1.7l-2.2 1.7zM1216.7 585.4l2.2 -1.7l2.2 1.7l-2.2 1.7zM1220.8 588.5l2.2 -1.7l2.2 1.7l-2.2 1.7zM1224.7 599.4l2.2 -1.7l2.2 1.7l-2.2 1.7zM1228.7 605.4l2.2 -1.7l2.2 1.7l-2.2 1.7zM1232.8 598.4l2.2 -1.7l2.2 1.7l-2.2 1.7zM1236.7 589.3l2.2 -1.7l2.2 1.7l-2.2 1.7zM1240.7 587.3l2.2 -1.7l2.2 1.7l-2.2 1.7zM1244.6 580.4l2.2 -1.7l2.2 1.7l-2.2 1.7zM1248.7 576.8l2.2 -1.7l2.2 1.7l-2.2 1.7zM1252.7 590.9l2.2 -1.7l2.2 1.7l-2.2 1.7zM1256.6 594.3l2.2 -1.7l2.2 1.7l-2.2 1.7zM1260.6 588.3l2.2 -1.7l2.2 1.7l-2.2 1.7zM1264.7 591.5l2.2 -1.7l2.2 1.7l-2.2 1.7z" fill="#006000" shape-rendering="geometricPrecision"/>
<path d="M86.3 404.5l2.4 -1.8l2.4 1.8l-2.4 1.8zM90.2 403.6l2.4 -1.8l2.4 1.8l-2.4 1.8zM94.3 392.5l2.4 -1.8l2.4 1.8l-2.4 1.8zM98.4 388.5l2.4 -1.8l2.4 1.8l-2.4 1.8zM102.4 389.4l2.4 -1.8l2.4 1.8l-2.4 1.8zM106.5 392.5l2.4 -1.8l2.4 1.8l-2.4 1.8zM110.4 387.5l2.4 -1.8l2.4 1.8l-2.4 1.8zM114.4 407.4l2.4 -1.8l2.4 1.8l-2.4 1.8zM118.5 415.4l2.4 -1.8l2.4 1.8l-2.4 1.8zM122.4 412.5l2.4 -1.8l2.4 1.8l-2.4 1.8zM127.3 416.6l2.4 -1.8l2.4 1.8l-2.4 1.8zM131.4 409.3l2.4 -1.8l2.4 1.8l-2.4 1.8zM135.3 411.5l2.4 -1.8l2.4 1.8l-2.4 1.8zM139.4 409.3l2.4 -1.8l2.4 1.8l-2.4 1.8zM143.4 405.3l2.4 -1.8l2.4 1.8l-2.4 1.8zM147.5 407.4l2.4 -1.8l2.4 1.8l-2.4 1.8zM151.4 411.5l2.4 -1.8l2.4 1.8l-2.4 1.8zM155.4 414.4l2.4 -1.8l2.4 1.8l-2.4 1.8zM159.5 422.5l2.4 -1.8l2.4 1.8l-2.4 1.8zM163.4 418.4l2.4 -1.8l2.4 1.8l-2.4 1.8zM167.5 421.4l2.4 -1.8l2.4 1.8l-2.4 1.8zM171.5 405.3l2.4 -1.8l2.4 1.8l-2.4 1.8zM175.6 407.4l2.4 -1.8l2.4 1.8l-2.4 1.8zM179.5 407.1l2.4 -1.8l2.4 1.8l-2.4 1.8zM183.6 403.4l2.4 -1.8l2.4 1.8l-2.4 1.8zM187.6 401.2l2.4 -1.8l2.4 1.8l-2.4 1.8zM191.5 394.2l2.4 -1.8l2.4 1.8l-2.4 1.8zM195.6 395.4l2.4 -1.8l2.4 1.8l-2.4 1.8zM199.6 393.2l2.4 -1.8l2.4 1.8l-2.4 1.8zM203.5 397.3l2.4 -1.8l2.4 1.8l-2.4 1.8zM208.5 401.2l2.4 -1.8l2.4 1.8l-2.4 1.8zM212.5 402.4l2.4 -1.8l2.4 1.8l-2.4 1.8zM216.4 399.3l2.4 -1.8l2.4 1.8l-2.4 1.8zM220.5 394.2l2.4 -1.8l2.4 1.8l-2.4 1.8zM224.5 380.5l2.4 -1.8l2.4 1.8l-2.4 1.8zM228.6 379.4l2.4 -1.8l2.4 1.8l-2.4 1.8zM232.5 382.5l2.4 -1.8l2.4 1.8l-2.4 1.8zM236.5 384.4l2.4 -1.8l2.4 1.8l-2.4 1.8zM240.6 385.4l2.4 -1.8l2.4 1.8l-2.4 1.8zM244.5 387.5l2.4 -1.8l2.4 1.8l-2.4 1.8zM248.5 389.4l2.4 -1.8l2.4 1.8l-2.4 1.8zM252.4 384.4l2.4 -1.8l2.4 1.8l-2.4 1.8zM256.5 382.5l2.4 -1.8l2.4 1.8l-2.4 1.8zM260.5 382.5l2.4 -1.8l2.4 1.8l-2.4 1.8zM264.4 375.5l2.4 -1.8l2.4 1.8l-2.4 1.8zM268.5 372.4l2.4 -1.8l2.4 1.8l-2.4 1.8zM272.5 385.4l2.4 -1.8l2.4 1.8l-2.4 1.8zM276.6 386.5l2.4 -1.8l2.4 1.8l-2.4 1.8zM280.6 385.4l2.4 -1.8l2.4 1.8l-2.4 1.8zM284.6 398.5l2.4 -1.8l2.4 1.8l-2.4 1.8zM289.5 376.4l2.4 -1.8l2.4 1.8l-2.4 1.8zM293.6 387.3l2.4 -1.8l2.4 1.8l-2.4 1.8zM297.5 377.4l2.4 -1.8l2.4 1.8l-2.4 1.8zM301.6 378.4l2.4 -1.8l2.4 1.8l-2.4 1.8zM305.6 375.3l2.4 -1.8l2.4 1.8l-2.4 1.8zM309.5 380.3l2.4 -1.8l2.4 1.8l-2.4 1.8zM313.5 385.4l2.4 -1.8l2.4 1.8l-2.4 1.8zM317.4 378.4l2.4 -1.8l2.4 1.8l-2.4 1.8zM321.5 382.5l2.4 -1.8l2.4 1.8l-2.4 1.8zM325.5 382.5l2.4 -1.8l2.4 1.8l-2.4 1.8zM329.5 377.4l2.4 -1.8l2.4 1.8l-2.4 1.8zM333.6 372.4l2.4 -1.8l2.4 1.8l-2.4 1.8zM337.5 373.4l2.4 -1.8l2.4 1.8l-2.4 1.8zM341.5 380.3l2.4 -1.8l2.4 1.8l-2.4 1.8zM345.6 379.4l2.4 -1.8l2.4 1.8l-2.4 1.8zM349.5 381.5l2.4 -1.8l2.4 1.8l-2.4 1.8zM353.5 391.4l2.4 -1.8l2.4 1.8l-2.4 1.8zM357.6 373.4l2.4 -1.8l2.4 1.8l-2.4 1.8zM361.7 377.4l2.4 -1.8l2.4 1.8l-2.4 1.8zM365.6 380.3l2.4 -1.8l2.4 1.8l-2.4 1.8zM370.4 377.4l2.4 -1.8l2.4 1.8l-2.4 1.8zM374.4 369.3l2.4 -1.8l2.4 1.8l-2.4 1.8zM378.5 363.3l2.4 -1.8l2.4 1.8l-2.4 1.8zM382.5 369.3l2.4 -1.8l2.4 1.8l-2.4 1.8zM386.6 362.5l2.4 -1.8l2.4 1.8l-2.4 1.8zM390.5 375.3l2.4 -1.8l2.4 1.8l-2.4 1.8zM394.5 382.5l2.4 -1.8l2.4 1.8l-2.4 1.8zM398.4 370.4l2.4 -1.8l2.4 1.8l-2.4 1.8zM402.5 361.4l2.4 -1.8l2.4 1.8l-2.4 1.8zM406.5 366.4l2.4 -1.8l2.4 1.8l-2.4 1.8zM410.4 369.3l2.4 -1.8l2.4 1.8l-2.4 1.8zM414.5 370.4l2.4 -1.8l2.4 1.8l-2.4 1.8zM418.5 367.3l2.4 -1.8l2.4 1.8l-2.4 1.8zM422.4 364.4l2.4 -1.8l2.4 1.8l-2.4 1.8zM426.4 356.5l2.4 -1.8l2.4 1.8l-2.4 1.8zM430.5 351.5l2.4 -1.8l2.4 1.8l-2.4 1.8zM434.4 347.4l2.4 -1.8l2.4 1.8l-2.4 1.8zM438.5 350.5l2.4 -1.8l2.4 1.8l-2.4 1.8zM442.5 340.5l2.4 -1.8l2.4 1.8l-2.4 1.8zM446.6 331.4l2.4 -1.8l2.4 1.8l-2.4 1.8zM451.4 333.5l2.4 -1.8l2.4 1.8l-2.4 1.8zM455.4 340.5l2.4 -1.8l2.4 1.8l-2.4 1.8zM459.5 344.5l2.4 -1.8l2.4 1.8l-2.4 1.8zM463.4 338.4l2.4 -1.8l2.4 1.8l-2.4 1.8zM467.5 338.4l2.4 -1.8l2.4 1.8l-2.4 1.8zM471.5 337.4l2.4 -1.8l2.4 1.8l-2.4 1.8zM475.6 335.4l2.4 -1.8l2.4 1.8l-2.4 1.8zM479.5 330.4l2.4 -1.8l2.4 1.8l-2.4 1.8zM483.3 335.4l2.4 -1.8l2.4 1.8l-2.4 1.8zM487.4 346.5l2.4 -1.8l2.4 1.8l-2.4 1.8zM491.4 354.4l2.4 -1.8l2.4 1.8l-2.4 1.8zM495.5 359.4l2.4 -1.8l2.4 1.8l-2.4 1.8zM499.4 351.4l2.4 -1.8l2.4 1.8l-2.4 1.8zM503.5 364.4l2.4 -1.8l2.4 1.8l-2.4 1.8zM507.5 363.4l2.4 -1.8l2.4 1.8l-2.4 1.8zM511.6 384.4l2.4 -1.8l2.4 1.8l-2.4 1.8zM515.5 382.4l2.4 -1.8l2.4 1.8l-2.4 1.8zM519.5 404.4l2.4 -1.8l2.4 1.8l-2.4 1.8zM523.6 407.4l2.4 -1.8l2.4 1.8l-2.4 1.8zM527.5 407.4l2.4 -1.8l2.4 1.8l-2.4 1.8zM531.5 420.5l2.4 -1.8l2.4 1.8l-2.4 1.8zM536.3 425.4l2.4 -1.8l2.4 1.8l-2.4 1.8zM540.4 423.4l2.4 -1.8l2.4 1.8l-2.4 1.8zM544.4 431.4l2.4 -1.8l2.4 1.8l-2.4 1.8zM548.5 420.5l2.4 -1.8l2.4 1.8l-2.4 1.8zM552.5 438.5l2.4 -1.8l2.4 1.8l-2.4 1.8zM556.4 454.5l2.4 -1.8l2.4 1.8l-2.4 1.8zM560.5 435.4l2.4 -1.8l2.4 1.8l-2.4 1.8zM564.5 448.3l2.4 -1.8l2.4 1.8l-2.4 1.8zM568.6 451.5l2.4 -1.8l2.4 1.8l-2.4 1.8zM572.5 432.5l2.4 -1.8l2.4 1.8l-2.4 1.8zM576.5 438.5l2.4 -1.8l2.4 1.8l-2.4 1.8zM580.6 443.5l2.4 -1.8l2.4 1.8l-2.4 1.8zM584.6 440.4l2.4 -1.8l2.4 1.8l-2.4 1.8zM588.5 434.6l2.4 -1.8l2.4 1.8l-2.4 1.8zM592.5 446.4l2.4 -1.8l2.4 1.8l-2.4 1.8zM596.4 439.5l2.4 -1.8l2.4 1.8l-2.4 1.8zM600.5 441.4l2.4 -1.8l2.4 1.8l-2.4 1.8zM604.5 456.4l2.4 -1.8l2.4 1.8l-2.4 1.8zM608.6 461.5l2.4 -1.8l2.4 1.8l-2.4 1.8zM612.5 456.4l2.4 -1.8l2.4 1.8l-2.4 1.8zM617.2 457.4l2.4 -1.8l2.4 1.8l-2.4 1.8zM621.3 459.4l2.4 -1.8l2.4 1.8l-2.4 1.8zM625.3 459.4l2.4 -1.8l2.4 1.8l-2.4 1.8zM629.4 450.5l2.4 -1.8l2.4 1.8l-2.4 1.8zM633.3 449.3l2.4 -1.8l2.4 1.8l-2.4 1.8zM637.4 445.4l2.4 -1.8l2.4 1.8l-2.4 1.8zM641.4 438.5l2.4 -1.8l2.4 1.8l-2.4 1.8zM645.3 444.4l2.4 -1.8l2.4 1.8l-2.4 1.8zM649.4 441.4l2.4 -1.8l2.4 1.8l-2.4 1.8zM653.4 425.5l2.4 -1.8l2.4 1.8l-2.4 1.8zM657.5 427.4l2.4 -1.8l2.4 1.8l-2.4 1.8zM661.4 443.5l2.4 -1.8l2.4 1.8l-2.4 1.8zM665.5 451.4l2.4 -1.8l2.4 1.8l-2.4 1.8zM669.5 441.4l2.4 -1.8l2.4 1.8l-2.4 1.8zM673.6 450.5l2.4 -1.8l2.4 1.8l-2.4 1.8zM677.5 464.4l2.4 -1.8l2.4 1.8l-2.4 1.8zM681.5 466.5l2.4 -1.8l2.4 1.8l-2.4 1.8zM685.4 480.4l2.4 -1.8l2.4 1.8l-2.4 1.8zM689.5 464.4l2.4 -1.8l2.4 1.8l-2.4 1.8zM693.5 458.4l2.4 -1.8l2.4 1.8l-2.4 1.8zM698.5 456.4l2.4 -1.8l2.4 1.8l-2.4 1.8zM702.6 464.4l2.4 -1.8l2.4 1.8l-2.4 1.8zM706.5 471.4l2.4 -1.8l2.4 1.8l-2.4 1.8zM710.5 456.4l2.4 -1.8l2.4 1.8l-2.4 1.8zM714.6 459.4l2.4 -1.8l2.4 1.8l-2.4 1.8zM718.5 460.3l2.4 -1.8l2.4 1.8l-2.4 1.8zM722.5 461.5l2.4 -1.8l2.4 1.8l-2.4 1.8zM726.4 462.5l2.4 -1.8l2.4 1.8l-2.4 1.8zM730.5 460.3l2.4 -1.8l2.4 1.8l-2.4 1.8zM734.5 452.4l2.4 -1.8l2.4 1.8l-2.4 1.8zM738.6 459.4l2.4 -1.8l2.4 1.8l-2.4 1.8zM742.5 452.4l2.4 -1.8l2.4 1.8l-2.4 1.8zM746.6 446.4l2.4 -1.8l2.4 1.8l-2.4 1.8zM750.6 449.3l2.4 -1.8l2.4 1.8l-2.4 1.8zM754.5 457.4l2.4 -1.8l2.4 1.8l-2.4 1.8zM758.5 442.5l2.4 -1.8l2.4 1.8l-2.4 1.8zM762.4 449.3l2.4 -1.8l2.4 1.8l-2.4 1.8zM766.5 444.4l2.4 -1.8l2.4 1.8l-2.4 1.8zM770.5 441.4l2.4 -1.8l2.4 1.8l-2.4 1.8zM774.5 443.5l2.4 -1.8l2.4 1.8l-2.4 1.8zM779.3 445.4l2.4 -1.8l2.4 1.8l-2.4 1.8zM783.4 444.4l2.4 -1.8l2.4 1.8l-2.4 1.8zM787.3 445.4l2.4 -1.8l2.4 1.8l-2.4 1.8zM791.4 445.4l2.4 -1.8l2.4 1.8l-2.4 1.8zM795.4 445.4l2.4 -1.8l2.4 1.8l-2.4 1.8zM799.3 436.5l2.4 -1.8l2.4 1.8l-2.4 1.8zM803.4 432.5l2.4 -1.8l2.4 1.8l-2.4 1.8zM807.4 437.5l2.4 -1.8l2.4 1.8l-2.4 1.8zM811.3 426.4l2.4 -1.8l2.4 1.8l-2.4 1.8zM815.4 424.5l2.4 -1.8l2.4 1.8l-2.4 1.8zM819.4 429.4l2.4 -1.8l2.4 1.8l-2.4 1.8zM823.5 429.4l2.4 -1.8l2.4 1.8l-2.4 1.8zM827.5 436.5l2.4 -1.8l2.4 1.8l-2.4 1.8zM831.6 435.4l2.4 -1.8l2.4 1.8l-2.4 1.8zM835.5 436.5l2.4 -1.8l2.4 1.8l-2.4 1.8zM839.5 443.5l2.4 -1.8l2.4 1.8l-2.4 1.8zM843.4 438.5l2.4 -1.8l2.4 1.8l-2.4 1.8zM847.5 443.5l2.4 -1.8l2.4 1.8l-2.4 1.8zM851.5 446.4l2.4 -1.8l2.4 1.8l-2.4 1.8zM855.4 444.4l2.4 -1.8l2.4 1.8l-2.4 1.8zM860.4 446.4l2.4 -1.8l2.4 1.8l-2.4 1.8zM864.5 448.3l2.4 -1.8l2.4 1.8l-2.4 1.8zM868.4 440.4l2.4 -1.8l2.4 1.8l-2.4 1.8zM872.5 450.5l2.4 -1.8l2.4 1.8l-2.4 1.8zM876.5 456.4l2.4 -1.8l2.4 1.8l-2.4 1.8zM880.5 460.3l2.4 -1.8l2.4 1.8l-2.4 1.8zM884.6 464.4l2.4 -1.8l2.4 1.8l-2.4 1.8zM888.5 454.5l2.4 -1.8l2.4 1.8l-2.4 1.8zM892.6 453.4l2.4 -1.8l2.4 1.8l-2.4 1.8zM896.6 453.4l2.4 -1.8l2.4 1.8l-2.4 1.8zM900.5 457.4l2.4 -1.8l2.4 1.8l-2.4 1.8zM904.6 458.4l2.4 -1.8l2.4 1.8l-2.4 1.8zM908.6 460.3l2.4 -1.8l2.4 1.8l-2.4 1.8zM912.5 448.3l2.4 -1.8l2.4 1.8l-2.4 1.8zM916.5 442.5l2.4 -1.8l2.4 1.8l-2.4 1.8zM920.6 443.5l2.4 -1.8l2.4 1.8l-2.4 1.8zM924.5 447.3l2.4 -1.8l2.4 1.8l-2.4 1.8zM928.3 445.4l2.4 -1.8l2.4 1.8l-2.4 1.8zM932.4 440.4l2.4 -1.8l2.4 1.8l-2.4 1.8zM936.4 440.4l2.4 -1.8l2.4 1.8l-2.4 1.8zM940.5 444.4l2.4 -1.8l2.4 1.8l-2.4 1.8zM945.5 445.4l2.4 -1.8l2.4 1.8l-2.4 1.8zM949.4 448.3l2.4 -1.8l2.4 1.8l-2.4 1.8zM953.4 445.4l2.4 -1.8l2.4 1.8l-2.4 1.8zM957.5 445.4l2.4 -1.8l2.4 1.8l-2.4 1.8zM961.4 430.5l2.4 -1.8l2.4 1.8l-2.4 1.8zM965.4 443.5l2.4 -1.8l2.4 1.8l-2.4 1.8zM969.5 448.3l2.4 -1.8l2.4 1.8l-2.4 1.8zM973.4 447.3l2.4 -1.8l2.4 1.8l-2.4 1.8zM977.5 444.4l2.4 -1.8l2.4 1.8l-2.4 1.8zM981.5 441.4l2.4 -1.8l2.4 1.8l-2.4 1.8zM985.4 443.5l2.4 -1.8l2.4 1.8l-2.4 1.8zM989.5 447.3l2.4 -1.8l2.4 1.8l-2.4 1.8zM993.5 449.3l2.4 -1.8l2.4 1.8l-2.4 1.8zM997.4 453.4l2.4 -1.8l2.4 1.8l-2.4 1.8zM1001.5 456.4l2.4 -1.8l2.4 1.8l-2.4 1.8zM1005.5 460.3l2.4 -1.8l2.4 1.8l-2.4 1.8zM1009.4 464.4l2.4 -1.8l2.4 1.8l-2.4 1.8zM1013.5 463.4l2.4 -1.8l2.4 1.8l-2.4 1.8zM1017.5 464.4l2.4 -1.8l2.4 1.8l-2.4 1.8zM1021.5 462.5l2.4 -1.8l2.4 1.8l-2.4 1.8zM1026.4 462.5l2.4 -1.8l2.4 1.8l-2.4 1.8zM1030.5 475.4l2.4 -1.8l2.4 1.8l-2.4 1.8zM1034.5 460.3l2.4 -1.8l2.4 1.8l-2.4 1.8zM1038.4 458.4l2.4 -1.8l2.4 1.8l-2.4 1.8zM1042.4 455.3l2.4 -1.8l2.4 1.8l-2.4 1.8zM1046.5 459.4l2.4 -1.8l2.4 1.8l-2.4 1.8zM1050.4 460.3l2.4 -1.8l2.4 1.8l-2.4 1.8zM1054.4 454.5l2.4 -1.8l2.4 1.8l-2.4 1.8zM1058.5 448.3l2.4 -1.8l2.4 1.8l-2.4 1.8zM1062.4 455.3l2.4 -1.8l2.4 1.8l-2.4 1.8zM1066.5 456.4l2.4 -1.8l2.4 1.8l-2.4 1.8zM1070.5 466.5l2.4 -1.8l2.4 1.8l-2.4 1.8zM1074.5 458.4l2.4 -1.8l2.4 1.8l-2.4 1.8zM1078.6 461.5l2.4 -1.8l2.4 1.8l-2.4 1.8zM1082.5 455.3l2.4 -1.8l2.4 1.8l-2.4 1.8zM1086.5 461.5l2.4 -1.8l2.4 1.8l-2.4 1.8zM1090.6 458.4l2.4 -1.8l2.4 1.8l-2.4 1.8zM1094.5 460.3l2.4 -1.8l2.4 1.8l-2.4 1.8zM1098.5 459.4l2.4 -1.8l2.4 1.8l-2.4 1.8zM1102.6 461.5l2.4 -1.8l2.4 1.8l-2.4 1.8zM1107.4 462.4l2.4 -1.8l2.4 1.8l-2.4 1.8zM1111.5 478.4l2.4 -1.8l2.4 1.8l-2.4 1.8zM1115.5 486.5l2.4 -1.8l2.4 1.8l-2.4 1.8zM1119.4 478.4l2.4 -1.8l2.4 1.8l-2.4 1.8zM1123.5 484.4l2.4 -1.8l2.4 1.8l-2.4 1.8zM1127.5 500.5l2.4 -1.8l2.4 1.8l-2.4 1.8zM1131.4 502.4l2.4 -1.8l2.4 1.8l-2.4 1.8zM1135.5 500.5l2.4 -1.8l2.4 1.8l-2.4 1.8zM1139.5 503.4l2.4 -1.8l2.4 1.8l-2.4 1.8zM1143.4 516.5l2.4 -1.8l2.4 1.8l-2.4 1.8zM1147.5 528.5l2.4 -1.8l2.4 1.8l-2.4 1.8zM1151.6 561.4l2.4 -1.8l2.4 1.8l-2.4 1.8zM1155.6 543.4l2.4 -1.8l2.4 1.8l-2.4 1.8zM1159.5 544.5l2.4 -1.8l2.4 1.8l-2.4 1.8zM1163.6 563.5l2.4 -1.8l2.4 1.8l-2.4 1.8zM1167.6 560.4l2.4 -1.8l2.4 1.8l-2.4 1.8zM1171.5 580.3l2.4 -1.8l2.4 1.8l-2.4 1.8zM1175.5 570.5l2.4 -1.8l2.4 1.8l-2.4 1.8zM1179.6 578.4l2.4 -1.8l2.4 1.8l-2.4 1.8zM1183.5 579.4l2.4 -1.8l2.4 1.8l-2.4 1.8zM1188.5 574.5l2.4 -1.8l2.4 1.8l-2.4 1.8zM1192.5 580.3l2.4 -1.8l2.4 1.8l-2.4 1.8zM1196.4 567.3l2.4 -1.8l2.4 1.8l-2.4 1.8zM1200.5 565.4l2.4 -1.8l2.4 1.8l-2.4 1.8zM1204.5 566.4l2.4 -1.8l2.4 1.8l-2.4 1.8zM1208.6 573.4l2.4 -1.8l2.4 1.8l-2.4 1.8zM1212.5 573.4l2.4 -1.8l2.4 1.8l-2.4 1.8zM1216.5 577.4l2.4 -1.8l2.4 1.8l-2.4 1.8zM1220.6 581.5l2.4 -1.8l2.4 1.8l-2.4 1.8zM1224.5 590.4l2.4 -1.8l2.4 1.8l-2.4 1.8zM1228.5 596.4l2.4 -1.8l2.4 1.8l-2.4 1.8zM1232.6 591.4l2.4 -1.8l2.4 1.8l-2.4 1.8zM1236.5 580.3l2.4 -1.8l2.4 1.8l-2.4 1.8zM1240.5 580.3l2.4 -1.8l2.4 1.8l-2.4 1.8zM1244.4 573.4l2.4 -1.8l2.4 1.8l-2.4 1.8zM1248.5 569.3l2.4 -1.8l2.4 1.8l-2.4 1.8zM1252.5 583.4l2.4 -1.8l2.4 1.8l-2.4 1.8zM1256.4 587.3l2.4 -1.8l2.4 1.8l-2.4 1.8zM1260.4 580.3l2.4 -1.8l2.4 1.8l-2.4 1.8zM1264.5 582.5l2.4 -1.8l2.4 1.8l-2.4 1.8z" fill="#ff0000" shape-rendering="geometricPrecision"/>
<rect x="37" y="576" width="44" height="15" fill="#000000" stroke="#ffffff" stroke-width="1.2"/>
<text x="59" y="588" fill="#ff0000" font-size="11.5" text-anchor="middle">0.09750</text>
<rect x="1317" y="576" width="44" height="15" fill="#000000" stroke="#ffffff" stroke-width="1.2"/>
<text x="1339" y="588" fill="#ff0000" font-size="11.5" text-anchor="middle">0.09750</text>
<rect x="35" y="629" width="1279" height="23.5" fill="#000000"/>
<rect x="1313" y="629" width="51" height="3" fill="#282828"/>
<rect x="35" y="631" width="51" height="1" fill="#808080"/>
<rect x="86" y="631.5" width="1227" height="1.3" fill="#ffffff"/>
<rect x="86" y="631.5" width="1.2" height="20" fill="#ffffff"/>
<rect x="86" y="650.7" width="1228" height="1.3" fill="#ffffff"/>
<rect x="1313" y="631.5" width="1.3" height="20.5" fill="#ffffff"/>
<rect x="100" y="632" width="1.4" height="19.5" fill="#ffffff"/>
<text x="103" y="646.5" fill="#ffffff" font-size="12" text-anchor="start">March</text>
<rect x="185" y="632" width="1.4" height="19.5" fill="#ffffff"/>
<text x="187.9" y="646.5" fill="#ffffff" font-size="12" text-anchor="start">April</text>
<rect x="266" y="632" width="1.4" height="19.5" fill="#ffffff"/>
<text x="269" y="646.5" fill="#ffffff" font-size="12" text-anchor="start">May</text>
<rect x="355" y="632" width="1.4" height="19.5" fill="#ffffff"/>
<text x="357.9" y="646.5" fill="#ffffff" font-size="12" text-anchor="start">June</text>
<rect x="436" y="632" width="1.4" height="19.5" fill="#ffffff"/>
<text x="439.1" y="646.5" fill="#ffffff" font-size="12" text-anchor="start">July</text>
<rect x="529" y="632" width="1.4" height="19.5" fill="#ffffff"/>
<text x="532.2" y="646.5" fill="#ffffff" font-size="12" text-anchor="start">August</text>
<rect x="619" y="632" width="1.4" height="19.5" fill="#ffffff"/>
<text x="622.1" y="646.5" fill="#ffffff" font-size="12" text-anchor="start">September</text>
<rect x="704" y="632" width="1.4" height="19.5" fill="#ffffff"/>
<text x="707.2" y="646.5" fill="#ffffff" font-size="12" text-anchor="start">October</text>
<rect x="797" y="632" width="1.4" height="19.5" fill="#ffffff"/>
<text x="800.1" y="646.5" fill="#ffffff" font-size="12" text-anchor="start">November</text>
<rect x="882" y="632" width="1.4" height="19.5" fill="#ffffff"/>
<text x="885" y="646.5" fill="#ffffff" font-size="12" text-anchor="start">December</text>
<rect x="963" y="632" width="1.4" height="19.5" fill="#ffffff"/>
<text x="965.9" y="646.5" fill="#ffffff" font-size="12" text-anchor="start">2020</text>
<rect x="1052" y="632" width="1.4" height="19.5" fill="#ffffff"/>
<text x="1054.9" y="646.5" fill="#ffffff" font-size="12" text-anchor="start">February</text>
<rect x="1133" y="632" width="1.4" height="19.5" fill="#ffffff"/>
<text x="1135.9" y="646.5" fill="#ffffff" font-size="12" text-anchor="start">March</text>
<rect x="1222" y="632" width="1.4" height="19.5" fill="#ffffff"/>
<text x="1225" y="646.5" fill="#ffffff" font-size="12" text-anchor="start">April</text>
<rect x="1303" y="632" width="1.4" height="19.5" fill="#ffffff"/>
<text x="1305.2" y="646.5" fill="#ffffff" font-size="12" text-anchor="start" clip-path="url(#cpm)">M</text>
<rect x="104" y="632" width="1" height="5" fill="#ffffff"/>
<rect x="124" y="632" width="1" height="5" fill="#ffffff"/>
<rect x="144" y="632" width="1" height="5" fill="#ffffff"/>
<rect x="165" y="632" width="1" height="5" fill="#ffffff"/>
<rect x="185" y="632" width="1" height="5" fill="#ffffff"/>
<rect x="205" y="632" width="1" height="5" fill="#ffffff"/>
<rect x="225" y="632" width="1" height="5" fill="#ffffff"/>
<rect x="245" y="632" width="1" height="5" fill="#ffffff"/>
<rect x="266" y="632" width="1" height="5" fill="#ffffff"/>
<rect x="286" y="632" width="1" height="5" fill="#ffffff"/>
<rect x="306" y="632" width="1" height="5" fill="#ffffff"/>
<rect x="326" y="632" width="1" height="5" fill="#ffffff"/>
<rect x="346" y="632" width="1" height="5" fill="#ffffff"/>
<rect x="367" y="632" width="1" height="5" fill="#ffffff"/>
<rect x="387" y="632" width="1" height="5" fill="#ffffff"/>
<rect x="407" y="632" width="1" height="5" fill="#ffffff"/>
<rect x="427" y="632" width="1" height="5" fill="#ffffff"/>
<rect x="447" y="632" width="1" height="5" fill="#ffffff"/>
<rect x="468" y="632" width="1" height="5" fill="#ffffff"/>
<rect x="488" y="632" width="1" height="5" fill="#ffffff"/>
<rect x="508" y="632" width="1" height="5" fill="#ffffff"/>
<rect x="528" y="632" width="1" height="5" fill="#ffffff"/>
<rect x="548" y="632" width="1" height="5" fill="#ffffff"/>
<rect x="569" y="632" width="1" height="5" fill="#ffffff"/>
<rect x="589" y="632" width="1" height="5" fill="#ffffff"/>
<rect x="609" y="632" width="1" height="5" fill="#ffffff"/>
<rect x="629" y="632" width="1" height="5" fill="#ffffff"/>
<rect x="649" y="632" width="1" height="5" fill="#ffffff"/>
<rect x="670" y="632" width="1" height="5" fill="#ffffff"/>
<rect x="690" y="632" width="1" height="5" fill="#ffffff"/>
<rect x="710" y="632" width="1" height="5" fill="#ffffff"/>
<rect x="730" y="632" width="1" height="5" fill="#ffffff"/>
<rect x="750" y="632" width="1" height="5" fill="#ffffff"/>
<rect x="771" y="632" width="1" height="5" fill="#ffffff"/>
<rect x="791" y="632" width="1" height="5" fill="#ffffff"/>
<rect x="811" y="632" width="1" height="5" fill="#ffffff"/>
<rect x="831" y="632" width="1" height="5" fill="#ffffff"/>
<rect x="851" y="632" width="1" height="5" fill="#ffffff"/>
<rect x="872" y="632" width="1" height="5" fill="#ffffff"/>
<rect x="892" y="632" width="1" height="5" fill="#ffffff"/>
<rect x="912" y="632" width="1" height="5" fill="#ffffff"/>
<rect x="932" y="632" width="1" height="5" fill="#ffffff"/>
<rect x="952" y="632" width="1" height="5" fill="#ffffff"/>
<rect x="973" y="632" width="1" height="5" fill="#ffffff"/>
<rect x="993" y="632" width="1" height="5" fill="#ffffff"/>
<rect x="1013" y="632" width="1" height="5" fill="#ffffff"/>
<rect x="1033" y="632" width="1" height="5" fill="#ffffff"/>
<rect x="1053" y="632" width="1" height="5" fill="#ffffff"/>
<rect x="1074" y="632" width="1" height="5" fill="#ffffff"/>
<rect x="1094" y="632" width="1" height="5" fill="#ffffff"/>
<rect x="1114" y="632" width="1" height="5" fill="#ffffff"/>
<rect x="1134" y="632" width="1" height="5" fill="#ffffff"/>
<rect x="1154" y="632" width="1" height="5" fill="#ffffff"/>
<rect x="1175" y="632" width="1" height="5" fill="#ffffff"/>
<rect x="1195" y="632" width="1" height="5" fill="#ffffff"/>
<rect x="1215" y="632" width="1" height="5" fill="#ffffff"/>
<rect x="1235" y="632" width="1" height="5" fill="#ffffff"/>
<rect x="1255" y="632" width="1" height="5" fill="#ffffff"/>
<rect x="1276" y="632" width="1" height="5" fill="#ffffff"/>
<rect x="1296" y="632" width="1" height="5" fill="#ffffff"/>
<line x1="87.2" y1="631" x2="90.2" y2="629" stroke="#20c020" stroke-width="0.9"/>
<line x1="95.2" y1="631" x2="98.2" y2="629" stroke="#20c020" stroke-width="0.9"/>
<line x1="103.3" y1="631" x2="106.3" y2="629" stroke="#20c020" stroke-width="0.9"/>
<line x1="111.3" y1="631" x2="114.3" y2="629" stroke="#20c020" stroke-width="0.9"/>
<line x1="119.4" y1="629" x2="122.4" y2="631" stroke="#ff2020" stroke-width="0.9"/>
<line x1="128.2" y1="629" x2="131.2" y2="631" stroke="#ff2020" stroke-width="0.9"/>
<line x1="136.2" y1="629" x2="139.2" y2="631" stroke="#ff2020" stroke-width="0.9"/>
<line x1="144.3" y1="629" x2="147.3" y2="631" stroke="#ff2020" stroke-width="0.9"/>
<line x1="152.3" y1="629" x2="155.3" y2="631" stroke="#ff2020" stroke-width="0.9"/>
<line x1="160.4" y1="629" x2="163.4" y2="631" stroke="#ff2020" stroke-width="0.9"/>
<line x1="168.4" y1="629" x2="171.4" y2="631" stroke="#ff2020" stroke-width="0.9"/>
<line x1="176.5" y1="631" x2="179.5" y2="629" stroke="#20c020" stroke-width="0.9"/>
<line x1="184.5" y1="631" x2="187.5" y2="629" stroke="#20c020" stroke-width="0.9"/>
<line x1="192.4" y1="631" x2="195.4" y2="629" stroke="#20c020" stroke-width="0.9"/>
<line x1="200.5" y1="631" x2="203.5" y2="629" stroke="#20c020" stroke-width="0.9"/>
<line x1="209.4" y1="631" x2="212.4" y2="629" stroke="#20c020" stroke-width="0.9"/>
<line x1="217.3" y1="631" x2="220.3" y2="629" stroke="#20c020" stroke-width="0.9"/>
<line x1="225.4" y1="631" x2="228.4" y2="629" stroke="#20c020" stroke-width="0.9"/>
<line x1="233.4" y1="631" x2="236.4" y2="629" stroke="#20c020" stroke-width="0.9"/>
<line x1="241.5" y1="631" x2="244.5" y2="629" stroke="#20c020" stroke-width="0.9"/>
<line x1="249.4" y1="631" x2="252.4" y2="629" stroke="#20c020" stroke-width="0.9"/>
<line x1="257.4" y1="631" x2="260.4" y2="629" stroke="#20c020" stroke-width="0.9"/>
<line x1="265.3" y1="631" x2="268.3" y2="629" stroke="#20c020" stroke-width="0.9"/>
<line x1="273.4" y1="631" x2="276.4" y2="629" stroke="#20c020" stroke-width="0.9"/>
<line x1="306.5" y1="631" x2="309.5" y2="629" stroke="#20c020" stroke-width="0.9"/>
<line x1="314.4" y1="631" x2="317.4" y2="629" stroke="#20c020" stroke-width="0.9"/>
<line x1="322.4" y1="631" x2="325.4" y2="629" stroke="#20c020" stroke-width="0.9"/>
<line x1="330.4" y1="631" x2="333.4" y2="629" stroke="#20c020" stroke-width="0.9"/>
<line x1="338.4" y1="631" x2="341.4" y2="629" stroke="#20c020" stroke-width="0.9"/>
<line x1="346.5" y1="631" x2="349.5" y2="629" stroke="#20c020" stroke-width="0.9"/>
<line x1="354.4" y1="629" x2="357.4" y2="631" stroke="#ff2020" stroke-width="0.9"/>
<line x1="362.6" y1="631" x2="365.6" y2="629" stroke="#20c020" stroke-width="0.9"/>
<line x1="371.3" y1="631" x2="374.3" y2="629" stroke="#20c020" stroke-width="0.9"/>
<line x1="379.4" y1="631" x2="382.4" y2="629" stroke="#20c020" stroke-width="0.9"/>
<line x1="387.5" y1="631" x2="390.5" y2="629" stroke="#20c020" stroke-width="0.9"/>
<line x1="395.4" y1="631" x2="398.4" y2="629" stroke="#20c020" stroke-width="0.9"/>
<line x1="403.4" y1="631" x2="406.4" y2="629" stroke="#20c020" stroke-width="0.9"/>
<line x1="435.3" y1="631" x2="438.3" y2="629" stroke="#20c020" stroke-width="0.9"/>
<line x1="443.4" y1="631" x2="446.4" y2="629" stroke="#20c020" stroke-width="0.9"/>
<line x1="452.3" y1="631" x2="455.3" y2="629" stroke="#20c020" stroke-width="0.9"/>
<line x1="460.4" y1="631" x2="463.4" y2="629" stroke="#20c020" stroke-width="0.9"/>
<line x1="468.4" y1="631" x2="471.4" y2="629" stroke="#20c020" stroke-width="0.9"/>
<line x1="484.2" y1="631" x2="487.2" y2="629" stroke="#20c020" stroke-width="0.9"/>
<line x1="492.3" y1="629" x2="495.3" y2="631" stroke="#ff2020" stroke-width="0.9"/>
<line x1="500.3" y1="629" x2="503.3" y2="631" stroke="#ff2020" stroke-width="0.9"/>
<line x1="508.4" y1="629" x2="511.4" y2="631" stroke="#ff2020" stroke-width="0.9"/>
<line x1="516.4" y1="629" x2="519.4" y2="631" stroke="#ff2020" stroke-width="0.9"/>
<line x1="524.5" y1="629" x2="527.5" y2="631" stroke="#ff2020" stroke-width="0.9"/>
<line x1="532.4" y1="629" x2="535.4" y2="631" stroke="#ff2020" stroke-width="0.9"/>
<line x1="541.3" y1="629" x2="544.3" y2="631" stroke="#ff2020" stroke-width="0.9"/>
<line x1="549.4" y1="629" x2="552.4" y2="631" stroke="#ff2020" stroke-width="0.9"/>
<line x1="557.3" y1="629" x2="560.3" y2="631" stroke="#ff2020" stroke-width="0.9"/>
<line x1="565.4" y1="629" x2="568.4" y2="631" stroke="#ff2020" stroke-width="0.9"/>
<line x1="613.4" y1="629" x2="616.4" y2="631" stroke="#ff2020" stroke-width="0.9"/>
<line x1="670.4" y1="629" x2="673.4" y2="631" stroke="#ff2020" stroke-width="0.9"/>
<line x1="678.4" y1="629" x2="681.4" y2="631" stroke="#ff2020" stroke-width="0.9"/>
<line x1="686.3" y1="629" x2="689.3" y2="631" stroke="#ff2020" stroke-width="0.9"/>
<line x1="694.4" y1="629" x2="697.4" y2="631" stroke="#ff2020" stroke-width="0.9"/>
<line x1="703.5" y1="629" x2="706.5" y2="631" stroke="#ff2020" stroke-width="0.9"/>
<line x1="711.4" y1="629" x2="714.4" y2="631" stroke="#ff2020" stroke-width="0.9"/>
<line x1="719.4" y1="629" x2="722.4" y2="631" stroke="#ff2020" stroke-width="0.9"/>
<line x1="759.4" y1="629" x2="762.4" y2="631" stroke="#ff2020" stroke-width="0.9"/>
<line x1="800.2" y1="631" x2="803.2" y2="629" stroke="#20c020" stroke-width="0.9"/>
<line x1="808.3" y1="631" x2="811.3" y2="629" stroke="#20c020" stroke-width="0.9"/>
<line x1="816.3" y1="631" x2="819.3" y2="629" stroke="#20c020" stroke-width="0.9"/>
<line x1="824.4" y1="631" x2="827.4" y2="629" stroke="#20c020" stroke-width="0.9"/>
<line x1="840.4" y1="629" x2="843.4" y2="631" stroke="#ff2020" stroke-width="0.9"/>
<line x1="848.4" y1="629" x2="851.4" y2="631" stroke="#ff2020" stroke-width="0.9"/>
<line x1="856.3" y1="629" x2="859.3" y2="631" stroke="#ff2020" stroke-width="0.9"/>
<line x1="865.4" y1="629" x2="868.4" y2="631" stroke="#ff2020" stroke-width="0.9"/>
<line x1="873.4" y1="629" x2="876.4" y2="631" stroke="#ff2020" stroke-width="0.9"/>
<line x1="881.4" y1="629" x2="884.4" y2="631" stroke="#ff2020" stroke-width="0.9"/>
<line x1="889.4" y1="629" x2="892.4" y2="631" stroke="#ff2020" stroke-width="0.9"/>
<line x1="897.5" y1="629" x2="900.5" y2="631" stroke="#ff2020" stroke-width="0.9"/>
<line x1="905.5" y1="629" x2="908.5" y2="631" stroke="#ff2020" stroke-width="0.9"/>
<line x1="962.3" y1="631" x2="965.3" y2="629" stroke="#20c020" stroke-width="0.9"/>
<line x1="970.4" y1="629" x2="973.4" y2="631" stroke="#ff2020" stroke-width="0.9"/>
<line x1="978.4" y1="629" x2="981.4" y2="631" stroke="#ff2020" stroke-width="0.9"/>
<line x1="994.4" y1="629" x2="997.4" y2="631" stroke="#ff2020" stroke-width="0.9"/>
<line x1="1002.4" y1="629" x2="1005.4" y2="631" stroke="#ff2020" stroke-width="0.9"/>
<line x1="1010.3" y1="629" x2="1013.3" y2="631" stroke="#ff2020" stroke-width="0.9"/>
<line x1="1018.4" y1="629" x2="1021.4" y2="631" stroke="#ff2020" stroke-width="0.9"/>
<line x1="1027.3" y1="629" x2="1030.3" y2="631" stroke="#ff2020" stroke-width="0.9"/>
<line x1="1035.4" y1="629" x2="1038.4" y2="631" stroke="#ff2020" stroke-width="0.9"/>
<line x1="1043.3" y1="631" x2="1046.3" y2="629" stroke="#20c020" stroke-width="0.9"/>
<line x1="1051.3" y1="631" x2="1054.3" y2="629" stroke="#20c020" stroke-width="0.9"/>
<line x1="1059.4" y1="631" x2="1062.4" y2="629" stroke="#20c020" stroke-width="0.9"/>
<line x1="1075.4" y1="629" x2="1078.4" y2="631" stroke="#ff2020" stroke-width="0.9"/>
<line x1="1091.5" y1="629" x2="1094.5" y2="631" stroke="#ff2020" stroke-width="0.9"/>
<line x1="1108.3" y1="629" x2="1111.3" y2="631" stroke="#ff2020" stroke-width="0.9"/>
<line x1="1116.4" y1="629" x2="1119.4" y2="631" stroke="#ff2020" stroke-width="0.9"/>
<line x1="1124.4" y1="629" x2="1127.4" y2="631" stroke="#ff2020" stroke-width="0.9"/>
<line x1="1132.3" y1="629" x2="1135.3" y2="631" stroke="#ff2020" stroke-width="0.9"/>
<line x1="1140.4" y1="629" x2="1143.4" y2="631" stroke="#ff2020" stroke-width="0.9"/>
<line x1="1148.4" y1="629" x2="1151.4" y2="631" stroke="#ff2020" stroke-width="0.9"/>
<line x1="1156.5" y1="629" x2="1159.5" y2="631" stroke="#ff2020" stroke-width="0.9"/>
<line x1="1164.5" y1="629" x2="1167.5" y2="631" stroke="#ff2020" stroke-width="0.9"/>
<line x1="1172.4" y1="629" x2="1175.4" y2="631" stroke="#ff2020" stroke-width="0.9"/>
<line x1="1180.5" y1="629" x2="1183.5" y2="631" stroke="#ff2020" stroke-width="0.9"/>
<line x1="1189.4" y1="629" x2="1192.4" y2="631" stroke="#ff2020" stroke-width="0.9"/>
<line x1="1197.3" y1="629" x2="1200.3" y2="631" stroke="#ff2020" stroke-width="0.9"/>
<line x1="1205.4" y1="629" x2="1208.4" y2="631" stroke="#ff2020" stroke-width="0.9"/>
<line x1="1229.4" y1="629" x2="1232.4" y2="631" stroke="#ff2020" stroke-width="0.9"/>
<rect x="1315" y="632" width="49" height="20.5" fill="#e8e8e8"/>
<rect x="1315" y="632" width="49" height="1" fill="#f8f8f8"/>
<rect x="1315" y="632" width="1" height="20.5" fill="#f8f8f8"/>
<circle cx="1339" cy="641.5" r="5" fill="none" stroke="#f0e020" stroke-width="1.3"/><path d="M1336.5 643.5q2.5 2.5 5 0" stroke="#f0e020" fill="none" stroke-width="1"/><rect x="1336.5" y="640" width="1.3" height="1.3" fill="#f0e020"/><rect x="1340.3" y="640" width="1.3" height="1.3" fill="#f0e020"/></svg>
<!-- PANE TITLES -->
<div class="abs ptitle" style="left:59px;top:77px;transform:scaleX(.857)">Sign Osc MI5 (<span style="color:#009000">0.0000,</span> <span style="color:#f00">0.0000</span> )</div>
<div class="abs ptitle" style="left:59px;top:145px;transform:scaleX(.856)">Osc Tuga (<span style="color:#000">-140.000,</span> <span style="color:#f00">-160.000,</span> <span style="color:#009000">-180.000,</span> <span style="color:#fff">84.7981,</span> <span style="color:#f00">55.7009,</span> <span style="color:#009000">174.771</span> )</div>
<div class="abs ptitle" style="left:59px;top:220px;transform:scaleX(.870)">Trend MI5 (<span style="color:#fff">0.00,</span> <span style="color:#000">-40.0000</span> )</div>
<div class="abs ptitle" style="left:59px;top:281px;transform:scaleX(.849)">BANCO COM ORD <span style="color:#86a6cc">(0.09900, 0.10020, 0.09340, 0.09750, -0.00100)</span>, Forecast Prices (<span style="color:#f00">0.10013,</span> <span style="color:#006400">0.09494</span> )</div>
<div class="abs pbtn" style="left:1319px;top:79px"></div>
<svg class="abs" style="left:1323px;top:81px" width="10" height="8" viewBox="0 0 10 8"><rect x="1" y="1" width="8" height="5.500" fill="none" stroke="#6c6c6c" stroke-width="1.800"/></svg>
<div class="abs pbtn" style="left:1341px;top:79px"></div>
<svg class="abs" style="left:1345px;top:81px" width="10" height="8" viewBox="0 0 10 8"><path d="M1.500 1l6.500 6M8 1L1.500 7" stroke="#6c6c6c" stroke-width="2"/></svg>
<div class="abs pbtn" style="left:1319px;top:148px"></div>
<svg class="abs" style="left:1323px;top:150px" width="10" height="8" viewBox="0 0 10 8"><rect x="1" y="1" width="8" height="5.500" fill="none" stroke="#6c6c6c" stroke-width="1.800"/></svg>
<div class="abs pbtn" style="left:1341px;top:148px"></div>
<svg class="abs" style="left:1345px;top:150px" width="10" height="8" viewBox="0 0 10 8"><path d="M1.500 1l6.500 6M8 1L1.500 7" stroke="#6c6c6c" stroke-width="2"/></svg>
<div class="abs pbtn" style="left:1319px;top:222px"></div>
<svg class="abs" style="left:1323px;top:224px" width="10" height="8" viewBox="0 0 10 8"><rect x="1" y="1" width="8" height="5.500" fill="none" stroke="#6c6c6c" stroke-width="1.800"/></svg>
<div class="abs pbtn" style="left:1341px;top:222px"></div>
<svg class="abs" style="left:1345px;top:224px" width="10" height="8" viewBox="0 0 10 8"><path d="M1.500 1l6.500 6M8 1L1.500 7" stroke="#6c6c6c" stroke-width="2"/></svg>
<div class="abs pbtn" style="left:1319px;top:284px"></div>
<svg class="abs" style="left:1323px;top:286px" width="10" height="8" viewBox="0 0 10 8"><rect x="1" y="1" width="8" height="5.500" fill="none" stroke="#6c6c6c" stroke-width="1.800"/></svg>
<div class="abs pbtn" style="left:1341px;top:284px"></div>
<svg class="abs" style="left:1345px;top:286px" width="10" height="8" viewBox="0 0 10 8"><path d="M1.500 1l6.500 6M8 1L1.500 7" stroke="#6c6c6c" stroke-width="2"/></svg>
<!-- SCROLLBAR ROW -->
<div class="abs" style="left:35px;top:653px;width:1329px;height:21px;background:#f6f6f6"></div>
<div class="abs" style="left:35px;top:653px;width:16px;height:20px;background:#e4e4e4;border:1px solid #c4c4c4;border-right-color:#a8a8a8;border-bottom-color:#a8a8a8"></div>
<svg class="abs" style="left:39px;top:658px" width="8" height="10"><path d="M6.5 0.5L1.5 5L6.5 9.500z" fill="#8c8c8c"/></svg>
<div class="abs" style="left:886px;top:653px;width:247px;height:18px;background:#dedede;border-bottom:1px solid #a0a0a0"></div>
<div class="abs" style="left:1134px;top:653px;width:15px;height:20px;background:#ececec;border:1px solid #b0b0b0"></div>
<svg class="abs" style="left:1138px;top:658px" width="8" height="10"><path d="M2 0.5L7 5L2 9.500z" fill="#707070"/></svg>
<div class="abs" style="left:1151px;top:653px;width:2px;height:21px;background:#9a9a9a"></div>
<div class="abs" style="left:1153px;top:653px;width:211px;height:21px;background:#ebebeb"></div>
<svg class="abs" style="left:1158px;top:656px" width="14" height="14" viewBox="0 0 14 14"><path d="M2.500 6a4.500 4.500 0 0 1 8-2l1.500-1.500v5h-5l1.800-1.800a2.500 2.500 0 0 0-4.300.8z" fill="#404040"/><path d="M11.500 8a4.500 4.500 0 0 1-8 2l-1.500 1.500v-5h5l-1.800 1.800a2.500 2.500 0 0 0 4.300-.8z" fill="#404040"/></svg>
<div class="abs" style="left:1183px;top:655px;font-size:12.5px;font-weight:bold;line-height:16px;color:#505050">D</div>
<div class="abs" style="left:1199px;top:657px;width:1px;height:14px;background:#b0b0b0"></div>
<svg class="abs" style="left:1209px;top:657px" width="8" height="13" viewBox="0 0 8 13"><path d="M4 0L7.500 4h-2.500v5h2.500L4 13 0.500 9h2.500V4H0.500z" fill="#404040"/></svg>
<svg class="abs" style="left:1227px;top:655px" width="16" height="16" viewBox="0 0 16 16"><path d="M8 0l3 3.500h-2v3.500h3.500v-2L16 8l-3.500 3v-2H9v3.500h2L8 16l-3-3.500h2V9H3.500v2L0 8l3.500-3v2H7V3.500H5z" fill="#404040"/></svg>
<svg class="abs" style="left:1250px;top:657px" width="13" height="13" viewBox="0 0 13 13"><circle cx="6.500" cy="6.500" r="5" fill="none" stroke="#404040" stroke-width="1.200"/><path d="M4 6.500h5" stroke="#404040" stroke-width="1.800"/></svg>
<svg class="abs" style="left:1270px;top:657px" width="13" height="13" viewBox="0 0 13 13"><circle cx="6.500" cy="6.500" r="5" fill="none" stroke="#404040" stroke-width="1.200"/><path d="M4 6.500h5M6.500 4v5" stroke="#404040" stroke-width="1.800"/></svg>
<div class="abs" style="left:1289px;top:657px;width:1px;height:14px;background:#b0b0b0"></div>
<svg class="abs" style="left:1299px;top:659px" width="7" height="9" viewBox="0 0 7 9"><path d="M6 0.500L1 4.500L6 8.500z" fill="#c4c4c4"/></svg>
<svg class="abs" style="left:1321px;top:659px" width="7" height="9" viewBox="0 0 7 9"><path d="M1 0.500L6 4.500L1 8.500z" fill="#c4c4c4"/></svg>
<div class="abs" style="left:1359px;top:656px;width:1px;height:15px;background:#b0b0b0"></div>
<svg class="abs" style="left:1338px;top:657px" width="14" height="13" viewBox="0 0 14 13"><rect x="1" y="1" width="12" height="11" fill="#f4f4f4" stroke="#404040" stroke-width="1.300"/><path d="M1 3.500h12" stroke="#404040" stroke-width="2"/><path d="M3 6.500h8M3 9h8" stroke="#404040" stroke-width="1"/></svg>
<!-- BOTTOM TOOLBAR -->
<div class="abs" style="left:0;top:676px;width:1366px;height:34px;background:#e9e9e9"></div>
<div class="abs" style="left:0;top:676px;width:1366px;height:1px;background:#fafafa"></div>
<div class="abs" style="left:5px;top:678px;width:6px;height:30px;background:linear-gradient(90deg,#e4e4e4,#c8c8c8)"></div><div class="abs" style="left:7px;top:690px;width:3px;height:4px;background:#777"></div>
<div class="abs" style="left:13px;top:684px;width:127px;height:19px;background:#fff;border:2px solid #7c7c7c;border-right-color:#e0e0e0;border-bottom-color:#e0e0e0"></div>
<div class="abs" style="left:27px;top:693px;width:81px;height:1px;background:#000"></div>
<div class="abs" style="left:122px;top:686px;width:16px;height:15px;background:linear-gradient(#f8f8f8,#e0e0e0);border:1px solid #f8f8f8;border-right-color:#707070;border-bottom-color:#707070"></div>
<svg class="abs" style="left:126px;top:691px" width="9" height="6" viewBox="0 0 9 6"><path d="M0.500 0.500h8l-4 4.500z" fill="#000"/></svg>
<div class="abs" style="left:148px;top:684px;width:99px;height:19px;background:#fff;border:2px solid #7c7c7c;border-right-color:#e0e0e0;border-bottom-color:#e0e0e0"></div>
<div class="abs" style="left:162px;top:693px;width:53px;height:1px;background:#000"></div>
<div class="abs" style="left:229px;top:686px;width:16px;height:15px;background:linear-gradient(#f8f8f8,#e0e0e0);border:1px solid #f8f8f8;border-right-color:#707070;border-bottom-color:#707070"></div>
<svg class="abs" style="left:233px;top:691px" width="9" height="6" viewBox="0 0 9 6"><path d="M0.500 0.500h8l-4 4.500z" fill="#000"/></svg>
<div class="abs" style="left:255px;top:678px;width:1px;height:30px;background:#b8b8b8"></div><div class="abs" style="left:145px;top:680px;width:1px;height:27px;background:#c0c0c0"></div>
<div class="abs" style="left:261px;top:678px;width:6px;height:30px;background:linear-gradient(90deg,#e4e4e4,#c8c8c8)"></div><div class="abs" style="left:263px;top:690px;width:3px;height:4px;background:#777"></div>
<div class="abs" style="left:273.0px;top:682.0px;width:10px;height:10px;background:#f4b848;box-shadow:0 0 0 0.5px #b0b0b0"></div>
<div class="abs" style="left:284.75px;top:682.0px;width:10px;height:10px;background:#ff0000;box-shadow:0 0 0 0.5px #b0b0b0"></div>
<div class="abs" style="left:296.5px;top:682.0px;width:10px;height:10px;background:#d860d8;box-shadow:0 0 0 0.5px #b0b0b0"></div>
<div class="abs" style="left:308.25px;top:682.0px;width:10px;height:10px;background:#ffb8cc;box-shadow:0 0 0 0.5px #b0b0b0"></div>
<div class="abs" style="left:320.0px;top:682.0px;width:10px;height:10px;background:#ffffff;box-shadow:0 0 0 0.5px #b0b0b0"></div>
<div class="abs" style="left:331.75px;top:682.0px;width:10px;height:10px;background:#008000;box-shadow:0 0 0 0.5px #b0b0b0"></div>
<div class="abs" style="left:343.5px;top:682.0px;width:10px;height:10px;background:#006000;box-shadow:0 0 0 0.5px #b0b0b0"></div>
<div class="abs" style="left:355.25px;top:682.0px;width:10px;height:10px;background:#000000;box-shadow:0 0 0 0.5px #b0b0b0"></div>
<div class="abs" style="left:273.0px;top:694.4px;width:10px;height:10px;background:#f08010;box-shadow:0 0 0 0.5px #b0b0b0"></div>
<div class="abs" style="left:284.75px;top:694.4px;width:10px;height:10px;background:#e06010;box-shadow:0 0 0 0.5px #b0b0b0"></div>
<div class="abs" style="left:296.5px;top:694.4px;width:10px;height:10px;background:#8888d0;box-shadow:0 0 0 0.5px #b0b0b0"></div>
<div class="abs" style="left:308.25px;top:694.4px;width:10px;height:10px;background:#ffd8e0;box-shadow:0 0 0 0.5px #b0b0b0"></div>
<div class="abs" style="left:320.0px;top:694.4px;width:10px;height:10px;background:#000080;box-shadow:0 0 0 0.5px #b0b0b0"></div>
<div class="abs" style="left:331.75px;top:694.4px;width:10px;height:10px;background:#0000a0;box-shadow:0 0 0 0.5px #b0b0b0"></div>
<div class="abs" style="left:343.5px;top:694.4px;width:10px;height:10px;background:#f0d000;box-shadow:0 0 0 0.5px #b0b0b0"></div>
<div class="abs" style="left:355.25px;top:694.4px;width:10px;height:10px;background:#004848;box-shadow:0 0 0 0.5px #b0b0b0"></div>
<div class="abs" style="left:284px;top:681px;width:12px;height:12px;border:1px dotted #fff;outline:1px solid #505050"></div>
<svg class="abs" style="left:367px;top:690px" width="7" height="5" viewBox="0 0 7 5"><path d="M0.500 0.500h6l-3 3.500z" fill="#000"/></svg>
<div class="abs" style="left:381px;top:679px;width:1px;height:28px;background:#b8b8b8"></div>
<div class="abs" style="left:389px;top:678px;width:6px;height:30px;background:linear-gradient(90deg,#e4e4e4,#c8c8c8)"></div><div class="abs" style="left:391px;top:690px;width:3px;height:4px;background:#777"></div>
<div class="abs" style="left:403px;top:687px;width:17px;height:13px;background:#fff;border:1px solid #5078a8;border-top:2px solid #a8c0dc"></div>
<svg class="abs" style="left:404px;top:690px" width="8" height="9" viewBox="0 0 8 9"><path d="M1 7l3-4 2 2" stroke="#d02020" fill="none" stroke-width="1.200"/></svg>
<div class="abs" style="left:411px;top:688px;font-size:11px;line-height:12px;color:#000">1</div>
<div class="abs" style="left:430px;top:687px;width:17px;height:13px;background:#fff;border:1px solid #5078a8;border-top:2px solid #a8c0dc"></div>
<svg class="abs" style="left:431px;top:690px" width="8" height="9" viewBox="0 0 8 9"><path d="M1 7l3-4 2 2" stroke="#d02020" fill="none" stroke-width="1.200"/></svg>
<div class="abs" style="left:438px;top:688px;font-size:11px;line-height:12px;color:#000">2</div>
<div class="abs" style="left:457px;top:687px;width:17px;height:13px;background:#fff;border:1px solid #5078a8;border-top:2px solid #a8c0dc"></div>
<svg class="abs" style="left:458px;top:690px" width="8" height="9" viewBox="0 0 8 9"><path d="M1 7l3-4 2 2" stroke="#d02020" fill="none" stroke-width="1.200"/></svg>
<div class="abs" style="left:465px;top:688px;font-size:11px;line-height:12px;color:#000">3</div>
<div class="abs" style="left:484px;top:687px;width:17px;height:13px;background:#fff;border:1px solid #5078a8;border-top:2px solid #a8c0dc"></div>
<svg class="abs" style="left:485px;top:690px" width="8" height="9" viewBox="0 0 8 9"><path d="M1 7l3-4 2 2" stroke="#d02020" fill="none" stroke-width="1.200"/></svg>
<div class="abs" style="left:492px;top:688px;font-size:11px;line-height:12px;color:#000">4</div>
<div class="abs" style="left:511px;top:687px;width:17px;height:13px;background:#fff;border:1px solid #5078a8;border-top:2px solid #a8c0dc"></div>
<svg class="abs" style="left:512px;top:690px" width="8" height="9" viewBox="0 0 8 9"><path d="M1 7l3-4 2 2" stroke="#d02020" fill="none" stroke-width="1.200"/></svg>
<div class="abs" style="left:519px;top:688px;font-size:11px;line-height:12px;color:#000">5</div>
<div class="abs" style="left:538px;top:687px;width:17px;height:13px;background:#fff;border:1px solid #5078a8;border-top:2px solid #a8c0dc"></div>
<svg class="abs" style="left:539px;top:690px" width="8" height="9" viewBox="0 0 8 9"><path d="M1 7l3-4 2 2" stroke="#d02020" fill="none" stroke-width="1.200"/></svg>
<div class="abs" style="left:546px;top:688px;font-size:11px;line-height:12px;color:#000">6</div>
<div class="abs" style="left:566px;top:679px;width:1px;height:28px;background:#c8c8c8"></div>
<!-- STATUS -->
<div id="status" class="abs"><span class="abs" style="left:10px">For Help, press F1</span><span class="abs" style="left:1095px">24/04/2020</span><span class="abs" style="left:1252px">0.14301</span>
<div class="abs" style="left:1346px;top:3px;width:20px;height:14px;background:#f4fff4;color:#008000;font-weight:bold;font-size:13px;line-height:14px;text-align:center">$</div></div>
<!-- TASKBAR -->
<div id="task" class="abs">
<!-- highlighted buttons -->
<div class="abs" style="left:176px;top:0;width:58px;height:40px;background:linear-gradient(#d4b070,#e0c690 60%,#d8b878);border:1px solid #f0dcb0"></div>
<div class="abs" style="left:238px;top:0;width:58px;height:40px;background:rgba(255,240,200,.22);border:1px solid rgba(255,240,200,.35)"></div>
<div class="abs" style="left:548px;top:0;width:58px;height:40px;background:rgba(255,240,200,.22);border:1px solid rgba(255,240,200,.35)"></div>
<!-- windows logo -->
<svg class="abs" style="left:12px;top:5px" width="27" height="28" viewBox="0 0 27 28"><path d="M0 4.500L11 2.800v10.400H0zM12.500 2.600L27 0.500v12.700H12.500zM0 14.700h11v10.500L0 23.500zM12.500 14.700H27v12.800L12.500 25.400z" fill="#fff"/></svg>
<!-- explorer -->
<svg class="abs" style="left:66px;top:5px" width="31" height="29" viewBox="0 0 31 29"><path d="M1 4h9l2 2h17v18H1z" fill="#e8c050" stroke="#b8902c"/><rect x="2" y="8" width="27" height="15" fill="#f8e090"/><rect x="3" y="2.500" width="4" height="2.500" fill="#30a040"/><rect x="12" y="4" width="4" height="2.500" fill="#d03030"/><rect x="19" y="5" width="5" height="2.500" fill="#3080d0"/><path d="M4 19h23v8h-4v-3.500H8V27H4z" fill="#b8e0f8" stroke="#4898d0" stroke-width="1.200"/></svg>
<!-- powerpoint -->
<svg class="abs" style="left:128px;top:3px" width="31" height="32" viewBox="0 0 31 32"><rect x="14" y="5" width="16" height="22" fill="#fff" stroke="#d04a28" stroke-width="1.500"/><circle cx="22.500" cy="12" r="4" fill="#d04a28"/><path d="M22.500 12V8a4 4 0 0 1 4 4z" fill="#fff"/><path d="M18 19h9M18 22h9" stroke="#d04a28" stroke-width="1.500"/><path d="M0 3.500L18 0.500v31L0 28.500z" fill="#d04a28"/><text x="4" y="22" font-size="16" font-weight="bold" fill="#fff" font-family="Liberation Sans">P</text></svg>
<!-- metastock -->
<svg class="abs" style="left:189px;top:3px" width="33" height="33" viewBox="0 0 33 33"><rect x="0.500" y="0.500" width="32" height="32" rx="4" fill="#0c0c0c"/><path d="M8 29l1.500-9h3.500l-1.500 9zM14 29l3-17h3.500l-3 17zM20 29l4-24h3.500l-4 24z" fill="#f08018"/></svg>
<!-- chrome -->
<svg class="abs" style="left:252px;top:4px" width="31" height="31" viewBox="0 0 31 31"><circle cx="15.500" cy="15.500" r="15" fill="#e8c020"/><path d="M15.500 15.500L2.500 8A15 15 0 0 1 28.500 8z" fill="#dc4030"/><path d="M15.500 0.500A15 15 0 0 1 28.500 8H15.500z" fill="#dc4030"/><path d="M2.500 8A15 15 0 0 0 13 30.300L19 19.500 9.500 19z" fill="#20a050"/><circle cx="15.500" cy="15.500" r="7" fill="#fff"/><circle cx="15.500" cy="15.500" r="5.500" fill="#4888f0"/></svg>
<!-- word -->
<svg class="abs" style="left:314px;top:3px" width="31" height="32" viewBox="0 0 31 32"><rect x="14" y="5" width="16" height="22" fill="#fff" stroke="#2c58a0" stroke-width="1.500"/><path d="M19 10h9M19 13h9M19 16h9M19 19h9M19 22h9" stroke="#2c58a0" stroke-width="1.500"/><path d="M0 3.500L18 0.500v31L0 28.500z" fill="#2c58a0"/><text x="2" y="22" font-size="15" font-weight="bold" fill="#fff" font-family="Liberation Sans">W</text></svg>
<!-- maxthon -->
<svg class="abs" style="left:376px;top:3px" width="31" height="31" viewBox="0 0 31 31"><rect x="0.500" y="0.500" width="30" height="30" rx="5" fill="#1c6cf0"/><path d="M7 21V11h17v10h-4.500v-6h-2v6h-4v-6h-2v6z" fill="#fff"/></svg>
<!-- calculator -->
<svg class="abs" style="left:441px;top:3px" width="27" height="32" viewBox="0 0 27 32"><rect x="1" y="1" width="25" height="30" rx="2" fill="#c8dcf0" stroke="#6890b8"/><rect x="4" y="4" width="19" height="7" fill="#f0f8ff" stroke="#88a8c8"/><g fill="#7ca4d0"><rect x="4" y="14" width="4" height="3"/><rect x="10" y="14" width="4" height="3"/><rect x="16" y="14" width="4" height="3"/><rect x="4" y="19" width="4" height="3"/><rect x="10" y="19" width="4" height="3"/><rect x="16" y="19" width="4" height="3"/><rect x="4" y="24" width="4" height="3"/><rect x="10" y="24" width="4" height="3"/><rect x="16" y="24" width="4" height="3"/></g><rect x="21" y="14" width="3" height="13" fill="#e0a040"/></svg>
<!-- IE -->
<svg class="abs" style="left:499px;top:1px" width="34" height="34" viewBox="0 0 34 34"><path d="M29 19.500A11.500 11.500 0 1 0 27.500 24h-6.500a6 6 0 0 1-9.800-3.500H29zM11.300 15.200a6 6 0 0 1 11.600 0z" fill="#3cb4f0" stroke="#1c8cd0" stroke-width=".6"/><path d="M5 30C1 27 4 18 12 10.500 19 4 28 0.500 31 3.500c1.500 1.500 1 4.500-1 8" fill="none" stroke="#f4c41c" stroke-width="2.400" stroke-linecap="round"/><path d="M5 30c2 1.500 5.500.5 9-1.500" fill="none" stroke="#f4c41c" stroke-width="2.400" stroke-linecap="round"/></svg>
<!-- excel -->
<svg class="abs" style="left:561px;top:3px" width="31" height="32" viewBox="0 0 31 32"><rect x="14" y="5" width="16" height="22" fill="#fff" stroke="#1c7040" stroke-width="1.500"/><path d="M19 9h4M25 9h4M19 13h4M25 13h4M19 17h4M25 17h4M19 21h4M25 21h4" stroke="#1c7040" stroke-width="2"/><path d="M0 3.500L18 0.500v31L0 28.500z" fill="#1c7040"/><text x="3.500" y="22" font-size="16" font-weight="bold" fill="#fff" font-family="Liberation Sans">X</text></svg>
<!-- firefox -->
<svg class="abs" style="left:625px;top:2px" width="32" height="32" viewBox="0 0 32 32"><circle cx="16.500" cy="15" r="12.500" fill="#2c4cb4"/><path d="M8 6c4-4 12-4 16 0 2 3 2 6 0 8-2-3-5-4-8-3-3 0-6-2-8-5z" fill="#5c9ce8"/><path d="M3 10c0-3 2-6 4-7-.5 2 0 3.500 1 4.500 2-1.500 5-1.500 7 .5-2.500 0-4 1.500-4 3.500l3 1.500c0 2-2 3-4 2.500 1 4 5 6 9 5 4-1 6-5 5.500-9 1 1 1.500 2 1.500 3.500 1-3 0-7-2-9.500 4 3 5.500 8 4.500 13C27 25 22 31 15 31 8 31 2 25 2 17c0-3 .3-5 1-7z" fill="#f0801c"/><path d="M2 17c0 8 6 14 13 14 5 0 10-3 12.500-8C24 27 19 29 14 27.500 8 26 4.500 21 5 15c-1.500 0-2.500 1-3 2z" fill="#f8c030"/></svg>
<!-- help ? -->
<svg class="abs" style="left:686px;top:4px" width="30" height="30" viewBox="0 0 30 30"><rect x="0" y="0" width="30" height="30" fill="#dc4a24"/><circle cx="15" cy="15" r="10.500" fill="none" stroke="#fff" stroke-width="2.300"/><text x="15" y="21" font-size="16" font-weight="bold" fill="#fff" text-anchor="middle" font-family="Liberation Sans">?</text></svg>
<!-- outlook -->
<svg class="abs" style="left:748px;top:4px" width="31" height="30" viewBox="0 0 31 30"><rect x="13" y="7" width="17" height="14" fill="#fff" stroke="#1c70c8" stroke-width="1.500"/><path d="M13 8l8.500 7L30 8" fill="none" stroke="#1c70c8" stroke-width="1.500"/><path d="M0 3L17 0.500v29L0 27z" fill="#1c70c8"/><ellipse cx="8.500" cy="15" rx="4" ry="5.500" fill="none" stroke="#fff" stroke-width="2.600"/></svg>
<!-- project-ish -->
<svg class="abs" style="left:808px;top:2px" width="35" height="34" viewBox="0 0 35 34"><path d="M3 4l26-3 3 26-26 5z" fill="#e8ece8" stroke="#a8b0a8"/><path d="M7 9l16-2 .5 4-9 1 .3 3 12-1.500.5 4-16 2-.5-4 9-1-.3-3-12 1.500z" fill="#3c7c3c"/><path d="M9 23l18-2" stroke="#3c7c3c" stroke-width="3"/></svg>
<!-- Pro -->
<svg class="abs" style="left:870px;top:2px" width="34" height="34" viewBox="0 0 34 34"><rect x="1.500" y="1.500" width="31" height="31" rx="5" fill="none" stroke="#b8283c" stroke-width="1.200"/><path d="M10 10h9l3-3 2 2-2 1 1 2h-13z" fill="#a02030"/><text x="17" y="27" font-size="14.500" fill="#a82038" text-anchor="middle" font-family="Liberation Sans">Pro</text></svg>
<!-- tray -->
<svg class="abs" style="left:1077px;top:17px" width="10" height="6" viewBox="0 0 10 6"><path d="M0 6L5 0l5 6z" fill="#fff"/></svg>
<svg class="abs" style="left:1099px;top:11px" width="17" height="20" viewBox="0 0 17 20"><rect x="3" y="1" width="7" height="12" rx="1" fill="#d0d0d0" stroke="#707070"/><rect x="5" y="13" width="3" height="4" fill="#909090"/><circle cx="11.500" cy="14.500" r="5" fill="#20a030"/><path d="M9 14.500l2 2 3.500-4" stroke="#fff" stroke-width="1.600" fill="none"/></svg>
<svg class="abs" style="left:1123px;top:11px" width="17" height="18" viewBox="0 0 17 18"><circle cx="8.500" cy="9" r="8" fill="#e8f0f8" stroke="#8098b8"/><path d="M3 5c3-3 8-3 11 0-1 3-3 2-4 4s2 4 0 6c-3 1-7-1-8-4 1-2 3-2 2-4z" fill="#3088d8"/><path d="M9 12l6 4" stroke="#40a040" stroke-width="2"/></svg>
<svg class="abs" style="left:1147px;top:12px" width="17" height="16" viewBox="0 0 17 16"><path d="M1 5.500h3.500L9 1.500v13L4.500 10.500H1z" fill="#fff"/><path d="M11 4.500q2 3.500 0 7M13.500 2.500q3 5.500 0 11" stroke="#fff" fill="none" stroke-width="1.300"/></svg>
<svg class="abs" style="left:1170px;top:11px" width="18" height="18" viewBox="0 0 18 18"><path d="M2 1v16" stroke="#fff" stroke-width="2"/><path d="M4 2h6v2h6l-2 4 2 4H9V10H4z" fill="none" stroke="#fff" stroke-width="1.500"/></svg>
<svg class="abs" style="left:1195px;top:13px" width="16" height="14" viewBox="0 0 16 14"><g fill="#fff"><rect x="0" y="11" width="2" height="3"/><rect x="3.500" y="8.500" width="2" height="5.500"/><rect x="7" y="6" width="2" height="8"/><rect x="10.500" y="3" width="2" height="11" fill-opacity=".5"/><rect x="14" y="0" width="2" height="14" fill-opacity=".5"/></g></svg>
<svg class="abs" style="left:1218px;top:10px" width="16" height="20" viewBox="0 0 16 20"><rect x="7" y="3" width="8" height="16" rx="1" fill="none" stroke="#fff" stroke-width="1.500"/><rect x="9.500" y="1" width="3" height="2" fill="#fff"/><rect x="9" y="9" width="4" height="8" fill="#fff"/><path d="M1.500 3v4M4.500 3v4M0.500 7h5v3h-1.500v6h-2v-6H0.500z" fill="#fff" stroke="#fff" stroke-width=".8"/></svg>
<div class="abs" style="left:1249px;top:12px;color:#fff;font-size:12px;line-height:16px;transform:scaleX(.92);transform-origin:0 0">POR</div>
<div class="abs" style="left:1288px;top:4px;width:60px;color:#fff;font-size:12px;line-height:16px;text-align:center;transform:scaleX(.9)">19:15</div>
<div class="abs" style="left:1283px;top:21px;width:70px;color:#fff;font-size:12px;line-height:16px;text-align:center;transform:scaleX(.9)">20/04/2020</div>

</div>
</body></html>
